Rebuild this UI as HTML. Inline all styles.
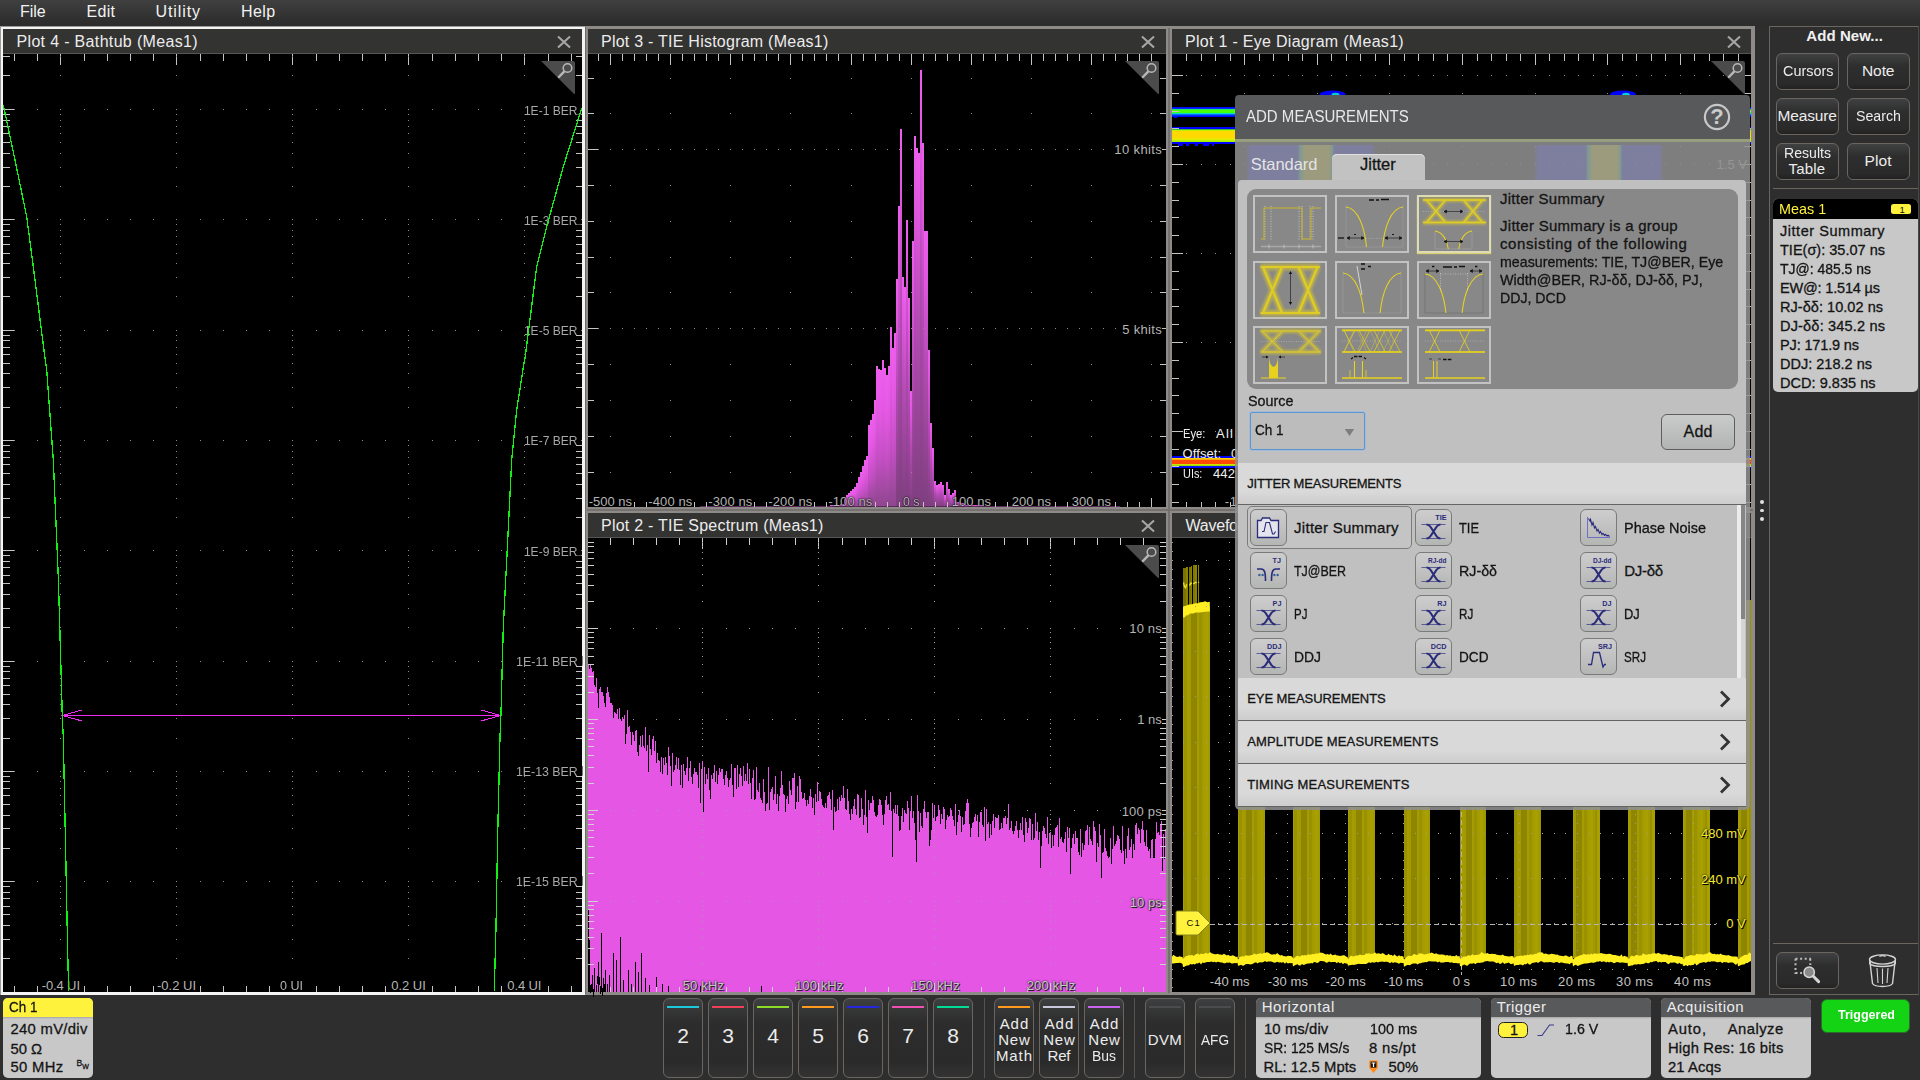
<!DOCTYPE html>
<html><head><meta charset="utf-8"><title>scope</title>
<style>
html,body{margin:0;padding:0;width:1920px;height:1080px;overflow:hidden;background:#2e2e2e;font-family:"Liberation Sans",sans-serif;}
.t{position:absolute;white-space:nowrap;}
svg{position:absolute;left:0;top:0;overflow:visible}
.abs{position:absolute}
</style></head><body>
<div style="position:absolute;left:0;top:0;width:1920px;height:26px;background:linear-gradient(#404040,#2d2d2d 85%)"></div>
<div class="t" style="left:20.00px;top:4.38px;font-size:16px;line-height:16px;color:#f2f2f2;letter-spacing:-0.050px;">File</div>
<div class="t" style="left:86.50px;top:4.38px;font-size:16px;line-height:16px;color:#f2f2f2;letter-spacing:0.292px;">Edit</div>
<div class="t" style="left:155.60px;top:4.38px;font-size:16px;line-height:16px;color:#f2f2f2;letter-spacing:0.879px;">Utility</div>
<div class="t" style="left:241.00px;top:4.38px;font-size:16px;line-height:16px;color:#f2f2f2;letter-spacing:0.375px;">Help</div>
<div style="position:absolute;left:0;top:26px;width:1754.5px;height:969px;background:#8e8a88"></div>
<div style="position:absolute;left:0;top:26px;width:585px;height:969px;background:#f4f4f4;box-shadow:inset 1px 1px 0 #9a9a9a"></div>
<div style="position:absolute;left:1168px;top:28px;width:2px;height:965px;background:#75716f"></div>
<div style="position:absolute;left:587px;top:509px;width:1166px;height:2px;background:#75716f"></div>
<div style="position:absolute;left:585px;top:27px;width:1px;height:967px;background:#6e6a68"></div>
<div style="position:absolute;left:3px;top:29px;width:579px;height:963px;background:#000"></div>
<div style="position:absolute;left:3px;top:29px;width:579px;height:24px;background:#333332;border-bottom:1px solid #555"></div>
<div class="t" style="left:16.50px;top:34.48px;font-size:16px;line-height:16px;color:#ececec;letter-spacing:0.332px;">Plot 4 - Bathtub (Meas1)</div>
<svg style="position:absolute;left:555.7px;top:33.8px" width="16" height="16" viewBox="-8 -8 16 16"><path d="M-6 -5.6 L6 5.6 M6 -5.6 L-6 5.6" stroke="#a6a6a6" stroke-width="2.1" fill="none"/></svg>
<div style="position:absolute;left:588px;top:29px;width:578px;height:478px;background:#000"></div>
<div style="position:absolute;left:588px;top:29px;width:578px;height:24px;background:#333332;border-bottom:1px solid #555"></div>
<div class="t" style="left:601.00px;top:34.48px;font-size:16px;line-height:16px;color:#ececec;letter-spacing:0.243px;">Plot 3 - TIE Histogram (Meas1)</div>
<svg style="position:absolute;left:1139.7px;top:33.8px" width="16" height="16" viewBox="-8 -8 16 16"><path d="M-6 -5.6 L6 5.6 M6 -5.6 L-6 5.6" stroke="#a6a6a6" stroke-width="2.1" fill="none"/></svg>
<div style="position:absolute;left:588px;top:513px;width:578px;height:479px;background:#000"></div>
<div style="position:absolute;left:588px;top:513px;width:578px;height:24px;background:#333332;border-bottom:1px solid #555"></div>
<div class="t" style="left:601.00px;top:518.48px;font-size:16px;line-height:16px;color:#ececec;letter-spacing:0.234px;">Plot 2 - TIE Spectrum (Meas1)</div>
<svg style="position:absolute;left:1139.7px;top:517.8px" width="16" height="16" viewBox="-8 -8 16 16"><path d="M-6 -5.6 L6 5.6 M6 -5.6 L-6 5.6" stroke="#a6a6a6" stroke-width="2.1" fill="none"/></svg>
<div style="position:absolute;left:1172px;top:29px;width:579px;height:478px;background:#000"></div>
<div style="position:absolute;left:1172px;top:29px;width:579px;height:24px;background:#333332;border-bottom:1px solid #555"></div>
<div class="t" style="left:1185.00px;top:34.48px;font-size:16px;line-height:16px;color:#ececec;letter-spacing:0.294px;">Plot 1 - Eye Diagram (Meas1)</div>
<svg style="position:absolute;left:1725.7px;top:33.8px" width="16" height="16" viewBox="-8 -8 16 16"><path d="M-6 -5.6 L6 5.6 M6 -5.6 L-6 5.6" stroke="#a6a6a6" stroke-width="2.1" fill="none"/></svg>
<div style="position:absolute;left:1172px;top:513px;width:579px;height:479px;background:#000"></div>
<div style="position:absolute;left:1172px;top:513px;width:579px;height:24px;background:#333332;border-bottom:1px solid #555"></div>
<div class="t" style="left:1185.50px;top:518.48px;font-size:16px;line-height:16px;color:#ececec;letter-spacing:-0.229px;">Waveform View</div>
<svg style="position:absolute;left:1725.7px;top:517.8px" width="16" height="16" viewBox="-8 -8 16 16"><path d="M-6 -5.6 L6 5.6 M6 -5.6 L-6 5.6" stroke="#a6a6a6" stroke-width="2.1" fill="none"/></svg>
<svg width="1920" height="1080" viewBox="0 0 1920 1080" shape-rendering="crispEdges"><path fill="#c4c4c4" d="M14 54h1v7h-1zM14 986h1v6h-1zM37 54h1v7h-1zM37 986h1v6h-1zM60 54h1v11h-1zM60 982h1v10h-1zM84 54h1v7h-1zM84 986h1v6h-1zM107 54h1v7h-1zM107 986h1v6h-1zM130 54h1v7h-1zM130 986h1v6h-1zM153 54h1v7h-1zM153 986h1v6h-1zM176 54h1v11h-1zM176 982h1v10h-1zM200 54h1v7h-1zM200 986h1v6h-1zM223 54h1v7h-1zM223 986h1v6h-1zM246 54h1v7h-1zM246 986h1v6h-1zM269 54h1v7h-1zM269 986h1v6h-1zM292 54h1v11h-1zM292 982h1v10h-1zM316 54h1v7h-1zM316 986h1v6h-1zM339 54h1v7h-1zM339 986h1v6h-1zM362 54h1v7h-1zM362 986h1v6h-1zM385 54h1v7h-1zM385 986h1v6h-1zM408 54h1v11h-1zM408 982h1v10h-1zM432 54h1v7h-1zM432 986h1v6h-1zM455 54h1v7h-1zM455 986h1v6h-1zM478 54h1v7h-1zM478 986h1v6h-1zM501 54h1v7h-1zM501 986h1v6h-1zM524 54h1v11h-1zM524 982h1v10h-1zM548 54h1v7h-1zM548 986h1v6h-1zM571 54h1v7h-1zM571 986h1v6h-1zM3 75h7v1h-7zM576 75h6v1h-6zM3 56h7v1h-7zM576 56h6v1h-6zM3 186h7v1h-7zM576 186h6v1h-6zM3 167h7v1h-7zM576 167h6v1h-6zM3 153h7v1h-7zM576 153h6v1h-6zM3 142h7v1h-7zM576 142h6v1h-6zM3 133h7v1h-7zM576 133h6v1h-6zM3 126h7v1h-7zM576 126h6v1h-6zM3 120h7v1h-7zM576 120h6v1h-6zM3 114h7v1h-7zM576 114h6v1h-6zM3 296h7v1h-7zM576 296h6v1h-6zM3 277h7v1h-7zM576 277h6v1h-6zM3 263h7v1h-7zM576 263h6v1h-6zM3 253h7v1h-7zM576 253h6v1h-6zM3 244h7v1h-7zM576 244h6v1h-6zM3 236h7v1h-7zM576 236h6v1h-6zM3 230h7v1h-7zM576 230h6v1h-6zM3 224h7v1h-7zM576 224h6v1h-6zM3 407h7v1h-7zM576 407h6v1h-6zM3 387h7v1h-7zM576 387h6v1h-6zM3 373h7v1h-7zM576 373h6v1h-6zM3 363h7v1h-7zM576 363h6v1h-6zM3 354h7v1h-7zM576 354h6v1h-6zM3 347h7v1h-7zM576 347h6v1h-6zM3 340h7v1h-7zM576 340h6v1h-6zM3 335h7v1h-7zM576 335h6v1h-6zM3 517h7v1h-7zM576 517h6v1h-6zM3 498h7v1h-7zM576 498h6v1h-6zM3 484h7v1h-7zM576 484h6v1h-6zM3 473h7v1h-7zM576 473h6v1h-6zM3 464h7v1h-7zM576 464h6v1h-6zM3 457h7v1h-7zM576 457h6v1h-6zM3 451h7v1h-7zM576 451h6v1h-6zM3 445h7v1h-7zM576 445h6v1h-6zM3 627h7v1h-7zM576 627h6v1h-6zM3 608h7v1h-7zM576 608h6v1h-6zM3 594h7v1h-7zM576 594h6v1h-6zM3 583h7v1h-7zM576 583h6v1h-6zM3 575h7v1h-7zM576 575h6v1h-6zM3 567h7v1h-7zM576 567h6v1h-6zM3 561h7v1h-7zM576 561h6v1h-6zM3 555h7v1h-7zM576 555h6v1h-6zM3 738h7v1h-7zM576 738h6v1h-6zM3 718h7v1h-7zM576 718h6v1h-6zM3 704h7v1h-7zM576 704h6v1h-6zM3 694h7v1h-7zM576 694h6v1h-6zM3 685h7v1h-7zM576 685h6v1h-6zM3 678h7v1h-7zM576 678h6v1h-6zM3 671h7v1h-7zM576 671h6v1h-6zM3 666h7v1h-7zM576 666h6v1h-6zM3 848h7v1h-7zM576 848h6v1h-6zM3 828h7v1h-7zM576 828h6v1h-6zM3 815h7v1h-7zM576 815h6v1h-6zM3 804h7v1h-7zM576 804h6v1h-6zM3 795h7v1h-7zM576 795h6v1h-6zM3 788h7v1h-7zM576 788h6v1h-6zM3 781h7v1h-7zM576 781h6v1h-6zM3 776h7v1h-7zM576 776h6v1h-6zM3 958h7v1h-7zM576 958h6v1h-6zM3 939h7v1h-7zM576 939h6v1h-6zM3 925h7v1h-7zM576 925h6v1h-6zM3 914h7v1h-7zM576 914h6v1h-6zM3 906h7v1h-7zM576 906h6v1h-6zM3 898h7v1h-7zM576 898h6v1h-6zM3 892h7v1h-7zM576 892h6v1h-6zM3 886h7v1h-7zM576 886h6v1h-6zM3 109h11v1h-11zM571 109h11v1h-11zM3 219h11v1h-11zM571 219h11v1h-11zM3 330h11v1h-11zM571 330h11v1h-11zM3 440h11v1h-11zM571 440h11v1h-11zM3 550h11v1h-11zM571 550h11v1h-11zM3 661h11v1h-11zM571 661h11v1h-11zM3 771h11v1h-11zM571 771h11v1h-11zM3 881h11v1h-11zM571 881h11v1h-11z"/><path fill="#8c8c8c" d="M14 109h1v1h-1zM37 109h1v1h-1zM60 109h1v1h-1zM84 109h1v1h-1zM107 109h1v1h-1zM130 109h1v1h-1zM153 109h1v1h-1zM176 109h1v1h-1zM200 109h1v1h-1zM223 109h1v1h-1zM246 109h1v1h-1zM269 109h1v1h-1zM292 109h1v1h-1zM316 109h1v1h-1zM339 109h1v1h-1zM362 109h1v1h-1zM385 109h1v1h-1zM408 109h1v1h-1zM432 109h1v1h-1zM455 109h1v1h-1zM478 109h1v1h-1zM501 109h1v1h-1zM524 109h1v1h-1zM548 109h1v1h-1zM571 109h1v1h-1zM14 219h1v1h-1zM37 219h1v1h-1zM60 219h1v1h-1zM84 219h1v1h-1zM107 219h1v1h-1zM130 219h1v1h-1zM153 219h1v1h-1zM176 219h1v1h-1zM200 219h1v1h-1zM223 219h1v1h-1zM246 219h1v1h-1zM269 219h1v1h-1zM292 219h1v1h-1zM316 219h1v1h-1zM339 219h1v1h-1zM362 219h1v1h-1zM385 219h1v1h-1zM408 219h1v1h-1zM432 219h1v1h-1zM455 219h1v1h-1zM478 219h1v1h-1zM501 219h1v1h-1zM524 219h1v1h-1zM548 219h1v1h-1zM571 219h1v1h-1zM14 330h1v1h-1zM37 330h1v1h-1zM60 330h1v1h-1zM84 330h1v1h-1zM107 330h1v1h-1zM130 330h1v1h-1zM153 330h1v1h-1zM176 330h1v1h-1zM200 330h1v1h-1zM223 330h1v1h-1zM246 330h1v1h-1zM269 330h1v1h-1zM292 330h1v1h-1zM316 330h1v1h-1zM339 330h1v1h-1zM362 330h1v1h-1zM385 330h1v1h-1zM408 330h1v1h-1zM432 330h1v1h-1zM455 330h1v1h-1zM478 330h1v1h-1zM501 330h1v1h-1zM524 330h1v1h-1zM548 330h1v1h-1zM571 330h1v1h-1zM14 440h1v1h-1zM37 440h1v1h-1zM60 440h1v1h-1zM84 440h1v1h-1zM107 440h1v1h-1zM130 440h1v1h-1zM153 440h1v1h-1zM176 440h1v1h-1zM200 440h1v1h-1zM223 440h1v1h-1zM246 440h1v1h-1zM269 440h1v1h-1zM292 440h1v1h-1zM316 440h1v1h-1zM339 440h1v1h-1zM362 440h1v1h-1zM385 440h1v1h-1zM408 440h1v1h-1zM432 440h1v1h-1zM455 440h1v1h-1zM478 440h1v1h-1zM501 440h1v1h-1zM524 440h1v1h-1zM548 440h1v1h-1zM571 440h1v1h-1zM14 550h1v1h-1zM37 550h1v1h-1zM60 550h1v1h-1zM84 550h1v1h-1zM107 550h1v1h-1zM130 550h1v1h-1zM153 550h1v1h-1zM176 550h1v1h-1zM200 550h1v1h-1zM223 550h1v1h-1zM246 550h1v1h-1zM269 550h1v1h-1zM292 550h1v1h-1zM316 550h1v1h-1zM339 550h1v1h-1zM362 550h1v1h-1zM385 550h1v1h-1zM408 550h1v1h-1zM432 550h1v1h-1zM455 550h1v1h-1zM478 550h1v1h-1zM501 550h1v1h-1zM524 550h1v1h-1zM548 550h1v1h-1zM571 550h1v1h-1zM14 661h1v1h-1zM37 661h1v1h-1zM60 661h1v1h-1zM84 661h1v1h-1zM107 661h1v1h-1zM130 661h1v1h-1zM153 661h1v1h-1zM176 661h1v1h-1zM200 661h1v1h-1zM223 661h1v1h-1zM246 661h1v1h-1zM269 661h1v1h-1zM292 661h1v1h-1zM316 661h1v1h-1zM339 661h1v1h-1zM362 661h1v1h-1zM385 661h1v1h-1zM408 661h1v1h-1zM432 661h1v1h-1zM455 661h1v1h-1zM478 661h1v1h-1zM501 661h1v1h-1zM524 661h1v1h-1zM548 661h1v1h-1zM571 661h1v1h-1zM14 771h1v1h-1zM37 771h1v1h-1zM60 771h1v1h-1zM84 771h1v1h-1zM107 771h1v1h-1zM130 771h1v1h-1zM153 771h1v1h-1zM176 771h1v1h-1zM200 771h1v1h-1zM223 771h1v1h-1zM246 771h1v1h-1zM269 771h1v1h-1zM292 771h1v1h-1zM316 771h1v1h-1zM339 771h1v1h-1zM362 771h1v1h-1zM385 771h1v1h-1zM408 771h1v1h-1zM432 771h1v1h-1zM455 771h1v1h-1zM478 771h1v1h-1zM501 771h1v1h-1zM524 771h1v1h-1zM548 771h1v1h-1zM571 771h1v1h-1zM14 881h1v1h-1zM37 881h1v1h-1zM60 881h1v1h-1zM84 881h1v1h-1zM107 881h1v1h-1zM130 881h1v1h-1zM153 881h1v1h-1zM176 881h1v1h-1zM200 881h1v1h-1zM223 881h1v1h-1zM246 881h1v1h-1zM269 881h1v1h-1zM292 881h1v1h-1zM316 881h1v1h-1zM339 881h1v1h-1zM362 881h1v1h-1zM385 881h1v1h-1zM408 881h1v1h-1zM432 881h1v1h-1zM455 881h1v1h-1zM478 881h1v1h-1zM501 881h1v1h-1zM524 881h1v1h-1zM548 881h1v1h-1zM571 881h1v1h-1zM60 75h1v1h-1zM60 56h1v1h-1zM60 186h1v1h-1zM60 167h1v1h-1zM60 153h1v1h-1zM60 142h1v1h-1zM60 133h1v1h-1zM60 126h1v1h-1zM60 120h1v1h-1zM60 114h1v1h-1zM60 296h1v1h-1zM60 277h1v1h-1zM60 263h1v1h-1zM60 253h1v1h-1zM60 244h1v1h-1zM60 236h1v1h-1zM60 230h1v1h-1zM60 224h1v1h-1zM60 407h1v1h-1zM60 387h1v1h-1zM60 373h1v1h-1zM60 363h1v1h-1zM60 354h1v1h-1zM60 347h1v1h-1zM60 340h1v1h-1zM60 335h1v1h-1zM60 517h1v1h-1zM60 498h1v1h-1zM60 484h1v1h-1zM60 473h1v1h-1zM60 464h1v1h-1zM60 457h1v1h-1zM60 451h1v1h-1zM60 445h1v1h-1zM60 627h1v1h-1zM60 608h1v1h-1zM60 594h1v1h-1zM60 583h1v1h-1zM60 575h1v1h-1zM60 567h1v1h-1zM60 561h1v1h-1zM60 555h1v1h-1zM60 738h1v1h-1zM60 718h1v1h-1zM60 704h1v1h-1zM60 694h1v1h-1zM60 685h1v1h-1zM60 678h1v1h-1zM60 671h1v1h-1zM60 666h1v1h-1zM60 848h1v1h-1zM60 828h1v1h-1zM60 815h1v1h-1zM60 804h1v1h-1zM60 795h1v1h-1zM60 788h1v1h-1zM60 781h1v1h-1zM60 776h1v1h-1zM60 958h1v1h-1zM60 939h1v1h-1zM60 925h1v1h-1zM60 914h1v1h-1zM60 906h1v1h-1zM60 898h1v1h-1zM60 892h1v1h-1zM60 886h1v1h-1zM176 75h1v1h-1zM176 56h1v1h-1zM176 186h1v1h-1zM176 167h1v1h-1zM176 153h1v1h-1zM176 142h1v1h-1zM176 133h1v1h-1zM176 126h1v1h-1zM176 120h1v1h-1zM176 114h1v1h-1zM176 296h1v1h-1zM176 277h1v1h-1zM176 263h1v1h-1zM176 253h1v1h-1zM176 244h1v1h-1zM176 236h1v1h-1zM176 230h1v1h-1zM176 224h1v1h-1zM176 407h1v1h-1zM176 387h1v1h-1zM176 373h1v1h-1zM176 363h1v1h-1zM176 354h1v1h-1zM176 347h1v1h-1zM176 340h1v1h-1zM176 335h1v1h-1zM176 517h1v1h-1zM176 498h1v1h-1zM176 484h1v1h-1zM176 473h1v1h-1zM176 464h1v1h-1zM176 457h1v1h-1zM176 451h1v1h-1zM176 445h1v1h-1zM176 627h1v1h-1zM176 608h1v1h-1zM176 594h1v1h-1zM176 583h1v1h-1zM176 575h1v1h-1zM176 567h1v1h-1zM176 561h1v1h-1zM176 555h1v1h-1zM176 738h1v1h-1zM176 718h1v1h-1zM176 704h1v1h-1zM176 694h1v1h-1zM176 685h1v1h-1zM176 678h1v1h-1zM176 671h1v1h-1zM176 666h1v1h-1zM176 848h1v1h-1zM176 828h1v1h-1zM176 815h1v1h-1zM176 804h1v1h-1zM176 795h1v1h-1zM176 788h1v1h-1zM176 781h1v1h-1zM176 776h1v1h-1zM176 958h1v1h-1zM176 939h1v1h-1zM176 925h1v1h-1zM176 914h1v1h-1zM176 906h1v1h-1zM176 898h1v1h-1zM176 892h1v1h-1zM176 886h1v1h-1zM292 75h1v1h-1zM292 56h1v1h-1zM292 186h1v1h-1zM292 167h1v1h-1zM292 153h1v1h-1zM292 142h1v1h-1zM292 133h1v1h-1zM292 126h1v1h-1zM292 120h1v1h-1zM292 114h1v1h-1zM292 296h1v1h-1zM292 277h1v1h-1zM292 263h1v1h-1zM292 253h1v1h-1zM292 244h1v1h-1zM292 236h1v1h-1zM292 230h1v1h-1zM292 224h1v1h-1zM292 407h1v1h-1zM292 387h1v1h-1zM292 373h1v1h-1zM292 363h1v1h-1zM292 354h1v1h-1zM292 347h1v1h-1zM292 340h1v1h-1zM292 335h1v1h-1zM292 517h1v1h-1zM292 498h1v1h-1zM292 484h1v1h-1zM292 473h1v1h-1zM292 464h1v1h-1zM292 457h1v1h-1zM292 451h1v1h-1zM292 445h1v1h-1zM292 627h1v1h-1zM292 608h1v1h-1zM292 594h1v1h-1zM292 583h1v1h-1zM292 575h1v1h-1zM292 567h1v1h-1zM292 561h1v1h-1zM292 555h1v1h-1zM292 738h1v1h-1zM292 718h1v1h-1zM292 704h1v1h-1zM292 694h1v1h-1zM292 685h1v1h-1zM292 678h1v1h-1zM292 671h1v1h-1zM292 666h1v1h-1zM292 848h1v1h-1zM292 828h1v1h-1zM292 815h1v1h-1zM292 804h1v1h-1zM292 795h1v1h-1zM292 788h1v1h-1zM292 781h1v1h-1zM292 776h1v1h-1zM292 958h1v1h-1zM292 939h1v1h-1zM292 925h1v1h-1zM292 914h1v1h-1zM292 906h1v1h-1zM292 898h1v1h-1zM292 892h1v1h-1zM292 886h1v1h-1zM408 75h1v1h-1zM408 56h1v1h-1zM408 186h1v1h-1zM408 167h1v1h-1zM408 153h1v1h-1zM408 142h1v1h-1zM408 133h1v1h-1zM408 126h1v1h-1zM408 120h1v1h-1zM408 114h1v1h-1zM408 296h1v1h-1zM408 277h1v1h-1zM408 263h1v1h-1zM408 253h1v1h-1zM408 244h1v1h-1zM408 236h1v1h-1zM408 230h1v1h-1zM408 224h1v1h-1zM408 407h1v1h-1zM408 387h1v1h-1zM408 373h1v1h-1zM408 363h1v1h-1zM408 354h1v1h-1zM408 347h1v1h-1zM408 340h1v1h-1zM408 335h1v1h-1zM408 517h1v1h-1zM408 498h1v1h-1zM408 484h1v1h-1zM408 473h1v1h-1zM408 464h1v1h-1zM408 457h1v1h-1zM408 451h1v1h-1zM408 445h1v1h-1zM408 627h1v1h-1zM408 608h1v1h-1zM408 594h1v1h-1zM408 583h1v1h-1zM408 575h1v1h-1zM408 567h1v1h-1zM408 561h1v1h-1zM408 555h1v1h-1zM408 738h1v1h-1zM408 718h1v1h-1zM408 704h1v1h-1zM408 694h1v1h-1zM408 685h1v1h-1zM408 678h1v1h-1zM408 671h1v1h-1zM408 666h1v1h-1zM408 848h1v1h-1zM408 828h1v1h-1zM408 815h1v1h-1zM408 804h1v1h-1zM408 795h1v1h-1zM408 788h1v1h-1zM408 781h1v1h-1zM408 776h1v1h-1zM408 958h1v1h-1zM408 939h1v1h-1zM408 925h1v1h-1zM408 914h1v1h-1zM408 906h1v1h-1zM408 898h1v1h-1zM408 892h1v1h-1zM408 886h1v1h-1zM524 75h1v1h-1zM524 56h1v1h-1zM524 186h1v1h-1zM524 167h1v1h-1zM524 153h1v1h-1zM524 142h1v1h-1zM524 133h1v1h-1zM524 126h1v1h-1zM524 120h1v1h-1zM524 114h1v1h-1zM524 296h1v1h-1zM524 277h1v1h-1zM524 263h1v1h-1zM524 253h1v1h-1zM524 244h1v1h-1zM524 236h1v1h-1zM524 230h1v1h-1zM524 224h1v1h-1zM524 407h1v1h-1zM524 387h1v1h-1zM524 373h1v1h-1zM524 363h1v1h-1zM524 354h1v1h-1zM524 347h1v1h-1zM524 340h1v1h-1zM524 335h1v1h-1zM524 517h1v1h-1zM524 498h1v1h-1zM524 484h1v1h-1zM524 473h1v1h-1zM524 464h1v1h-1zM524 457h1v1h-1zM524 451h1v1h-1zM524 445h1v1h-1zM524 627h1v1h-1zM524 608h1v1h-1zM524 594h1v1h-1zM524 583h1v1h-1zM524 575h1v1h-1zM524 567h1v1h-1zM524 561h1v1h-1zM524 555h1v1h-1zM524 738h1v1h-1zM524 718h1v1h-1zM524 704h1v1h-1zM524 694h1v1h-1zM524 685h1v1h-1zM524 678h1v1h-1zM524 671h1v1h-1zM524 666h1v1h-1zM524 848h1v1h-1zM524 828h1v1h-1zM524 815h1v1h-1zM524 804h1v1h-1zM524 795h1v1h-1zM524 788h1v1h-1zM524 781h1v1h-1zM524 776h1v1h-1zM524 958h1v1h-1zM524 939h1v1h-1zM524 925h1v1h-1zM524 914h1v1h-1zM524 906h1v1h-1zM524 898h1v1h-1zM524 892h1v1h-1zM524 886h1v1h-1z"/><path d="M62 715.5 H501 M82 710 L62.5 715.5 L82 721 M481 710 L500.5 715.5 L481 721" fill="none" stroke="#f428f4" stroke-width="1"/><path shape-rendering="auto" d="M541 61 L573 61 Q575 61 575 63 L575 93 Q575 95 573.5 93.5 Z" fill="#4b4b4b"/><circle shape-rendering="auto" cx="567.5" cy="68" r="4.3" fill="none" stroke="#b8b8b8" stroke-width="1.5"/><path shape-rendering="auto" d="M563.9 71.8 L558.9 77" stroke="#b8b8b8" stroke-width="2.4" stroke-linecap="round"/>
<defs><linearGradient id="hb" x1="0" y1="0" x2="0" y2="1"><stop offset="0" stop-color="#ee5eee"/><stop offset="0.18" stop-color="#e056e0"/><stop offset="0.5" stop-color="#b24ab2"/><stop offset="1" stop-color="#7e3f7e"/></linearGradient><linearGradient id="hb2" x1="0" y1="0" x2="0" y2="1"><stop offset="0" stop-color="#ee5eee"/><stop offset="0.3" stop-color="#e458e4"/><stop offset="0.65" stop-color="#c44fc4"/><stop offset="1" stop-color="#8e468e"/></linearGradient></defs><rect x="826" y="505.8" width="2" height="1.2" fill="url(#hb2)"/><rect x="828" y="505.5" width="2" height="1.5" fill="url(#hb2)"/><rect x="830" y="505.3" width="2" height="1.7" fill="url(#hb2)"/><rect x="832" y="505.1" width="2" height="1.9" fill="url(#hb2)"/><rect x="834" y="504.9" width="2" height="2.1" fill="url(#hb2)"/><rect x="836" y="504.7" width="2" height="2.3" fill="url(#hb2)"/><rect x="838" y="504.5" width="2" height="2.5" fill="url(#hb2)"/><rect x="840" y="504.3" width="2" height="2.7" fill="url(#hb2)"/><rect x="842" y="504.2" width="2" height="2.8" fill="url(#hb2)"/><rect x="844" y="499.3" width="2" height="7.7" fill="url(#hb2)"/><rect x="846" y="495.4" width="2" height="11.6" fill="url(#hb2)"/><rect x="848" y="493.2" width="2" height="13.8" fill="url(#hb2)"/><rect x="850" y="491.2" width="2" height="15.8" fill="url(#hb2)"/><rect x="852" y="489.2" width="2" height="17.8" fill="url(#hb2)"/><rect x="854" y="487.1" width="2" height="19.9" fill="url(#hb2)"/><rect x="856" y="482.5" width="2" height="24.5" fill="url(#hb2)"/><rect x="858" y="476.7" width="2" height="30.3" fill="url(#hb2)"/><rect x="860" y="471.5" width="2" height="35.5" fill="url(#hb2)"/><rect x="862" y="466.2" width="2" height="40.8" fill="url(#hb2)"/><rect x="864" y="460.4" width="2" height="46.6" fill="url(#hb2)"/><rect x="866" y="455.8" width="2" height="51.2" fill="url(#hb2)"/><rect x="868" y="424.6" width="2" height="82.4" fill="url(#hb2)"/><rect x="870" y="420.1" width="2" height="86.9" fill="url(#hb2)"/><rect x="872" y="414.2" width="2" height="92.8" fill="url(#hb2)"/><rect x="874" y="399.6" width="2" height="107.4" fill="url(#hb2)"/><rect x="876" y="366.2" width="2" height="140.8" fill="url(#hb2)"/><rect x="878" y="368.8" width="2" height="138.2" fill="url(#hb2)"/><rect x="880" y="370.4" width="2" height="136.6" fill="url(#hb2)"/><rect x="882" y="360.0" width="2" height="147.0" fill="url(#hb2)"/><rect x="884" y="368.3" width="2" height="138.7" fill="url(#hb2)"/><rect x="886" y="375.4" width="2" height="131.6" fill="url(#hb2)"/><rect x="888" y="366.2" width="2" height="140.8" fill="url(#hb2)"/><rect x="890" y="326.7" width="2" height="180.3" fill="url(#hb2)"/><rect x="892" y="347.5" width="2" height="159.5" fill="url(#hb2)"/><rect x="894" y="332.9" width="2" height="174.1" fill="url(#hb2)"/><rect x="896" y="278.8" width="2" height="228.2" fill="url(#hb)"/><rect x="898" y="205.8" width="2" height="301.2" fill="url(#hb)"/><rect x="900" y="128.8" width="2" height="378.2" fill="url(#hb)"/><rect x="902" y="276.7" width="2" height="230.3" fill="url(#hb)"/><rect x="904" y="287.1" width="2" height="219.9" fill="url(#hb)"/><rect x="906" y="220.4" width="2" height="286.6" fill="url(#hb)"/><rect x="908" y="297.5" width="2" height="209.5" fill="url(#hb)"/><rect x="910" y="391.2" width="2" height="115.8" fill="url(#hb)"/><rect x="912" y="241.2" width="2" height="265.8" fill="url(#hb)"/><rect x="914" y="135.8" width="2" height="371.2" fill="url(#hb)"/><rect x="916" y="147.5" width="2" height="359.5" fill="url(#hb)"/><rect x="918" y="152.5" width="2" height="354.5" fill="url(#hb)"/><rect x="920" y="70.4" width="2" height="436.6" fill="url(#hb)"/><rect x="922" y="143.3" width="2" height="363.7" fill="url(#hb)"/><rect x="924" y="230.8" width="2" height="276.2" fill="url(#hb)"/><rect x="926" y="230.8" width="2" height="276.2" fill="url(#hb)"/><rect x="928" y="349.6" width="2" height="157.4" fill="url(#hb)"/><rect x="930" y="422.5" width="2" height="84.5" fill="url(#hb)"/><rect x="932" y="447.5" width="2" height="59.5" fill="url(#hb)"/><rect x="934" y="480.8" width="2" height="26.2" fill="url(#hb)"/><rect x="936" y="485.0" width="2" height="22.0" fill="url(#hb)"/><rect x="938" y="483.5" width="2" height="23.5" fill="url(#hb)"/><rect x="940" y="481.7" width="2" height="25.3" fill="url(#hb)"/><rect x="942" y="485.0" width="2" height="22.0" fill="url(#hb)"/><rect x="944" y="495.4" width="2" height="11.6" fill="url(#hb)"/><rect x="946" y="481.7" width="2" height="25.3" fill="url(#hb)"/><rect x="948" y="489.0" width="2" height="18.0" fill="url(#hb)"/><rect x="950" y="495.4" width="2" height="11.6" fill="url(#hb)"/><rect x="952" y="493.3" width="2" height="13.7" fill="url(#hb)"/><rect x="954" y="490.0" width="2" height="17.0" fill="url(#hb)"/><rect x="956" y="501.7" width="2" height="5.3" fill="url(#hb)"/><rect x="958" y="502.1" width="2" height="4.9" fill="url(#hb)"/><rect x="960" y="502.8" width="2" height="4.2" fill="url(#hb)"/><rect x="962" y="503.4" width="2" height="3.6" fill="url(#hb)"/><rect x="964" y="504.1" width="2" height="2.9" fill="url(#hb)"/><rect x="966" y="505.0" width="2" height="2.0" fill="url(#hb)"/><rect x="968" y="505.0" width="2" height="2.0" fill="url(#hb)"/><rect x="970" y="505.1" width="2" height="1.9" fill="url(#hb)"/><rect x="972" y="505.2" width="2" height="1.8" fill="url(#hb)"/><rect x="974" y="505.2" width="2" height="1.8" fill="url(#hb)"/><rect x="976" y="505.3" width="2" height="1.7" fill="url(#hb)"/><rect x="978" y="505.3" width="2" height="1.7" fill="url(#hb)"/><rect x="980" y="505.4" width="2" height="1.6" fill="url(#hb)"/><rect x="982" y="505.4" width="2" height="1.6" fill="url(#hb)"/><rect x="984" y="505.5" width="2" height="1.5" fill="url(#hb)"/><rect x="986" y="505.6" width="2" height="1.4" fill="url(#hb)"/><rect x="988" y="505.6" width="2" height="1.4" fill="url(#hb)"/><rect x="990" y="505.7" width="2" height="1.3" fill="url(#hb)"/><rect x="992" y="505.7" width="2" height="1.3" fill="url(#hb)"/><rect x="994" y="505.8" width="2" height="1.2" fill="url(#hb)"/><path fill="#5a2a5a" d="M700 506h420v1h-420z"/><path fill="#c4c4c4" d="M598 54h1v7h-1zM610 54h1v11h-1zM622 54h1v7h-1zM634 54h1v7h-1zM634 502h1v5h-1zM646 54h1v7h-1zM646 502h1v5h-1zM658 54h1v7h-1zM670 54h1v11h-1zM682 54h1v7h-1zM694 54h1v7h-1zM694 502h1v5h-1zM706 54h1v7h-1zM706 502h1v5h-1zM718 54h1v7h-1zM730 54h1v11h-1zM742 54h1v7h-1zM754 54h1v7h-1zM754 502h1v5h-1zM766 54h1v7h-1zM766 502h1v5h-1zM778 54h1v7h-1zM790 54h1v11h-1zM802 54h1v7h-1zM814 54h1v7h-1zM814 502h1v5h-1zM826 54h1v7h-1zM826 502h1v5h-1zM838 54h1v7h-1zM851 54h1v11h-1zM863 54h1v7h-1zM875 54h1v7h-1zM875 502h1v5h-1zM887 54h1v7h-1zM887 502h1v5h-1zM899 54h1v7h-1zM899 502h1v5h-1zM911 54h1v11h-1zM923 54h1v7h-1zM923 502h1v5h-1zM935 54h1v7h-1zM935 502h1v5h-1zM947 54h1v7h-1zM947 502h1v5h-1zM959 54h1v7h-1zM971 54h1v11h-1zM983 54h1v7h-1zM995 54h1v7h-1zM995 502h1v5h-1zM1007 54h1v7h-1zM1007 502h1v5h-1zM1019 54h1v7h-1zM1031 54h1v11h-1zM1043 54h1v7h-1zM1055 54h1v7h-1zM1055 502h1v5h-1zM1067 54h1v7h-1zM1067 502h1v5h-1zM1079 54h1v7h-1zM1091 54h1v11h-1zM1103 54h1v7h-1zM1115 54h1v7h-1zM1115 502h1v5h-1zM1127 54h1v7h-1zM1127 502h1v5h-1zM1139 54h1v7h-1zM1139 502h1v5h-1zM1151 54h1v11h-1zM1151 498h1v9h-1zM588 78h6v1h-6zM1160 78h6v1h-6zM588 113h6v1h-6zM1160 113h6v1h-6zM588 149h10v1h-10zM1156 149h10v1h-10zM588 185h6v1h-6zM1160 185h6v1h-6zM588 221h6v1h-6zM1160 221h6v1h-6zM588 257h6v1h-6zM1160 257h6v1h-6zM588 292h6v1h-6zM1160 292h6v1h-6zM588 328h10v1h-10zM1156 328h10v1h-10zM588 364h6v1h-6zM1160 364h6v1h-6zM588 400h6v1h-6zM1160 400h6v1h-6zM588 436h6v1h-6zM1160 436h6v1h-6zM588 472h6v1h-6zM1160 472h6v1h-6z"/><path fill="#8c8c8c" d="M598 149h1v1h-1zM610 149h1v1h-1zM622 149h1v1h-1zM634 149h1v1h-1zM646 149h1v1h-1zM658 149h1v1h-1zM670 149h1v1h-1zM682 149h1v1h-1zM694 149h1v1h-1zM706 149h1v1h-1zM718 149h1v1h-1zM730 149h1v1h-1zM742 149h1v1h-1zM754 149h1v1h-1zM766 149h1v1h-1zM778 149h1v1h-1zM790 149h1v1h-1zM802 149h1v1h-1zM814 149h1v1h-1zM826 149h1v1h-1zM838 149h1v1h-1zM851 149h1v1h-1zM863 149h1v1h-1zM875 149h1v1h-1zM887 149h1v1h-1zM899 149h1v1h-1zM911 149h1v1h-1zM923 149h1v1h-1zM935 149h1v1h-1zM947 149h1v1h-1zM959 149h1v1h-1zM971 149h1v1h-1zM983 149h1v1h-1zM995 149h1v1h-1zM1007 149h1v1h-1zM1019 149h1v1h-1zM1031 149h1v1h-1zM1043 149h1v1h-1zM1055 149h1v1h-1zM1067 149h1v1h-1zM1079 149h1v1h-1zM1091 149h1v1h-1zM1103 149h1v1h-1zM1115 149h1v1h-1zM1127 149h1v1h-1zM1139 149h1v1h-1zM1151 149h1v1h-1zM598 328h1v1h-1zM610 328h1v1h-1zM622 328h1v1h-1zM634 328h1v1h-1zM646 328h1v1h-1zM658 328h1v1h-1zM670 328h1v1h-1zM682 328h1v1h-1zM694 328h1v1h-1zM706 328h1v1h-1zM718 328h1v1h-1zM730 328h1v1h-1zM742 328h1v1h-1zM754 328h1v1h-1zM766 328h1v1h-1zM778 328h1v1h-1zM790 328h1v1h-1zM802 328h1v1h-1zM814 328h1v1h-1zM826 328h1v1h-1zM838 328h1v1h-1zM851 328h1v1h-1zM863 328h1v1h-1zM875 328h1v1h-1zM887 328h1v1h-1zM899 328h1v1h-1zM911 328h1v1h-1zM923 328h1v1h-1zM935 328h1v1h-1zM947 328h1v1h-1zM959 328h1v1h-1zM971 328h1v1h-1zM983 328h1v1h-1zM995 328h1v1h-1zM1007 328h1v1h-1zM1019 328h1v1h-1zM1031 328h1v1h-1zM1043 328h1v1h-1zM1055 328h1v1h-1zM1067 328h1v1h-1zM1079 328h1v1h-1zM1091 328h1v1h-1zM1103 328h1v1h-1zM1115 328h1v1h-1zM1127 328h1v1h-1zM1139 328h1v1h-1zM1151 328h1v1h-1zM610 78h1v1h-1zM610 113h1v1h-1zM610 149h1v1h-1zM610 185h1v1h-1zM610 221h1v1h-1zM610 257h1v1h-1zM610 292h1v1h-1zM610 328h1v1h-1zM610 364h1v1h-1zM610 400h1v1h-1zM610 436h1v1h-1zM610 472h1v1h-1zM670 78h1v1h-1zM670 113h1v1h-1zM670 149h1v1h-1zM670 185h1v1h-1zM670 221h1v1h-1zM670 257h1v1h-1zM670 292h1v1h-1zM670 328h1v1h-1zM670 364h1v1h-1zM670 400h1v1h-1zM670 436h1v1h-1zM670 472h1v1h-1zM730 78h1v1h-1zM730 113h1v1h-1zM730 149h1v1h-1zM730 185h1v1h-1zM730 221h1v1h-1zM730 257h1v1h-1zM730 292h1v1h-1zM730 328h1v1h-1zM730 364h1v1h-1zM730 400h1v1h-1zM730 436h1v1h-1zM730 472h1v1h-1zM790 78h1v1h-1zM790 113h1v1h-1zM790 149h1v1h-1zM790 185h1v1h-1zM790 221h1v1h-1zM790 257h1v1h-1zM790 292h1v1h-1zM790 328h1v1h-1zM790 364h1v1h-1zM790 400h1v1h-1zM790 436h1v1h-1zM790 472h1v1h-1zM851 78h1v1h-1zM851 113h1v1h-1zM851 149h1v1h-1zM851 185h1v1h-1zM851 221h1v1h-1zM851 257h1v1h-1zM851 292h1v1h-1zM851 328h1v1h-1zM851 364h1v1h-1zM851 400h1v1h-1zM851 436h1v1h-1zM851 472h1v1h-1zM911 78h1v1h-1zM911 113h1v1h-1zM911 149h1v1h-1zM911 185h1v1h-1zM911 221h1v1h-1zM911 257h1v1h-1zM911 292h1v1h-1zM911 328h1v1h-1zM911 364h1v1h-1zM911 400h1v1h-1zM911 436h1v1h-1zM911 472h1v1h-1zM971 78h1v1h-1zM971 113h1v1h-1zM971 149h1v1h-1zM971 185h1v1h-1zM971 221h1v1h-1zM971 257h1v1h-1zM971 292h1v1h-1zM971 328h1v1h-1zM971 364h1v1h-1zM971 400h1v1h-1zM971 436h1v1h-1zM971 472h1v1h-1zM1031 78h1v1h-1zM1031 113h1v1h-1zM1031 149h1v1h-1zM1031 185h1v1h-1zM1031 221h1v1h-1zM1031 257h1v1h-1zM1031 292h1v1h-1zM1031 328h1v1h-1zM1031 364h1v1h-1zM1031 400h1v1h-1zM1031 436h1v1h-1zM1031 472h1v1h-1zM1091 78h1v1h-1zM1091 113h1v1h-1zM1091 149h1v1h-1zM1091 185h1v1h-1zM1091 221h1v1h-1zM1091 257h1v1h-1zM1091 292h1v1h-1zM1091 328h1v1h-1zM1091 364h1v1h-1zM1091 400h1v1h-1zM1091 436h1v1h-1zM1091 472h1v1h-1zM1151 78h1v1h-1zM1151 113h1v1h-1zM1151 149h1v1h-1zM1151 185h1v1h-1zM1151 221h1v1h-1zM1151 257h1v1h-1zM1151 292h1v1h-1zM1151 328h1v1h-1zM1151 364h1v1h-1zM1151 400h1v1h-1zM1151 436h1v1h-1zM1151 472h1v1h-1z"/><path shape-rendering="auto" d="M1125 61 L1157 61 Q1159 61 1159 63 L1159 93 Q1159 95 1157.5 93.5 Z" fill="#4b4b4b"/><circle shape-rendering="auto" cx="1151.5" cy="68" r="4.3" fill="none" stroke="#b8b8b8" stroke-width="1.5"/><path shape-rendering="auto" d="M1147.9 71.8 L1142.9 77" stroke="#b8b8b8" stroke-width="2.4" stroke-linecap="round"/>
<path d="M588 992 L588 665 L589 665 L589 669 L590 669 L590 664 L591 664 L591 668 L592 668 L592 672 L593 672 L593 671 L594 671 L594 685 L595 685 L595 687 L596 687 L596 678 L597 678 L597 693 L598 693 L598 708 L599 708 L599 689 L600 689 L600 687 L601 687 L601 692 L602 692 L602 692 L603 692 L603 696 L604 696 L604 703 L605 703 L605 707 L606 707 L606 693 L607 693 L607 687 L608 687 L608 692 L609 692 L609 697 L610 697 L610 703 L611 703 L611 703 L612 703 L612 705 L613 705 L613 718 L614 718 L614 712 L615 712 L615 713 L616 713 L616 714 L617 714 L617 709 L618 709 L618 719 L619 719 L619 708 L620 708 L620 719 L621 719 L621 721 L622 721 L622 717 L623 717 L623 719 L624 719 L624 715 L625 715 L625 744 L626 744 L626 734 L627 734 L627 710 L628 710 L628 727 L629 727 L629 726 L630 726 L630 732 L631 732 L631 745 L632 745 L632 732 L633 732 L633 735 L634 735 L634 741 L635 741 L635 731 L636 731 L636 730 L637 730 L637 752 L638 752 L638 756 L639 756 L639 745 L640 745 L640 736 L641 736 L641 747 L642 747 L642 735 L643 735 L643 746 L644 746 L644 748 L645 748 L645 727 L646 727 L646 751 L647 751 L647 745 L648 745 L648 772 L649 772 L649 735 L650 735 L650 749 L651 749 L651 755 L652 755 L652 739 L653 739 L653 736 L654 736 L654 751 L655 751 L655 741 L656 741 L656 763 L657 763 L657 753 L658 753 L658 760 L659 760 L659 761 L660 761 L660 772 L661 772 L661 757 L662 757 L662 774 L663 774 L663 758 L664 758 L664 765 L665 765 L665 757 L666 757 L666 763 L667 763 L667 775 L668 775 L668 747 L669 747 L669 756 L670 756 L670 766 L671 766 L671 786 L672 786 L672 753 L673 753 L673 772 L674 772 L674 770 L675 770 L675 765 L676 765 L676 757 L677 757 L677 769 L678 769 L678 758 L679 758 L679 770 L680 770 L680 785 L681 785 L681 765 L682 765 L682 788 L683 788 L683 764 L684 764 L684 771 L685 771 L685 775 L686 775 L686 768 L687 768 L687 757 L688 757 L688 781 L689 781 L689 768 L690 768 L690 761 L691 761 L691 777 L692 777 L692 784 L693 784 L693 774 L694 774 L694 768 L695 768 L695 772 L696 772 L696 772 L697 772 L697 775 L698 775 L698 788 L699 788 L699 763 L700 763 L700 803 L701 803 L701 769 L702 769 L702 761 L703 761 L703 812 L704 812 L704 767 L705 767 L705 784 L706 784 L706 774 L707 774 L707 779 L708 779 L708 768 L709 768 L709 790 L710 790 L710 799 L711 799 L711 775 L712 775 L712 779 L713 779 L713 773 L714 773 L714 765 L715 765 L715 782 L716 782 L716 771 L717 771 L717 784 L718 784 L718 775 L719 775 L719 768 L720 768 L720 772 L721 772 L721 769 L722 769 L722 769 L723 769 L723 779 L724 779 L724 785 L725 785 L725 775 L726 775 L726 771 L727 771 L727 778 L728 778 L728 787 L729 787 L729 780 L730 780 L730 778 L731 778 L731 764 L732 764 L732 785 L733 785 L733 797 L734 797 L734 768 L735 768 L735 768 L736 768 L736 789 L737 789 L737 765 L738 765 L738 787 L739 787 L739 774 L740 774 L740 768 L741 768 L741 776 L742 776 L742 786 L743 786 L743 766 L744 766 L744 781 L745 781 L745 774 L746 774 L746 781 L747 781 L747 763 L748 763 L748 784 L749 784 L749 769 L750 769 L750 783 L751 783 L751 799 L752 799 L752 778 L753 778 L753 770 L754 770 L754 800 L755 800 L755 799 L756 799 L756 767 L757 767 L757 790 L758 790 L758 792 L759 792 L759 783 L760 783 L760 798 L761 798 L761 800 L762 800 L762 803 L763 803 L763 779 L764 779 L764 792 L765 792 L765 811 L766 811 L766 804 L767 804 L767 803 L768 803 L768 767 L769 767 L769 810 L770 810 L770 792 L771 792 L771 789 L772 789 L772 787 L773 787 L773 800 L774 800 L774 794 L775 794 L775 776 L776 776 L776 804 L777 804 L777 794 L778 794 L778 811 L779 811 L779 796 L780 796 L780 788 L781 788 L781 771 L782 771 L782 785 L783 785 L783 794 L784 794 L784 795 L785 795 L785 812 L786 812 L786 799 L787 799 L787 796 L788 796 L788 804 L789 804 L789 781 L790 781 L790 790 L791 790 L791 795 L792 795 L792 778 L793 778 L793 778 L794 778 L794 773 L795 773 L795 809 L796 809 L796 802 L797 802 L797 786 L798 786 L798 802 L799 802 L799 776 L800 776 L800 779 L801 779 L801 792 L802 792 L802 799 L803 799 L803 798 L804 798 L804 793 L805 793 L805 800 L806 800 L806 806 L807 806 L807 800 L808 800 L808 804 L809 804 L809 796 L810 796 L810 789 L811 789 L811 797 L812 797 L812 808 L813 808 L813 798 L814 798 L814 815 L815 815 L815 794 L816 794 L816 802 L817 802 L817 782 L818 782 L818 801 L819 801 L819 791 L820 791 L820 792 L821 792 L821 799 L822 799 L822 805 L823 805 L823 807 L824 807 L824 808 L825 808 L825 803 L826 803 L826 808 L827 808 L827 796 L828 796 L828 795 L829 795 L829 792 L830 792 L830 799 L831 799 L831 810 L832 810 L832 790 L833 790 L833 830 L834 830 L834 807 L835 807 L835 812 L836 812 L836 811 L837 811 L837 799 L838 799 L838 810 L839 810 L839 797 L840 797 L840 801 L841 801 L841 795 L842 795 L842 798 L843 798 L843 786 L844 786 L844 798 L845 798 L845 809 L846 809 L846 810 L847 810 L847 789 L848 789 L848 801 L849 801 L849 814 L850 814 L850 820 L851 820 L851 809 L852 809 L852 814 L853 814 L853 806 L854 806 L854 799 L855 799 L855 809 L856 809 L856 815 L857 815 L857 794 L858 794 L858 795 L859 795 L859 818 L860 818 L860 817 L861 817 L861 798 L862 798 L862 809 L863 809 L863 825 L864 825 L864 815 L865 815 L865 790 L866 790 L866 817 L867 817 L867 833 L868 833 L868 800 L869 800 L869 810 L870 810 L870 803 L871 803 L871 803 L872 803 L872 796 L873 796 L873 800 L874 800 L874 812 L875 812 L875 816 L876 816 L876 817 L877 817 L877 815 L878 815 L878 805 L879 805 L879 799 L880 799 L880 800 L881 800 L881 805 L882 805 L882 815 L883 815 L883 825 L884 825 L884 814 L885 814 L885 800 L886 800 L886 796 L887 796 L887 805 L888 805 L888 804 L889 804 L889 810 L890 810 L890 792 L891 792 L891 811 L892 811 L892 857 L893 857 L893 809 L894 809 L894 813 L895 813 L895 805 L896 805 L896 814 L897 814 L897 805 L898 805 L898 816 L899 816 L899 831 L900 831 L900 830 L901 830 L901 816 L902 816 L902 808 L903 808 L903 822 L904 822 L904 810 L905 810 L905 813 L906 813 L906 814 L907 814 L907 801 L908 801 L908 808 L909 808 L909 830 L910 830 L910 811 L911 811 L911 796 L912 796 L912 818 L913 818 L913 811 L914 811 L914 823 L915 823 L915 840 L916 840 L916 862 L917 862 L917 795 L918 795 L918 811 L919 811 L919 832 L920 832 L920 813 L921 813 L921 826 L922 826 L922 828 L923 828 L923 809 L924 809 L924 801 L925 801 L925 812 L926 812 L926 818 L927 818 L927 812 L928 812 L928 812 L929 812 L929 846 L930 846 L930 840 L931 840 L931 830 L932 830 L932 803 L933 803 L933 818 L934 818 L934 805 L935 805 L935 821 L936 821 L936 817 L937 817 L937 816 L938 816 L938 805 L939 805 L939 810 L940 810 L940 824 L941 824 L941 814 L942 814 L942 819 L943 819 L943 807 L944 807 L944 809 L945 809 L945 829 L946 829 L946 820 L947 820 L947 815 L948 815 L948 817 L949 817 L949 816 L950 816 L950 808 L951 808 L951 810 L952 810 L952 816 L953 816 L953 820 L954 820 L954 826 L955 826 L955 804 L956 804 L956 835 L957 835 L957 822 L958 822 L958 815 L959 815 L959 810 L960 810 L960 816 L961 816 L961 832 L962 832 L962 817 L963 817 L963 825 L964 825 L964 824 L965 824 L965 811 L966 811 L966 803 L967 803 L967 799 L968 799 L968 803 L969 803 L969 824 L970 824 L970 837 L971 837 L971 828 L972 828 L972 823 L973 823 L973 822 L974 822 L974 817 L975 817 L975 814 L976 814 L976 821 L977 821 L977 815 L978 815 L978 837 L979 837 L979 822 L980 822 L980 812 L981 812 L981 812 L982 812 L982 825 L983 825 L983 827 L984 827 L984 807 L985 807 L985 841 L986 841 L986 809 L987 809 L987 824 L988 824 L988 822 L989 822 L989 838 L990 838 L990 824 L991 824 L991 835 L992 835 L992 821 L993 821 L993 814 L994 814 L994 828 L995 828 L995 817 L996 817 L996 818 L997 818 L997 818 L998 818 L998 815 L999 815 L999 830 L1000 830 L1000 829 L1001 829 L1001 823 L1002 823 L1002 828 L1003 828 L1003 818 L1004 818 L1004 818 L1005 818 L1005 816 L1006 816 L1006 824 L1007 824 L1007 818 L1008 818 L1008 804 L1009 804 L1009 830 L1010 830 L1010 828 L1011 828 L1011 821 L1012 821 L1012 831 L1013 831 L1013 834 L1014 834 L1014 831 L1015 831 L1015 826 L1016 826 L1016 821 L1017 821 L1017 830 L1018 830 L1018 838 L1019 838 L1019 830 L1020 830 L1020 823 L1021 823 L1021 830 L1022 830 L1022 817 L1023 817 L1023 835 L1024 835 L1024 842 L1025 842 L1025 818 L1026 818 L1026 822 L1027 822 L1027 833 L1028 833 L1028 828 L1029 828 L1029 818 L1030 818 L1030 819 L1031 819 L1031 840 L1032 840 L1032 824 L1033 824 L1033 840 L1034 840 L1034 838 L1035 838 L1035 813 L1036 813 L1036 831 L1037 831 L1037 822 L1038 822 L1038 840 L1039 840 L1039 832 L1040 832 L1040 868 L1041 868 L1041 846 L1042 846 L1042 831 L1043 831 L1043 826 L1044 826 L1044 828 L1045 828 L1045 834 L1046 834 L1046 838 L1047 838 L1047 817 L1048 817 L1048 844 L1049 844 L1049 833 L1050 833 L1050 832 L1051 832 L1051 848 L1052 848 L1052 835 L1053 835 L1053 846 L1054 846 L1054 835 L1055 835 L1055 828 L1056 828 L1056 827 L1057 827 L1057 825 L1058 825 L1058 847 L1059 847 L1059 818 L1060 818 L1060 839 L1061 839 L1061 837 L1062 837 L1062 842 L1063 842 L1063 843 L1064 843 L1064 839 L1065 839 L1065 832 L1066 832 L1066 852 L1067 852 L1067 827 L1068 827 L1068 838 L1069 838 L1069 828 L1070 828 L1070 874 L1071 874 L1071 848 L1072 848 L1072 838 L1073 838 L1073 834 L1074 834 L1074 844 L1075 844 L1075 831 L1076 831 L1076 838 L1077 838 L1077 838 L1078 838 L1078 852 L1079 852 L1079 855 L1080 855 L1080 829 L1081 829 L1081 857 L1082 857 L1082 843 L1083 843 L1083 850 L1084 850 L1084 845 L1085 845 L1085 831 L1086 831 L1086 830 L1087 830 L1087 825 L1088 825 L1088 845 L1089 845 L1089 827 L1090 827 L1090 839 L1091 839 L1091 841 L1092 841 L1092 845 L1093 845 L1093 821 L1094 821 L1094 827 L1095 827 L1095 831 L1096 831 L1096 862 L1097 862 L1097 843 L1098 843 L1098 847 L1099 847 L1099 824 L1100 824 L1100 835 L1101 835 L1101 878 L1102 878 L1102 853 L1103 853 L1103 852 L1104 852 L1104 829 L1105 829 L1105 848 L1106 848 L1106 851 L1107 851 L1107 856 L1108 856 L1108 858 L1109 858 L1109 857 L1110 857 L1110 838 L1111 838 L1111 864 L1112 864 L1112 849 L1113 849 L1113 826 L1114 826 L1114 846 L1115 846 L1115 844 L1116 844 L1116 841 L1117 841 L1117 835 L1118 835 L1118 836 L1119 836 L1119 839 L1120 839 L1120 850 L1121 850 L1121 853 L1122 853 L1122 826 L1123 826 L1123 851 L1124 851 L1124 864 L1125 864 L1125 849 L1126 849 L1126 858 L1127 858 L1127 836 L1128 836 L1128 828 L1129 828 L1129 850 L1130 850 L1130 847 L1131 847 L1131 839 L1132 839 L1132 858 L1133 858 L1133 844 L1134 844 L1134 850 L1135 850 L1135 825 L1136 825 L1136 823 L1137 823 L1137 834 L1138 834 L1138 828 L1139 828 L1139 830 L1140 830 L1140 843 L1141 843 L1141 829 L1142 829 L1142 821 L1143 821 L1143 830 L1144 830 L1144 842 L1145 842 L1145 846 L1146 846 L1146 830 L1147 830 L1147 847 L1148 847 L1148 851 L1149 851 L1149 849 L1150 849 L1150 858 L1151 858 L1151 840 L1152 840 L1152 839 L1153 839 L1153 858 L1154 858 L1154 858 L1155 858 L1155 839 L1156 839 L1156 822 L1157 822 L1157 833 L1158 833 L1158 832 L1159 832 L1159 835 L1160 835 L1160 825 L1161 825 L1161 821 L1162 821 L1162 871 L1163 871 L1163 834 L1164 834 L1164 859 L1165 859 L1165 829 L1166 829 L1166 992 Z" fill="#e556e5"/><path fill="#000" d="M588 910h1v82h-1zM589 940h1v52h-1zM601 933h1v59h-1zM620 937h1v55h-1zM613 953h1v39h-1zM616 960h1v32h-1zM641 953h1v39h-1zM635 962h1v30h-1zM638 972h1v20h-1zM656 977h1v15h-1zM592 975h1v17h-1zM594 968h1v24h-1zM596 985h1v7h-1zM598 962h1v30h-1zM603 978h1v14h-1zM605 970h1v22h-1zM607 984h1v8h-1zM609 975h1v17h-1zM623 980h1v12h-1zM628 970h1v22h-1zM631 984h1v8h-1zM645 978h1v14h-1zM649 985h1v7h-1zM662 984h1v8h-1zM668 986h1v6h-1zM700 986h1v6h-1zM761 986h1v6h-1zM590 984.935h1v8h-1zM591 984.054h1v8h-1zM593 988.796h1v8h-1zM597 975.781h1v8h-1zM599 977.027h1v8h-1zM600 985.569h1v8h-1zM602 988.151h1v8h-1zM604 984.476h1v8h-1z"/><path fill="#cfcfcf" d="M610 538h1v7h-1zM610 987h1v5h-1zM633 538h1v7h-1zM633 987h1v5h-1zM656 538h1v7h-1zM656 987h1v5h-1zM679 538h1v7h-1zM679 987h1v5h-1zM702 538h1v11h-1zM702 983h1v9h-1zM726 538h1v7h-1zM726 987h1v5h-1zM749 538h1v7h-1zM749 987h1v5h-1zM772 538h1v7h-1zM772 987h1v5h-1zM795 538h1v7h-1zM795 987h1v5h-1zM818 538h1v11h-1zM818 983h1v9h-1zM842 538h1v7h-1zM842 987h1v5h-1zM865 538h1v7h-1zM865 987h1v5h-1zM888 538h1v7h-1zM888 987h1v5h-1zM911 538h1v7h-1zM911 987h1v5h-1zM934 538h1v11h-1zM934 983h1v9h-1zM958 538h1v7h-1zM958 987h1v5h-1zM981 538h1v7h-1zM981 987h1v5h-1zM1004 538h1v7h-1zM1004 987h1v5h-1zM1027 538h1v7h-1zM1027 987h1v5h-1zM1050 538h1v11h-1zM1050 983h1v9h-1zM1074 538h1v7h-1zM1074 987h1v5h-1zM1097 538h1v7h-1zM1097 987h1v5h-1zM1120 538h1v7h-1zM1120 987h1v5h-1zM1143 538h1v7h-1zM1143 987h1v5h-1zM588 601h6v1h-6zM1160 601h6v1h-6zM588 585h6v1h-6zM1160 585h6v1h-6zM588 574h6v1h-6zM1160 574h6v1h-6zM588 565h6v1h-6zM1160 565h6v1h-6zM588 558h6v1h-6zM1160 558h6v1h-6zM588 552h6v1h-6zM1160 552h6v1h-6zM588 546h6v1h-6zM1160 546h6v1h-6zM588 542h6v1h-6zM1160 542h6v1h-6zM588 692h6v1h-6zM1160 692h6v1h-6zM588 676h6v1h-6zM1160 676h6v1h-6zM588 664h6v1h-6zM1160 664h6v1h-6zM588 656h6v1h-6zM1160 656h6v1h-6zM588 648h6v1h-6zM1160 648h6v1h-6zM588 642h6v1h-6zM1160 642h6v1h-6zM588 637h6v1h-6zM1160 637h6v1h-6zM588 632h6v1h-6zM1160 632h6v1h-6zM588 783h6v1h-6zM1160 783h6v1h-6zM588 767h6v1h-6zM1160 767h6v1h-6zM588 755h6v1h-6zM1160 755h6v1h-6zM588 746h6v1h-6zM1160 746h6v1h-6zM588 739h6v1h-6zM1160 739h6v1h-6zM588 733h6v1h-6zM1160 733h6v1h-6zM588 728h6v1h-6zM1160 728h6v1h-6zM588 723h6v1h-6zM1160 723h6v1h-6zM588 873h6v1h-6zM1160 873h6v1h-6zM588 857h6v1h-6zM1160 857h6v1h-6zM588 846h6v1h-6zM1160 846h6v1h-6zM588 837h6v1h-6zM1160 837h6v1h-6zM588 830h6v1h-6zM1160 830h6v1h-6zM588 824h6v1h-6zM1160 824h6v1h-6zM588 819h6v1h-6zM1160 819h6v1h-6zM588 814h6v1h-6zM1160 814h6v1h-6zM588 964h6v1h-6zM1160 964h6v1h-6zM588 948h6v1h-6zM1160 948h6v1h-6zM588 937h6v1h-6zM1160 937h6v1h-6zM588 928h6v1h-6zM1160 928h6v1h-6zM588 921h6v1h-6zM1160 921h6v1h-6zM588 915h6v1h-6zM1160 915h6v1h-6zM588 909h6v1h-6zM1160 909h6v1h-6zM588 905h6v1h-6zM1160 905h6v1h-6zM588 628h10v1h-10zM1156 628h10v1h-10zM588 719h10v1h-10zM1156 719h10v1h-10zM588 810h10v1h-10zM1156 810h10v1h-10zM588 901h10v1h-10zM1156 901h10v1h-10z"/><path fill="#a0a0a0" d="M610 628h1v1h-1zM633 628h1v1h-1zM656 628h1v1h-1zM679 628h1v1h-1zM702 628h1v1h-1zM726 628h1v1h-1zM749 628h1v1h-1zM772 628h1v1h-1zM795 628h1v1h-1zM818 628h1v1h-1zM842 628h1v1h-1zM865 628h1v1h-1zM888 628h1v1h-1zM911 628h1v1h-1zM934 628h1v1h-1zM958 628h1v1h-1zM981 628h1v1h-1zM1004 628h1v1h-1zM1027 628h1v1h-1zM1050 628h1v1h-1zM1074 628h1v1h-1zM1097 628h1v1h-1zM1120 628h1v1h-1zM1143 628h1v1h-1zM610 719h1v1h-1zM633 719h1v1h-1zM656 719h1v1h-1zM679 719h1v1h-1zM702 719h1v1h-1zM726 719h1v1h-1zM749 719h1v1h-1zM772 719h1v1h-1zM795 719h1v1h-1zM818 719h1v1h-1zM842 719h1v1h-1zM865 719h1v1h-1zM888 719h1v1h-1zM911 719h1v1h-1zM934 719h1v1h-1zM958 719h1v1h-1zM981 719h1v1h-1zM1004 719h1v1h-1zM1027 719h1v1h-1zM1050 719h1v1h-1zM1074 719h1v1h-1zM1097 719h1v1h-1zM1120 719h1v1h-1zM1143 719h1v1h-1zM610 810h1v1h-1zM633 810h1v1h-1zM656 810h1v1h-1zM679 810h1v1h-1zM702 810h1v1h-1zM726 810h1v1h-1zM749 810h1v1h-1zM772 810h1v1h-1zM795 810h1v1h-1zM818 810h1v1h-1zM842 810h1v1h-1zM865 810h1v1h-1zM888 810h1v1h-1zM911 810h1v1h-1zM934 810h1v1h-1zM958 810h1v1h-1zM981 810h1v1h-1zM1004 810h1v1h-1zM1027 810h1v1h-1zM1050 810h1v1h-1zM1074 810h1v1h-1zM1097 810h1v1h-1zM1120 810h1v1h-1zM1143 810h1v1h-1zM610 901h1v1h-1zM633 901h1v1h-1zM656 901h1v1h-1zM679 901h1v1h-1zM702 901h1v1h-1zM726 901h1v1h-1zM749 901h1v1h-1zM772 901h1v1h-1zM795 901h1v1h-1zM818 901h1v1h-1zM842 901h1v1h-1zM865 901h1v1h-1zM888 901h1v1h-1zM911 901h1v1h-1zM934 901h1v1h-1zM958 901h1v1h-1zM981 901h1v1h-1zM1004 901h1v1h-1zM1027 901h1v1h-1zM1050 901h1v1h-1zM1074 901h1v1h-1zM1097 901h1v1h-1zM1120 901h1v1h-1zM1143 901h1v1h-1zM702 601h1v1h-1zM702 585h1v1h-1zM702 574h1v1h-1zM702 565h1v1h-1zM702 558h1v1h-1zM702 552h1v1h-1zM702 546h1v1h-1zM702 542h1v1h-1zM702 692h1v1h-1zM702 676h1v1h-1zM702 664h1v1h-1zM702 656h1v1h-1zM702 648h1v1h-1zM702 642h1v1h-1zM702 637h1v1h-1zM702 632h1v1h-1zM702 783h1v1h-1zM702 767h1v1h-1zM702 755h1v1h-1zM702 746h1v1h-1zM702 739h1v1h-1zM702 733h1v1h-1zM702 728h1v1h-1zM702 723h1v1h-1zM702 873h1v1h-1zM702 857h1v1h-1zM702 846h1v1h-1zM702 837h1v1h-1zM702 830h1v1h-1zM702 824h1v1h-1zM702 819h1v1h-1zM702 814h1v1h-1zM702 964h1v1h-1zM702 948h1v1h-1zM702 937h1v1h-1zM702 928h1v1h-1zM702 921h1v1h-1zM702 915h1v1h-1zM702 909h1v1h-1zM702 905h1v1h-1zM818 601h1v1h-1zM818 585h1v1h-1zM818 574h1v1h-1zM818 565h1v1h-1zM818 558h1v1h-1zM818 552h1v1h-1zM818 546h1v1h-1zM818 542h1v1h-1zM818 692h1v1h-1zM818 676h1v1h-1zM818 664h1v1h-1zM818 656h1v1h-1zM818 648h1v1h-1zM818 642h1v1h-1zM818 637h1v1h-1zM818 632h1v1h-1zM818 783h1v1h-1zM818 767h1v1h-1zM818 755h1v1h-1zM818 746h1v1h-1zM818 739h1v1h-1zM818 733h1v1h-1zM818 728h1v1h-1zM818 723h1v1h-1zM818 873h1v1h-1zM818 857h1v1h-1zM818 846h1v1h-1zM818 837h1v1h-1zM818 830h1v1h-1zM818 824h1v1h-1zM818 819h1v1h-1zM818 814h1v1h-1zM818 964h1v1h-1zM818 948h1v1h-1zM818 937h1v1h-1zM818 928h1v1h-1zM818 921h1v1h-1zM818 915h1v1h-1zM818 909h1v1h-1zM818 905h1v1h-1zM934 601h1v1h-1zM934 585h1v1h-1zM934 574h1v1h-1zM934 565h1v1h-1zM934 558h1v1h-1zM934 552h1v1h-1zM934 546h1v1h-1zM934 542h1v1h-1zM934 692h1v1h-1zM934 676h1v1h-1zM934 664h1v1h-1zM934 656h1v1h-1zM934 648h1v1h-1zM934 642h1v1h-1zM934 637h1v1h-1zM934 632h1v1h-1zM934 783h1v1h-1zM934 767h1v1h-1zM934 755h1v1h-1zM934 746h1v1h-1zM934 739h1v1h-1zM934 733h1v1h-1zM934 728h1v1h-1zM934 723h1v1h-1zM934 873h1v1h-1zM934 857h1v1h-1zM934 846h1v1h-1zM934 837h1v1h-1zM934 830h1v1h-1zM934 824h1v1h-1zM934 819h1v1h-1zM934 814h1v1h-1zM934 964h1v1h-1zM934 948h1v1h-1zM934 937h1v1h-1zM934 928h1v1h-1zM934 921h1v1h-1zM934 915h1v1h-1zM934 909h1v1h-1zM934 905h1v1h-1zM1050 601h1v1h-1zM1050 585h1v1h-1zM1050 574h1v1h-1zM1050 565h1v1h-1zM1050 558h1v1h-1zM1050 552h1v1h-1zM1050 546h1v1h-1zM1050 542h1v1h-1zM1050 692h1v1h-1zM1050 676h1v1h-1zM1050 664h1v1h-1zM1050 656h1v1h-1zM1050 648h1v1h-1zM1050 642h1v1h-1zM1050 637h1v1h-1zM1050 632h1v1h-1zM1050 783h1v1h-1zM1050 767h1v1h-1zM1050 755h1v1h-1zM1050 746h1v1h-1zM1050 739h1v1h-1zM1050 733h1v1h-1zM1050 728h1v1h-1zM1050 723h1v1h-1zM1050 873h1v1h-1zM1050 857h1v1h-1zM1050 846h1v1h-1zM1050 837h1v1h-1zM1050 830h1v1h-1zM1050 824h1v1h-1zM1050 819h1v1h-1zM1050 814h1v1h-1zM1050 964h1v1h-1zM1050 948h1v1h-1zM1050 937h1v1h-1zM1050 928h1v1h-1zM1050 921h1v1h-1zM1050 915h1v1h-1zM1050 909h1v1h-1zM1050 905h1v1h-1z"/><path shape-rendering="auto" d="M1125 545 L1157 545 Q1159 545 1159 547 L1159 577 Q1159 579 1157.5 577.5 Z" fill="#4b4b4b"/><circle shape-rendering="auto" cx="1151.5" cy="552" r="4.3" fill="none" stroke="#b8b8b8" stroke-width="1.5"/><path shape-rendering="auto" d="M1147.9 555.8 L1142.9 561" stroke="#b8b8b8" stroke-width="2.4" stroke-linecap="round"/>
<defs><linearGradient id="bandG" x1="0" y1="0" x2="0" y2="1"><stop offset="0" stop-color="#0000ff"/><stop offset="0.14" stop-color="#0010ff"/><stop offset="0.24" stop-color="#10e880"/><stop offset="0.32" stop-color="#50ff00"/><stop offset="0.56" stop-color="#40ff10"/><stop offset="0.68" stop-color="#00d8e0"/><stop offset="0.8" stop-color="#0040ff"/><stop offset="1" stop-color="#0000ff"/></linearGradient><linearGradient id="bandY" x1="0" y1="0" x2="0" y2="1"><stop offset="0" stop-color="#0000ff"/><stop offset="0.10" stop-color="#0000ff"/><stop offset="0.14" stop-color="#40e020"/><stop offset="0.2" stop-color="#d0f000"/><stop offset="0.25" stop-color="#ffd800"/><stop offset="0.62" stop-color="#ffd800"/><stop offset="0.7" stop-color="#e0f000"/><stop offset="0.85" stop-color="#a0f000"/><stop offset="0.88" stop-color="#0000ff"/><stop offset="1" stop-color="#0000ff"/></linearGradient><linearGradient id="bandR" x1="0" y1="0" x2="0" y2="1"><stop offset="0" stop-color="#0000ff"/><stop offset="0.14" stop-color="#0000ff"/><stop offset="0.18" stop-color="#ffe000"/><stop offset="0.28" stop-color="#ffb000"/><stop offset="0.33" stop-color="#ff4800"/><stop offset="0.62" stop-color="#ff4800"/><stop offset="0.67" stop-color="#e0e000"/><stop offset="0.8" stop-color="#80e000"/><stop offset="0.86" stop-color="#0000ff"/><stop offset="1" stop-color="#0000ff"/></linearGradient><linearGradient id="edgeV" x1="0" y1="0" x2="1" y2="0"><stop offset="0" stop-color="#0000ff" stop-opacity="0"/><stop offset="0.04" stop-color="#0000ff"/><stop offset="0.40" stop-color="#0000ff"/><stop offset="0.42" stop-color="#00d0a0"/><stop offset="0.46" stop-color="#f0e000"/><stop offset="0.64" stop-color="#f0e000"/><stop offset="0.67" stop-color="#00d0a0"/><stop offset="0.68" stop-color="#0000ff"/><stop offset="0.96" stop-color="#0000ff"/><stop offset="1" stop-color="#0000ff" stop-opacity="0"/></linearGradient></defs><rect x="1245" y="118" width="131" height="340" fill="url(#edgeV)"/><rect x="1533" y="118" width="131" height="340" fill="url(#edgeV)"/><rect x="1172" y="107" width="579" height="9.8" fill="url(#bandG)"/><rect x="1172" y="127.2" width="579" height="17" fill="url(#bandY)"/><path fill="#000" d="M1235 141.8h515v3.4h-515z"/><rect x="1172" y="456" width="579" height="12.3" fill="url(#bandR)"/><path fill="#0000ff" d="M1178 144h5v1.5h-5zM1186 144h3v1.5h-3zM1203 144h6v1.5h-6zM1212 144h2v1.5h-2zM1195 144h3v1.5h-3zM1174 116.5h3v1.5h-3z"/><path fill="#c4c4c4" d="M1186 54h1v7h-1zM1186 502h1v5h-1zM1201 54h1v7h-1zM1201 502h1v5h-1zM1215 54h1v7h-1zM1215 502h1v5h-1zM1230 54h1v7h-1zM1230 502h1v5h-1zM1244 54h1v11h-1zM1244 498h1v9h-1zM1259 54h1v7h-1zM1259 502h1v5h-1zM1273 54h1v7h-1zM1273 502h1v5h-1zM1288 54h1v7h-1zM1288 502h1v5h-1zM1302 54h1v7h-1zM1302 502h1v5h-1zM1317 54h1v11h-1zM1317 498h1v9h-1zM1331 54h1v7h-1zM1331 502h1v5h-1zM1346 54h1v7h-1zM1346 502h1v5h-1zM1360 54h1v7h-1zM1360 502h1v5h-1zM1375 54h1v7h-1zM1375 502h1v5h-1zM1389 54h1v11h-1zM1389 498h1v9h-1zM1404 54h1v7h-1zM1404 502h1v5h-1zM1418 54h1v7h-1zM1418 502h1v5h-1zM1433 54h1v7h-1zM1433 502h1v5h-1zM1447 54h1v7h-1zM1447 502h1v5h-1zM1462 54h1v11h-1zM1462 498h1v9h-1zM1477 54h1v7h-1zM1477 502h1v5h-1zM1491 54h1v7h-1zM1491 502h1v5h-1zM1506 54h1v7h-1zM1506 502h1v5h-1zM1520 54h1v7h-1zM1520 502h1v5h-1zM1535 54h1v11h-1zM1535 498h1v9h-1zM1549 54h1v7h-1zM1549 502h1v5h-1zM1564 54h1v7h-1zM1564 502h1v5h-1zM1578 54h1v7h-1zM1578 502h1v5h-1zM1593 54h1v7h-1zM1593 502h1v5h-1zM1607 54h1v11h-1zM1607 498h1v9h-1zM1622 54h1v7h-1zM1622 502h1v5h-1zM1636 54h1v7h-1zM1636 502h1v5h-1zM1651 54h1v7h-1zM1651 502h1v5h-1zM1665 54h1v7h-1zM1665 502h1v5h-1zM1680 54h1v11h-1zM1680 498h1v9h-1zM1694 54h1v7h-1zM1694 502h1v5h-1zM1709 54h1v7h-1zM1709 502h1v5h-1zM1723 54h1v7h-1zM1723 502h1v5h-1zM1738 54h1v7h-1zM1738 502h1v5h-1zM1172 75h11v1h-11zM1740 75h11v1h-11zM1172 93h7v1h-7zM1744 93h7v1h-7zM1172 111h7v1h-7zM1744 111h7v1h-7zM1172 128h7v1h-7zM1744 128h7v1h-7zM1172 146h7v1h-7zM1744 146h7v1h-7zM1172 164h11v1h-11zM1740 164h11v1h-11zM1172 182h7v1h-7zM1744 182h7v1h-7zM1172 200h7v1h-7zM1744 200h7v1h-7zM1172 217h7v1h-7zM1744 217h7v1h-7zM1172 235h7v1h-7zM1744 235h7v1h-7zM1172 253h11v1h-11zM1740 253h11v1h-11zM1172 271h7v1h-7zM1744 271h7v1h-7zM1172 289h7v1h-7zM1744 289h7v1h-7zM1172 306h7v1h-7zM1744 306h7v1h-7zM1172 324h7v1h-7zM1744 324h7v1h-7zM1172 342h11v1h-11zM1740 342h11v1h-11zM1172 360h7v1h-7zM1744 360h7v1h-7zM1172 378h7v1h-7zM1744 378h7v1h-7zM1172 395h7v1h-7zM1744 395h7v1h-7zM1172 413h7v1h-7zM1744 413h7v1h-7zM1172 431h11v1h-11zM1740 431h11v1h-11zM1172 449h7v1h-7zM1744 449h7v1h-7zM1172 466h7v1h-7zM1744 466h7v1h-7zM1172 484h7v1h-7zM1744 484h7v1h-7zM1172 502h7v1h-7zM1744 502h7v1h-7z"/><path fill="#8c8c8c" d="M1186 75h1v1h-1zM1201 75h1v1h-1zM1215 75h1v1h-1zM1230 75h1v1h-1zM1244 75h1v1h-1zM1259 75h1v1h-1zM1273 75h1v1h-1zM1288 75h1v1h-1zM1302 75h1v1h-1zM1317 75h1v1h-1zM1331 75h1v1h-1zM1346 75h1v1h-1zM1360 75h1v1h-1zM1375 75h1v1h-1zM1389 75h1v1h-1zM1404 75h1v1h-1zM1418 75h1v1h-1zM1433 75h1v1h-1zM1447 75h1v1h-1zM1462 75h1v1h-1zM1477 75h1v1h-1zM1491 75h1v1h-1zM1506 75h1v1h-1zM1520 75h1v1h-1zM1535 75h1v1h-1zM1549 75h1v1h-1zM1564 75h1v1h-1zM1578 75h1v1h-1zM1593 75h1v1h-1zM1607 75h1v1h-1zM1622 75h1v1h-1zM1636 75h1v1h-1zM1651 75h1v1h-1zM1665 75h1v1h-1zM1680 75h1v1h-1zM1694 75h1v1h-1zM1709 75h1v1h-1zM1723 75h1v1h-1zM1738 75h1v1h-1zM1186 164h1v1h-1zM1201 164h1v1h-1zM1215 164h1v1h-1zM1230 164h1v1h-1zM1244 164h1v1h-1zM1259 164h1v1h-1zM1273 164h1v1h-1zM1288 164h1v1h-1zM1302 164h1v1h-1zM1317 164h1v1h-1zM1331 164h1v1h-1zM1346 164h1v1h-1zM1360 164h1v1h-1zM1375 164h1v1h-1zM1389 164h1v1h-1zM1404 164h1v1h-1zM1418 164h1v1h-1zM1433 164h1v1h-1zM1447 164h1v1h-1zM1462 164h1v1h-1zM1477 164h1v1h-1zM1491 164h1v1h-1zM1506 164h1v1h-1zM1520 164h1v1h-1zM1535 164h1v1h-1zM1549 164h1v1h-1zM1564 164h1v1h-1zM1578 164h1v1h-1zM1593 164h1v1h-1zM1607 164h1v1h-1zM1622 164h1v1h-1zM1636 164h1v1h-1zM1651 164h1v1h-1zM1665 164h1v1h-1zM1680 164h1v1h-1zM1694 164h1v1h-1zM1709 164h1v1h-1zM1723 164h1v1h-1zM1738 164h1v1h-1zM1186 253h1v1h-1zM1201 253h1v1h-1zM1215 253h1v1h-1zM1230 253h1v1h-1zM1244 253h1v1h-1zM1259 253h1v1h-1zM1273 253h1v1h-1zM1288 253h1v1h-1zM1302 253h1v1h-1zM1317 253h1v1h-1zM1331 253h1v1h-1zM1346 253h1v1h-1zM1360 253h1v1h-1zM1375 253h1v1h-1zM1389 253h1v1h-1zM1404 253h1v1h-1zM1418 253h1v1h-1zM1433 253h1v1h-1zM1447 253h1v1h-1zM1462 253h1v1h-1zM1477 253h1v1h-1zM1491 253h1v1h-1zM1506 253h1v1h-1zM1520 253h1v1h-1zM1535 253h1v1h-1zM1549 253h1v1h-1zM1564 253h1v1h-1zM1578 253h1v1h-1zM1593 253h1v1h-1zM1607 253h1v1h-1zM1622 253h1v1h-1zM1636 253h1v1h-1zM1651 253h1v1h-1zM1665 253h1v1h-1zM1680 253h1v1h-1zM1694 253h1v1h-1zM1709 253h1v1h-1zM1723 253h1v1h-1zM1738 253h1v1h-1zM1186 342h1v1h-1zM1201 342h1v1h-1zM1215 342h1v1h-1zM1230 342h1v1h-1zM1244 342h1v1h-1zM1259 342h1v1h-1zM1273 342h1v1h-1zM1288 342h1v1h-1zM1302 342h1v1h-1zM1317 342h1v1h-1zM1331 342h1v1h-1zM1346 342h1v1h-1zM1360 342h1v1h-1zM1375 342h1v1h-1zM1389 342h1v1h-1zM1404 342h1v1h-1zM1418 342h1v1h-1zM1433 342h1v1h-1zM1447 342h1v1h-1zM1462 342h1v1h-1zM1477 342h1v1h-1zM1491 342h1v1h-1zM1506 342h1v1h-1zM1520 342h1v1h-1zM1535 342h1v1h-1zM1549 342h1v1h-1zM1564 342h1v1h-1zM1578 342h1v1h-1zM1593 342h1v1h-1zM1607 342h1v1h-1zM1622 342h1v1h-1zM1636 342h1v1h-1zM1651 342h1v1h-1zM1665 342h1v1h-1zM1680 342h1v1h-1zM1694 342h1v1h-1zM1709 342h1v1h-1zM1723 342h1v1h-1zM1738 342h1v1h-1zM1186 431h1v1h-1zM1201 431h1v1h-1zM1215 431h1v1h-1zM1230 431h1v1h-1zM1244 431h1v1h-1zM1259 431h1v1h-1zM1273 431h1v1h-1zM1288 431h1v1h-1zM1302 431h1v1h-1zM1317 431h1v1h-1zM1331 431h1v1h-1zM1346 431h1v1h-1zM1360 431h1v1h-1zM1375 431h1v1h-1zM1389 431h1v1h-1zM1404 431h1v1h-1zM1418 431h1v1h-1zM1433 431h1v1h-1zM1447 431h1v1h-1zM1462 431h1v1h-1zM1477 431h1v1h-1zM1491 431h1v1h-1zM1506 431h1v1h-1zM1520 431h1v1h-1zM1535 431h1v1h-1zM1549 431h1v1h-1zM1564 431h1v1h-1zM1578 431h1v1h-1zM1593 431h1v1h-1zM1607 431h1v1h-1zM1622 431h1v1h-1zM1636 431h1v1h-1zM1651 431h1v1h-1zM1665 431h1v1h-1zM1680 431h1v1h-1zM1694 431h1v1h-1zM1709 431h1v1h-1zM1723 431h1v1h-1zM1738 431h1v1h-1zM1244 75h1v1h-1zM1244 93h1v1h-1zM1244 111h1v1h-1zM1244 128h1v1h-1zM1244 146h1v1h-1zM1244 164h1v1h-1zM1244 182h1v1h-1zM1244 200h1v1h-1zM1244 217h1v1h-1zM1244 235h1v1h-1zM1244 253h1v1h-1zM1244 271h1v1h-1zM1244 289h1v1h-1zM1244 306h1v1h-1zM1244 324h1v1h-1zM1244 342h1v1h-1zM1244 360h1v1h-1zM1244 378h1v1h-1zM1244 395h1v1h-1zM1244 413h1v1h-1zM1244 431h1v1h-1zM1244 449h1v1h-1zM1244 466h1v1h-1zM1244 484h1v1h-1zM1244 502h1v1h-1zM1317 75h1v1h-1zM1317 93h1v1h-1zM1317 111h1v1h-1zM1317 128h1v1h-1zM1317 146h1v1h-1zM1317 164h1v1h-1zM1317 182h1v1h-1zM1317 200h1v1h-1zM1317 217h1v1h-1zM1317 235h1v1h-1zM1317 253h1v1h-1zM1317 271h1v1h-1zM1317 289h1v1h-1zM1317 306h1v1h-1zM1317 324h1v1h-1zM1317 342h1v1h-1zM1317 360h1v1h-1zM1317 378h1v1h-1zM1317 395h1v1h-1zM1317 413h1v1h-1zM1317 431h1v1h-1zM1317 449h1v1h-1zM1317 466h1v1h-1zM1317 484h1v1h-1zM1317 502h1v1h-1zM1389 75h1v1h-1zM1389 93h1v1h-1zM1389 111h1v1h-1zM1389 128h1v1h-1zM1389 146h1v1h-1zM1389 164h1v1h-1zM1389 182h1v1h-1zM1389 200h1v1h-1zM1389 217h1v1h-1zM1389 235h1v1h-1zM1389 253h1v1h-1zM1389 271h1v1h-1zM1389 289h1v1h-1zM1389 306h1v1h-1zM1389 324h1v1h-1zM1389 342h1v1h-1zM1389 360h1v1h-1zM1389 378h1v1h-1zM1389 395h1v1h-1zM1389 413h1v1h-1zM1389 431h1v1h-1zM1389 449h1v1h-1zM1389 466h1v1h-1zM1389 484h1v1h-1zM1389 502h1v1h-1zM1462 75h1v1h-1zM1462 93h1v1h-1zM1462 111h1v1h-1zM1462 128h1v1h-1zM1462 146h1v1h-1zM1462 164h1v1h-1zM1462 182h1v1h-1zM1462 200h1v1h-1zM1462 217h1v1h-1zM1462 235h1v1h-1zM1462 253h1v1h-1zM1462 271h1v1h-1zM1462 289h1v1h-1zM1462 306h1v1h-1zM1462 324h1v1h-1zM1462 342h1v1h-1zM1462 360h1v1h-1zM1462 378h1v1h-1zM1462 395h1v1h-1zM1462 413h1v1h-1zM1462 431h1v1h-1zM1462 449h1v1h-1zM1462 466h1v1h-1zM1462 484h1v1h-1zM1462 502h1v1h-1zM1535 75h1v1h-1zM1535 93h1v1h-1zM1535 111h1v1h-1zM1535 128h1v1h-1zM1535 146h1v1h-1zM1535 164h1v1h-1zM1535 182h1v1h-1zM1535 200h1v1h-1zM1535 217h1v1h-1zM1535 235h1v1h-1zM1535 253h1v1h-1zM1535 271h1v1h-1zM1535 289h1v1h-1zM1535 306h1v1h-1zM1535 324h1v1h-1zM1535 342h1v1h-1zM1535 360h1v1h-1zM1535 378h1v1h-1zM1535 395h1v1h-1zM1535 413h1v1h-1zM1535 431h1v1h-1zM1535 449h1v1h-1zM1535 466h1v1h-1zM1535 484h1v1h-1zM1535 502h1v1h-1zM1607 75h1v1h-1zM1607 93h1v1h-1zM1607 111h1v1h-1zM1607 128h1v1h-1zM1607 146h1v1h-1zM1607 164h1v1h-1zM1607 182h1v1h-1zM1607 200h1v1h-1zM1607 217h1v1h-1zM1607 235h1v1h-1zM1607 253h1v1h-1zM1607 271h1v1h-1zM1607 289h1v1h-1zM1607 306h1v1h-1zM1607 324h1v1h-1zM1607 342h1v1h-1zM1607 360h1v1h-1zM1607 378h1v1h-1zM1607 395h1v1h-1zM1607 413h1v1h-1zM1607 431h1v1h-1zM1607 449h1v1h-1zM1607 466h1v1h-1zM1607 484h1v1h-1zM1607 502h1v1h-1zM1680 75h1v1h-1zM1680 93h1v1h-1zM1680 111h1v1h-1zM1680 128h1v1h-1zM1680 146h1v1h-1zM1680 164h1v1h-1zM1680 182h1v1h-1zM1680 200h1v1h-1zM1680 217h1v1h-1zM1680 235h1v1h-1zM1680 253h1v1h-1zM1680 271h1v1h-1zM1680 289h1v1h-1zM1680 306h1v1h-1zM1680 324h1v1h-1zM1680 342h1v1h-1zM1680 360h1v1h-1zM1680 378h1v1h-1zM1680 395h1v1h-1zM1680 413h1v1h-1zM1680 431h1v1h-1zM1680 449h1v1h-1zM1680 466h1v1h-1zM1680 484h1v1h-1zM1680 502h1v1h-1z"/><ellipse shape-rendering="auto" cx="1332.5" cy="94.5" rx="13" ry="4" fill="#0000ff"/><ellipse shape-rendering="auto" cx="1335.5" cy="95" rx="4" ry="2.2" fill="#00d0d0"/><path fill="#0000ff" d="M1272.5 95h8v1h-8zM1308.5 95h6v1h-6zM1360.5 95h8v1h-8z"/><ellipse shape-rendering="auto" cx="1623" cy="94.5" rx="13" ry="4" fill="#0000ff"/><ellipse shape-rendering="auto" cx="1626" cy="95" rx="4" ry="2.2" fill="#00d0d0"/><path fill="#0000ff" d="M1563 95h8v1h-8zM1599 95h6v1h-6zM1651 95h8v1h-8z"/><path shape-rendering="auto" d="M1711 61 L1743 61 Q1745 61 1745 63 L1745 93 Q1745 95 1743.5 93.5 Z" fill="#4b4b4b"/><circle shape-rendering="auto" cx="1737.5" cy="68" r="4.3" fill="none" stroke="#b8b8b8" stroke-width="1.5"/><path shape-rendering="auto" d="M1733.9 71.8 L1728.9 77" stroke="#b8b8b8" stroke-width="2.4" stroke-linecap="round"/>
<defs><pattern id="bp" patternUnits="userSpaceOnUse" x="1183" y="0" width="55" height="10"><path fill="#a49c00" d="M0 0h1v10h-1z"/><path fill="#9a9200" d="M1 0h3v10h-3z"/><path fill="#a49c00" d="M4 0h2v10h-2z"/><path fill="#a29a00" d="M6 0h2v10h-2z"/><path fill="#8e8600" d="M8 0h3v10h-3zM11 0h3v10h-3z"/><path fill="#a49c00" d="M14 0h2v10h-2z"/><path fill="#9a9200" d="M16 0h3v10h-3z"/><path fill="#a29a00" d="M19 0h1v10h-1z"/><path fill="#a49c00" d="M20 0h2v10h-2z"/><path fill="#a8a000" d="M22 0h3v10h-3z"/><path fill="#a29a00" d="M25 0h2v10h-2z"/><path fill="#9a9200" d="M27 0h1v10h-1z"/><path fill="#969000" d="M28 0h1v10h-1z"/><path fill="#a8a000" d="M29 0h3v10h-3z"/><path fill="#a29a00" d="M32 0h1v10h-1z"/><path fill="#9a9200" d="M33 0h1v10h-1z"/><path fill="#8e8600" d="M34 0h3v10h-3z"/><path fill="#969000" d="M37 0h2v10h-2zM39 0h1v10h-1z"/><path fill="#a8a000" d="M40 0h2v10h-2z"/><path fill="#a29a00" d="M42 0h3v10h-3zM45 0h2v10h-2z"/><path fill="#a8a000" d="M47 0h2v10h-2zM49 0h3v10h-3z"/><path fill="#a49c00" d="M52 0h1v10h-1z"/><path fill="#8e8600" d="M53 0h1v10h-1z"/><path fill="#a8a000" d="M54 0h1v10h-1z"/></pattern></defs><rect x="1183" y="606" width="27" height="352" fill="url(#bp)"/><rect x="1238" y="600" width="27" height="358" fill="url(#bp)"/><rect x="1293" y="600" width="27" height="358" fill="url(#bp)"/><rect x="1348" y="600" width="27" height="358" fill="url(#bp)"/><rect x="1404" y="600" width="26" height="358" fill="url(#bp)"/><rect x="1460" y="600" width="26" height="358" fill="url(#bp)"/><rect x="1514" y="600" width="27" height="358" fill="url(#bp)"/><rect x="1573" y="600" width="27" height="358" fill="url(#bp)"/><rect x="1628" y="600" width="27" height="358" fill="url(#bp)"/><rect x="1683" y="600" width="27" height="358" fill="url(#bp)"/><rect x="1738" y="600" width="13" height="358" fill="url(#bp)"/><path fill="#7c7400" d="M1183 567.8h2.5v38.2h-2.5z"/><path fill="#8a8200" d="M1185.5 567.2h2.6v38.8h-2.6z"/><path fill="#7c7400" d="M1189 566.6h1.6v39.4h-1.6z"/><path fill="#8a8200" d="M1190.6 566.2h1.6v39.8h-1.6z"/><path fill="#807800" d="M1193 565.2h2.2v40.8h-2.2z"/><path fill="#8a8200" d="M1195.2 564.6h2.1v41.4h-2.1zM1198 564.9h1.2v41.1h-1.2z"/><path shape-rendering="auto" d="M1183.6 582.5 l0.8 4 l1.2 1.2 l1 -3.5 M1189.6 585.6 l1.3 -2.6 l1 0.8 M1193.4 584 l1.8 -1.6 l1.6 0.2 M1198.2 582.6 l0.8 -0.6" fill="none" stroke="#f2e420" stroke-width="1.3"/><path shape-rendering="auto" d="M1183 607.2 L1184.5 606 L1186 605.8 L1189 604.6 L1192 604.2 L1195 603.2 L1198 603.3 L1200 602.2 L1203 602 L1205 601.2 L1207.5 602.2 L1209.8 601.8 L1209.8 611.4 L1205 611.8 L1200 612.6 L1196 612.4 L1193 613.4 L1190 613.6 L1188 615.2 L1186 615.6 L1185 617.2 L1183 617.6 Z" fill="#ffee20"/><path fill="#a0a0a0" d="M1183 969h1v1h-1zM1195 969h1v1h-1zM1206 969h1v1h-1zM1218 969h1v1h-1zM1229 969h1v1h-1zM1241 969h1v1h-1zM1252 969h1v1h-1zM1264 969h1v1h-1zM1276 969h1v1h-1zM1287 969h1v1h-1zM1299 969h1v1h-1zM1310 969h1v1h-1zM1322 969h1v1h-1zM1334 969h1v1h-1zM1345 969h1v1h-1zM1357 969h1v1h-1zM1368 969h1v1h-1zM1380 969h1v1h-1zM1392 969h1v1h-1zM1403 969h1v1h-1zM1415 969h1v1h-1zM1426 969h1v1h-1zM1438 969h1v1h-1zM1450 969h1v1h-1zM1461 969h1v1h-1zM1473 969h1v1h-1zM1484 969h1v1h-1zM1496 969h1v1h-1zM1507 969h1v1h-1zM1519 969h1v1h-1zM1531 969h1v1h-1zM1542 969h1v1h-1zM1554 969h1v1h-1zM1565 969h1v1h-1zM1577 969h1v1h-1zM1589 969h1v1h-1zM1600 969h1v1h-1zM1612 969h1v1h-1zM1623 969h1v1h-1zM1635 969h1v1h-1zM1647 969h1v1h-1zM1658 969h1v1h-1zM1670 969h1v1h-1zM1681 969h1v1h-1zM1693 969h1v1h-1zM1704 969h1v1h-1zM1716 969h1v1h-1zM1728 969h1v1h-1zM1739 969h1v1h-1zM1183 923h1v1h-1zM1195 923h1v1h-1zM1206 923h1v1h-1zM1218 923h1v1h-1zM1229 923h1v1h-1zM1241 923h1v1h-1zM1252 923h1v1h-1zM1264 923h1v1h-1zM1276 923h1v1h-1zM1287 923h1v1h-1zM1299 923h1v1h-1zM1310 923h1v1h-1zM1322 923h1v1h-1zM1334 923h1v1h-1zM1345 923h1v1h-1zM1357 923h1v1h-1zM1368 923h1v1h-1zM1380 923h1v1h-1zM1392 923h1v1h-1zM1403 923h1v1h-1zM1415 923h1v1h-1zM1426 923h1v1h-1zM1438 923h1v1h-1zM1450 923h1v1h-1zM1461 923h1v1h-1zM1473 923h1v1h-1zM1484 923h1v1h-1zM1496 923h1v1h-1zM1507 923h1v1h-1zM1519 923h1v1h-1zM1531 923h1v1h-1zM1542 923h1v1h-1zM1554 923h1v1h-1zM1565 923h1v1h-1zM1577 923h1v1h-1zM1589 923h1v1h-1zM1600 923h1v1h-1zM1612 923h1v1h-1zM1623 923h1v1h-1zM1635 923h1v1h-1zM1647 923h1v1h-1zM1658 923h1v1h-1zM1670 923h1v1h-1zM1681 923h1v1h-1zM1693 923h1v1h-1zM1704 923h1v1h-1zM1716 923h1v1h-1zM1728 923h1v1h-1zM1739 923h1v1h-1zM1183 878h1v1h-1zM1195 878h1v1h-1zM1206 878h1v1h-1zM1218 878h1v1h-1zM1229 878h1v1h-1zM1241 878h1v1h-1zM1252 878h1v1h-1zM1264 878h1v1h-1zM1276 878h1v1h-1zM1287 878h1v1h-1zM1299 878h1v1h-1zM1310 878h1v1h-1zM1322 878h1v1h-1zM1334 878h1v1h-1zM1345 878h1v1h-1zM1357 878h1v1h-1zM1368 878h1v1h-1zM1380 878h1v1h-1zM1392 878h1v1h-1zM1403 878h1v1h-1zM1415 878h1v1h-1zM1426 878h1v1h-1zM1438 878h1v1h-1zM1450 878h1v1h-1zM1461 878h1v1h-1zM1473 878h1v1h-1zM1484 878h1v1h-1zM1496 878h1v1h-1zM1507 878h1v1h-1zM1519 878h1v1h-1zM1531 878h1v1h-1zM1542 878h1v1h-1zM1554 878h1v1h-1zM1565 878h1v1h-1zM1577 878h1v1h-1zM1589 878h1v1h-1zM1600 878h1v1h-1zM1612 878h1v1h-1zM1623 878h1v1h-1zM1635 878h1v1h-1zM1647 878h1v1h-1zM1658 878h1v1h-1zM1670 878h1v1h-1zM1681 878h1v1h-1zM1693 878h1v1h-1zM1704 878h1v1h-1zM1716 878h1v1h-1zM1728 878h1v1h-1zM1739 878h1v1h-1zM1183 833h1v1h-1zM1195 833h1v1h-1zM1206 833h1v1h-1zM1218 833h1v1h-1zM1229 833h1v1h-1zM1241 833h1v1h-1zM1252 833h1v1h-1zM1264 833h1v1h-1zM1276 833h1v1h-1zM1287 833h1v1h-1zM1299 833h1v1h-1zM1310 833h1v1h-1zM1322 833h1v1h-1zM1334 833h1v1h-1zM1345 833h1v1h-1zM1357 833h1v1h-1zM1368 833h1v1h-1zM1380 833h1v1h-1zM1392 833h1v1h-1zM1403 833h1v1h-1zM1415 833h1v1h-1zM1426 833h1v1h-1zM1438 833h1v1h-1zM1450 833h1v1h-1zM1461 833h1v1h-1zM1473 833h1v1h-1zM1484 833h1v1h-1zM1496 833h1v1h-1zM1507 833h1v1h-1zM1519 833h1v1h-1zM1531 833h1v1h-1zM1542 833h1v1h-1zM1554 833h1v1h-1zM1565 833h1v1h-1zM1577 833h1v1h-1zM1589 833h1v1h-1zM1600 833h1v1h-1zM1612 833h1v1h-1zM1623 833h1v1h-1zM1635 833h1v1h-1zM1647 833h1v1h-1zM1658 833h1v1h-1zM1670 833h1v1h-1zM1681 833h1v1h-1zM1693 833h1v1h-1zM1704 833h1v1h-1zM1716 833h1v1h-1zM1728 833h1v1h-1zM1739 833h1v1h-1zM1183 787h1v1h-1zM1195 787h1v1h-1zM1206 787h1v1h-1zM1218 787h1v1h-1zM1229 787h1v1h-1zM1241 787h1v1h-1zM1252 787h1v1h-1zM1264 787h1v1h-1zM1276 787h1v1h-1zM1287 787h1v1h-1zM1299 787h1v1h-1zM1310 787h1v1h-1zM1322 787h1v1h-1zM1334 787h1v1h-1zM1345 787h1v1h-1zM1357 787h1v1h-1zM1368 787h1v1h-1zM1380 787h1v1h-1zM1392 787h1v1h-1zM1403 787h1v1h-1zM1415 787h1v1h-1zM1426 787h1v1h-1zM1438 787h1v1h-1zM1450 787h1v1h-1zM1461 787h1v1h-1zM1473 787h1v1h-1zM1484 787h1v1h-1zM1496 787h1v1h-1zM1507 787h1v1h-1zM1519 787h1v1h-1zM1531 787h1v1h-1zM1542 787h1v1h-1zM1554 787h1v1h-1zM1565 787h1v1h-1zM1577 787h1v1h-1zM1589 787h1v1h-1zM1600 787h1v1h-1zM1612 787h1v1h-1zM1623 787h1v1h-1zM1635 787h1v1h-1zM1647 787h1v1h-1zM1658 787h1v1h-1zM1670 787h1v1h-1zM1681 787h1v1h-1zM1693 787h1v1h-1zM1704 787h1v1h-1zM1716 787h1v1h-1zM1728 787h1v1h-1zM1739 787h1v1h-1zM1183 742h1v1h-1zM1195 742h1v1h-1zM1206 742h1v1h-1zM1218 742h1v1h-1zM1229 742h1v1h-1zM1241 742h1v1h-1zM1252 742h1v1h-1zM1264 742h1v1h-1zM1276 742h1v1h-1zM1287 742h1v1h-1zM1299 742h1v1h-1zM1310 742h1v1h-1zM1322 742h1v1h-1zM1334 742h1v1h-1zM1345 742h1v1h-1zM1357 742h1v1h-1zM1368 742h1v1h-1zM1380 742h1v1h-1zM1392 742h1v1h-1zM1403 742h1v1h-1zM1415 742h1v1h-1zM1426 742h1v1h-1zM1438 742h1v1h-1zM1450 742h1v1h-1zM1461 742h1v1h-1zM1473 742h1v1h-1zM1484 742h1v1h-1zM1496 742h1v1h-1zM1507 742h1v1h-1zM1519 742h1v1h-1zM1531 742h1v1h-1zM1542 742h1v1h-1zM1554 742h1v1h-1zM1565 742h1v1h-1zM1577 742h1v1h-1zM1589 742h1v1h-1zM1600 742h1v1h-1zM1612 742h1v1h-1zM1623 742h1v1h-1zM1635 742h1v1h-1zM1647 742h1v1h-1zM1658 742h1v1h-1zM1670 742h1v1h-1zM1681 742h1v1h-1zM1693 742h1v1h-1zM1704 742h1v1h-1zM1716 742h1v1h-1zM1728 742h1v1h-1zM1739 742h1v1h-1zM1183 696h1v1h-1zM1195 696h1v1h-1zM1206 696h1v1h-1zM1218 696h1v1h-1zM1229 696h1v1h-1zM1241 696h1v1h-1zM1252 696h1v1h-1zM1264 696h1v1h-1zM1276 696h1v1h-1zM1287 696h1v1h-1zM1299 696h1v1h-1zM1310 696h1v1h-1zM1322 696h1v1h-1zM1334 696h1v1h-1zM1345 696h1v1h-1zM1357 696h1v1h-1zM1368 696h1v1h-1zM1380 696h1v1h-1zM1392 696h1v1h-1zM1403 696h1v1h-1zM1415 696h1v1h-1zM1426 696h1v1h-1zM1438 696h1v1h-1zM1450 696h1v1h-1zM1461 696h1v1h-1zM1473 696h1v1h-1zM1484 696h1v1h-1zM1496 696h1v1h-1zM1507 696h1v1h-1zM1519 696h1v1h-1zM1531 696h1v1h-1zM1542 696h1v1h-1zM1554 696h1v1h-1zM1565 696h1v1h-1zM1577 696h1v1h-1zM1589 696h1v1h-1zM1600 696h1v1h-1zM1612 696h1v1h-1zM1623 696h1v1h-1zM1635 696h1v1h-1zM1647 696h1v1h-1zM1658 696h1v1h-1zM1670 696h1v1h-1zM1681 696h1v1h-1zM1693 696h1v1h-1zM1704 696h1v1h-1zM1716 696h1v1h-1zM1728 696h1v1h-1zM1739 696h1v1h-1zM1183 651h1v1h-1zM1195 651h1v1h-1zM1206 651h1v1h-1zM1218 651h1v1h-1zM1229 651h1v1h-1zM1241 651h1v1h-1zM1252 651h1v1h-1zM1264 651h1v1h-1zM1276 651h1v1h-1zM1287 651h1v1h-1zM1299 651h1v1h-1zM1310 651h1v1h-1zM1322 651h1v1h-1zM1334 651h1v1h-1zM1345 651h1v1h-1zM1357 651h1v1h-1zM1368 651h1v1h-1zM1380 651h1v1h-1zM1392 651h1v1h-1zM1403 651h1v1h-1zM1415 651h1v1h-1zM1426 651h1v1h-1zM1438 651h1v1h-1zM1450 651h1v1h-1zM1461 651h1v1h-1zM1473 651h1v1h-1zM1484 651h1v1h-1zM1496 651h1v1h-1zM1507 651h1v1h-1zM1519 651h1v1h-1zM1531 651h1v1h-1zM1542 651h1v1h-1zM1554 651h1v1h-1zM1565 651h1v1h-1zM1577 651h1v1h-1zM1589 651h1v1h-1zM1600 651h1v1h-1zM1612 651h1v1h-1zM1623 651h1v1h-1zM1635 651h1v1h-1zM1647 651h1v1h-1zM1658 651h1v1h-1zM1670 651h1v1h-1zM1681 651h1v1h-1zM1693 651h1v1h-1zM1704 651h1v1h-1zM1716 651h1v1h-1zM1728 651h1v1h-1zM1739 651h1v1h-1zM1183 606h1v1h-1zM1195 606h1v1h-1zM1206 606h1v1h-1zM1218 606h1v1h-1zM1229 606h1v1h-1zM1241 606h1v1h-1zM1252 606h1v1h-1zM1264 606h1v1h-1zM1276 606h1v1h-1zM1287 606h1v1h-1zM1299 606h1v1h-1zM1310 606h1v1h-1zM1322 606h1v1h-1zM1334 606h1v1h-1zM1345 606h1v1h-1zM1357 606h1v1h-1zM1368 606h1v1h-1zM1380 606h1v1h-1zM1392 606h1v1h-1zM1403 606h1v1h-1zM1415 606h1v1h-1zM1426 606h1v1h-1zM1438 606h1v1h-1zM1450 606h1v1h-1zM1461 606h1v1h-1zM1473 606h1v1h-1zM1484 606h1v1h-1zM1496 606h1v1h-1zM1507 606h1v1h-1zM1519 606h1v1h-1zM1531 606h1v1h-1zM1542 606h1v1h-1zM1554 606h1v1h-1zM1565 606h1v1h-1zM1577 606h1v1h-1zM1589 606h1v1h-1zM1600 606h1v1h-1zM1612 606h1v1h-1zM1623 606h1v1h-1zM1635 606h1v1h-1zM1647 606h1v1h-1zM1658 606h1v1h-1zM1670 606h1v1h-1zM1681 606h1v1h-1zM1693 606h1v1h-1zM1704 606h1v1h-1zM1716 606h1v1h-1zM1728 606h1v1h-1zM1739 606h1v1h-1zM1183 560h1v1h-1zM1195 560h1v1h-1zM1206 560h1v1h-1zM1218 560h1v1h-1zM1229 560h1v1h-1zM1241 560h1v1h-1zM1252 560h1v1h-1zM1264 560h1v1h-1zM1276 560h1v1h-1zM1287 560h1v1h-1zM1299 560h1v1h-1zM1310 560h1v1h-1zM1322 560h1v1h-1zM1334 560h1v1h-1zM1345 560h1v1h-1zM1357 560h1v1h-1zM1368 560h1v1h-1zM1380 560h1v1h-1zM1392 560h1v1h-1zM1403 560h1v1h-1zM1415 560h1v1h-1zM1426 560h1v1h-1zM1438 560h1v1h-1zM1450 560h1v1h-1zM1461 560h1v1h-1zM1473 560h1v1h-1zM1484 560h1v1h-1zM1496 560h1v1h-1zM1507 560h1v1h-1zM1519 560h1v1h-1zM1531 560h1v1h-1zM1542 560h1v1h-1zM1554 560h1v1h-1zM1565 560h1v1h-1zM1577 560h1v1h-1zM1589 560h1v1h-1zM1600 560h1v1h-1zM1612 560h1v1h-1zM1623 560h1v1h-1zM1635 560h1v1h-1zM1647 560h1v1h-1zM1658 560h1v1h-1zM1670 560h1v1h-1zM1681 560h1v1h-1zM1693 560h1v1h-1zM1704 560h1v1h-1zM1716 560h1v1h-1zM1728 560h1v1h-1zM1739 560h1v1h-1zM1172 987h1v1h-1zM1172 978h1v1h-1zM1172 969h1v1h-1zM1172 959h1v1h-1zM1172 950h1v1h-1zM1172 941h1v1h-1zM1172 932h1v1h-1zM1172 923h1v1h-1zM1172 914h1v1h-1zM1172 905h1v1h-1zM1172 896h1v1h-1zM1172 887h1v1h-1zM1172 878h1v1h-1zM1172 869h1v1h-1zM1172 860h1v1h-1zM1172 851h1v1h-1zM1172 842h1v1h-1zM1172 833h1v1h-1zM1172 823h1v1h-1zM1172 814h1v1h-1zM1172 805h1v1h-1zM1172 796h1v1h-1zM1172 787h1v1h-1zM1172 778h1v1h-1zM1172 769h1v1h-1zM1172 760h1v1h-1zM1172 751h1v1h-1zM1172 742h1v1h-1zM1172 733h1v1h-1zM1172 724h1v1h-1zM1172 715h1v1h-1zM1172 706h1v1h-1zM1172 696h1v1h-1zM1172 687h1v1h-1zM1172 678h1v1h-1zM1172 669h1v1h-1zM1172 660h1v1h-1zM1172 651h1v1h-1zM1172 642h1v1h-1zM1172 633h1v1h-1zM1172 624h1v1h-1zM1172 615h1v1h-1zM1172 606h1v1h-1zM1172 597h1v1h-1zM1172 588h1v1h-1zM1172 579h1v1h-1zM1172 569h1v1h-1zM1172 560h1v1h-1zM1172 551h1v1h-1zM1172 542h1v1h-1zM1229 987h1v1h-1zM1229 978h1v1h-1zM1229 969h1v1h-1zM1229 959h1v1h-1zM1229 950h1v1h-1zM1229 941h1v1h-1zM1229 932h1v1h-1zM1229 923h1v1h-1zM1229 914h1v1h-1zM1229 905h1v1h-1zM1229 896h1v1h-1zM1229 887h1v1h-1zM1229 878h1v1h-1zM1229 869h1v1h-1zM1229 860h1v1h-1zM1229 851h1v1h-1zM1229 842h1v1h-1zM1229 833h1v1h-1zM1229 823h1v1h-1zM1229 814h1v1h-1zM1229 805h1v1h-1zM1229 796h1v1h-1zM1229 787h1v1h-1zM1229 778h1v1h-1zM1229 769h1v1h-1zM1229 760h1v1h-1zM1229 751h1v1h-1zM1229 742h1v1h-1zM1229 733h1v1h-1zM1229 724h1v1h-1zM1229 715h1v1h-1zM1229 706h1v1h-1zM1229 696h1v1h-1zM1229 687h1v1h-1zM1229 678h1v1h-1zM1229 669h1v1h-1zM1229 660h1v1h-1zM1229 651h1v1h-1zM1229 642h1v1h-1zM1229 633h1v1h-1zM1229 624h1v1h-1zM1229 615h1v1h-1zM1229 606h1v1h-1zM1229 597h1v1h-1zM1229 588h1v1h-1zM1229 579h1v1h-1zM1229 569h1v1h-1zM1229 560h1v1h-1zM1229 551h1v1h-1zM1229 542h1v1h-1zM1287 987h1v1h-1zM1287 978h1v1h-1zM1287 969h1v1h-1zM1287 959h1v1h-1zM1287 950h1v1h-1zM1287 941h1v1h-1zM1287 932h1v1h-1zM1287 923h1v1h-1zM1287 914h1v1h-1zM1287 905h1v1h-1zM1287 896h1v1h-1zM1287 887h1v1h-1zM1287 878h1v1h-1zM1287 869h1v1h-1zM1287 860h1v1h-1zM1287 851h1v1h-1zM1287 842h1v1h-1zM1287 833h1v1h-1zM1287 823h1v1h-1zM1287 814h1v1h-1zM1287 805h1v1h-1zM1287 796h1v1h-1zM1287 787h1v1h-1zM1287 778h1v1h-1zM1287 769h1v1h-1zM1287 760h1v1h-1zM1287 751h1v1h-1zM1287 742h1v1h-1zM1287 733h1v1h-1zM1287 724h1v1h-1zM1287 715h1v1h-1zM1287 706h1v1h-1zM1287 696h1v1h-1zM1287 687h1v1h-1zM1287 678h1v1h-1zM1287 669h1v1h-1zM1287 660h1v1h-1zM1287 651h1v1h-1zM1287 642h1v1h-1zM1287 633h1v1h-1zM1287 624h1v1h-1zM1287 615h1v1h-1zM1287 606h1v1h-1zM1287 597h1v1h-1zM1287 588h1v1h-1zM1287 579h1v1h-1zM1287 569h1v1h-1zM1287 560h1v1h-1zM1287 551h1v1h-1zM1287 542h1v1h-1zM1345 987h1v1h-1zM1345 978h1v1h-1zM1345 969h1v1h-1zM1345 959h1v1h-1zM1345 950h1v1h-1zM1345 941h1v1h-1zM1345 932h1v1h-1zM1345 923h1v1h-1zM1345 914h1v1h-1zM1345 905h1v1h-1zM1345 896h1v1h-1zM1345 887h1v1h-1zM1345 878h1v1h-1zM1345 869h1v1h-1zM1345 860h1v1h-1zM1345 851h1v1h-1zM1345 842h1v1h-1zM1345 833h1v1h-1zM1345 823h1v1h-1zM1345 814h1v1h-1zM1345 805h1v1h-1zM1345 796h1v1h-1zM1345 787h1v1h-1zM1345 778h1v1h-1zM1345 769h1v1h-1zM1345 760h1v1h-1zM1345 751h1v1h-1zM1345 742h1v1h-1zM1345 733h1v1h-1zM1345 724h1v1h-1zM1345 715h1v1h-1zM1345 706h1v1h-1zM1345 696h1v1h-1zM1345 687h1v1h-1zM1345 678h1v1h-1zM1345 669h1v1h-1zM1345 660h1v1h-1zM1345 651h1v1h-1zM1345 642h1v1h-1zM1345 633h1v1h-1zM1345 624h1v1h-1zM1345 615h1v1h-1zM1345 606h1v1h-1zM1345 597h1v1h-1zM1345 588h1v1h-1zM1345 579h1v1h-1zM1345 569h1v1h-1zM1345 560h1v1h-1zM1345 551h1v1h-1zM1345 542h1v1h-1zM1403 987h1v1h-1zM1403 978h1v1h-1zM1403 969h1v1h-1zM1403 959h1v1h-1zM1403 950h1v1h-1zM1403 941h1v1h-1zM1403 932h1v1h-1zM1403 923h1v1h-1zM1403 914h1v1h-1zM1403 905h1v1h-1zM1403 896h1v1h-1zM1403 887h1v1h-1zM1403 878h1v1h-1zM1403 869h1v1h-1zM1403 860h1v1h-1zM1403 851h1v1h-1zM1403 842h1v1h-1zM1403 833h1v1h-1zM1403 823h1v1h-1zM1403 814h1v1h-1zM1403 805h1v1h-1zM1403 796h1v1h-1zM1403 787h1v1h-1zM1403 778h1v1h-1zM1403 769h1v1h-1zM1403 760h1v1h-1zM1403 751h1v1h-1zM1403 742h1v1h-1zM1403 733h1v1h-1zM1403 724h1v1h-1zM1403 715h1v1h-1zM1403 706h1v1h-1zM1403 696h1v1h-1zM1403 687h1v1h-1zM1403 678h1v1h-1zM1403 669h1v1h-1zM1403 660h1v1h-1zM1403 651h1v1h-1zM1403 642h1v1h-1zM1403 633h1v1h-1zM1403 624h1v1h-1zM1403 615h1v1h-1zM1403 606h1v1h-1zM1403 597h1v1h-1zM1403 588h1v1h-1zM1403 579h1v1h-1zM1403 569h1v1h-1zM1403 560h1v1h-1zM1403 551h1v1h-1zM1403 542h1v1h-1zM1461 987h1v1h-1zM1461 978h1v1h-1zM1461 969h1v1h-1zM1461 959h1v1h-1zM1461 950h1v1h-1zM1461 941h1v1h-1zM1461 932h1v1h-1zM1461 923h1v1h-1zM1461 914h1v1h-1zM1461 905h1v1h-1zM1461 896h1v1h-1zM1461 887h1v1h-1zM1461 878h1v1h-1zM1461 869h1v1h-1zM1461 860h1v1h-1zM1461 851h1v1h-1zM1461 842h1v1h-1zM1461 833h1v1h-1zM1461 823h1v1h-1zM1461 814h1v1h-1zM1461 805h1v1h-1zM1461 796h1v1h-1zM1461 787h1v1h-1zM1461 778h1v1h-1zM1461 769h1v1h-1zM1461 760h1v1h-1zM1461 751h1v1h-1zM1461 742h1v1h-1zM1461 733h1v1h-1zM1461 724h1v1h-1zM1461 715h1v1h-1zM1461 706h1v1h-1zM1461 696h1v1h-1zM1461 687h1v1h-1zM1461 678h1v1h-1zM1461 669h1v1h-1zM1461 660h1v1h-1zM1461 651h1v1h-1zM1461 642h1v1h-1zM1461 633h1v1h-1zM1461 624h1v1h-1zM1461 615h1v1h-1zM1461 606h1v1h-1zM1461 597h1v1h-1zM1461 588h1v1h-1zM1461 579h1v1h-1zM1461 569h1v1h-1zM1461 560h1v1h-1zM1461 551h1v1h-1zM1461 542h1v1h-1zM1519 987h1v1h-1zM1519 978h1v1h-1zM1519 969h1v1h-1zM1519 959h1v1h-1zM1519 950h1v1h-1zM1519 941h1v1h-1zM1519 932h1v1h-1zM1519 923h1v1h-1zM1519 914h1v1h-1zM1519 905h1v1h-1zM1519 896h1v1h-1zM1519 887h1v1h-1zM1519 878h1v1h-1zM1519 869h1v1h-1zM1519 860h1v1h-1zM1519 851h1v1h-1zM1519 842h1v1h-1zM1519 833h1v1h-1zM1519 823h1v1h-1zM1519 814h1v1h-1zM1519 805h1v1h-1zM1519 796h1v1h-1zM1519 787h1v1h-1zM1519 778h1v1h-1zM1519 769h1v1h-1zM1519 760h1v1h-1zM1519 751h1v1h-1zM1519 742h1v1h-1zM1519 733h1v1h-1zM1519 724h1v1h-1zM1519 715h1v1h-1zM1519 706h1v1h-1zM1519 696h1v1h-1zM1519 687h1v1h-1zM1519 678h1v1h-1zM1519 669h1v1h-1zM1519 660h1v1h-1zM1519 651h1v1h-1zM1519 642h1v1h-1zM1519 633h1v1h-1zM1519 624h1v1h-1zM1519 615h1v1h-1zM1519 606h1v1h-1zM1519 597h1v1h-1zM1519 588h1v1h-1zM1519 579h1v1h-1zM1519 569h1v1h-1zM1519 560h1v1h-1zM1519 551h1v1h-1zM1519 542h1v1h-1zM1577 987h1v1h-1zM1577 978h1v1h-1zM1577 969h1v1h-1zM1577 959h1v1h-1zM1577 950h1v1h-1zM1577 941h1v1h-1zM1577 932h1v1h-1zM1577 923h1v1h-1zM1577 914h1v1h-1zM1577 905h1v1h-1zM1577 896h1v1h-1zM1577 887h1v1h-1zM1577 878h1v1h-1zM1577 869h1v1h-1zM1577 860h1v1h-1zM1577 851h1v1h-1zM1577 842h1v1h-1zM1577 833h1v1h-1zM1577 823h1v1h-1zM1577 814h1v1h-1zM1577 805h1v1h-1zM1577 796h1v1h-1zM1577 787h1v1h-1zM1577 778h1v1h-1zM1577 769h1v1h-1zM1577 760h1v1h-1zM1577 751h1v1h-1zM1577 742h1v1h-1zM1577 733h1v1h-1zM1577 724h1v1h-1zM1577 715h1v1h-1zM1577 706h1v1h-1zM1577 696h1v1h-1zM1577 687h1v1h-1zM1577 678h1v1h-1zM1577 669h1v1h-1zM1577 660h1v1h-1zM1577 651h1v1h-1zM1577 642h1v1h-1zM1577 633h1v1h-1zM1577 624h1v1h-1zM1577 615h1v1h-1zM1577 606h1v1h-1zM1577 597h1v1h-1zM1577 588h1v1h-1zM1577 579h1v1h-1zM1577 569h1v1h-1zM1577 560h1v1h-1zM1577 551h1v1h-1zM1577 542h1v1h-1zM1635 987h1v1h-1zM1635 978h1v1h-1zM1635 969h1v1h-1zM1635 959h1v1h-1zM1635 950h1v1h-1zM1635 941h1v1h-1zM1635 932h1v1h-1zM1635 923h1v1h-1zM1635 914h1v1h-1zM1635 905h1v1h-1zM1635 896h1v1h-1zM1635 887h1v1h-1zM1635 878h1v1h-1zM1635 869h1v1h-1zM1635 860h1v1h-1zM1635 851h1v1h-1zM1635 842h1v1h-1zM1635 833h1v1h-1zM1635 823h1v1h-1zM1635 814h1v1h-1zM1635 805h1v1h-1zM1635 796h1v1h-1zM1635 787h1v1h-1zM1635 778h1v1h-1zM1635 769h1v1h-1zM1635 760h1v1h-1zM1635 751h1v1h-1zM1635 742h1v1h-1zM1635 733h1v1h-1zM1635 724h1v1h-1zM1635 715h1v1h-1zM1635 706h1v1h-1zM1635 696h1v1h-1zM1635 687h1v1h-1zM1635 678h1v1h-1zM1635 669h1v1h-1zM1635 660h1v1h-1zM1635 651h1v1h-1zM1635 642h1v1h-1zM1635 633h1v1h-1zM1635 624h1v1h-1zM1635 615h1v1h-1zM1635 606h1v1h-1zM1635 597h1v1h-1zM1635 588h1v1h-1zM1635 579h1v1h-1zM1635 569h1v1h-1zM1635 560h1v1h-1zM1635 551h1v1h-1zM1635 542h1v1h-1zM1693 987h1v1h-1zM1693 978h1v1h-1zM1693 969h1v1h-1zM1693 959h1v1h-1zM1693 950h1v1h-1zM1693 941h1v1h-1zM1693 932h1v1h-1zM1693 923h1v1h-1zM1693 914h1v1h-1zM1693 905h1v1h-1zM1693 896h1v1h-1zM1693 887h1v1h-1zM1693 878h1v1h-1zM1693 869h1v1h-1zM1693 860h1v1h-1zM1693 851h1v1h-1zM1693 842h1v1h-1zM1693 833h1v1h-1zM1693 823h1v1h-1zM1693 814h1v1h-1zM1693 805h1v1h-1zM1693 796h1v1h-1zM1693 787h1v1h-1zM1693 778h1v1h-1zM1693 769h1v1h-1zM1693 760h1v1h-1zM1693 751h1v1h-1zM1693 742h1v1h-1zM1693 733h1v1h-1zM1693 724h1v1h-1zM1693 715h1v1h-1zM1693 706h1v1h-1zM1693 696h1v1h-1zM1693 687h1v1h-1zM1693 678h1v1h-1zM1693 669h1v1h-1zM1693 660h1v1h-1zM1693 651h1v1h-1zM1693 642h1v1h-1zM1693 633h1v1h-1zM1693 624h1v1h-1zM1693 615h1v1h-1zM1693 606h1v1h-1zM1693 597h1v1h-1zM1693 588h1v1h-1zM1693 579h1v1h-1zM1693 569h1v1h-1zM1693 560h1v1h-1zM1693 551h1v1h-1zM1693 542h1v1h-1z"/><path d="M1210 924.2 H1716" stroke="#b4b4b4" stroke-width="1" stroke-dasharray="5 3" fill="none"/><path d="M1461.5 540 V976" stroke="#b4b4b4" stroke-width="1" stroke-dasharray="5 3" fill="none"/><path shape-rendering="auto" d="M1172.0 956.5 L1173.5 954.8 L1175.0 956.0 L1176.5 956.7 L1178.0 956.9 L1179.5 956.3 L1181.0 956.7 L1182.5 956.9 L1183.0 958.5 L1184.5 957.6 L1186.0 955.9 L1187.5 956.0 L1189.0 955.0 L1190.5 955.6 L1192.0 954.8 L1193.5 955.9 L1195.0 954.8 L1196.5 954.0 L1198.0 953.4 L1199.5 954.7 L1201.0 953.6 L1202.5 954.1 L1204.0 954.1 L1205.5 952.7 L1207.0 953.5 L1208.5 953.6 L1210.0 952.1 L1211.5 953.2 L1213.1 953.7 L1214.6 954.3 L1216.1 954.2 L1217.6 953.8 L1219.2 954.5 L1220.7 954.5 L1222.2 955.1 L1223.8 953.7 L1225.3 954.6 L1226.8 955.6 L1228.3 954.8 L1229.9 956.0 L1231.4 955.7 L1232.9 955.2 L1234.4 955.9 L1236.0 957.1 L1237.5 956.6 L1238.0 959.5 L1239.5 957.2 L1241.0 956.4 L1242.5 956.2 L1244.0 956.5 L1245.5 955.3 L1247.0 955.5 L1248.5 955.8 L1250.0 955.5 L1251.5 955.0 L1253.0 954.8 L1254.5 953.3 L1256.0 954.4 L1257.5 954.0 L1259.0 953.8 L1260.5 953.0 L1262.0 953.9 L1263.5 953.0 L1265.0 953.0 L1266.5 952.3 L1268.1 952.6 L1269.6 953.4 L1271.1 954.5 L1272.6 954.6 L1274.2 954.3 L1275.7 954.4 L1277.2 953.0 L1278.8 954.4 L1280.3 955.6 L1281.8 955.0 L1283.3 956.1 L1284.9 956.2 L1286.4 956.5 L1287.9 955.8 L1289.4 956.1 L1291.0 956.0 L1292.5 956.9 L1293.0 958.2 L1294.5 958.0 L1296.0 956.2 L1297.5 955.7 L1299.0 956.6 L1300.5 956.2 L1302.0 954.9 L1303.5 955.5 L1305.0 955.1 L1306.5 955.4 L1308.0 954.2 L1309.5 954.8 L1311.0 954.6 L1312.5 954.0 L1314.0 954.2 L1315.5 953.5 L1317.0 953.5 L1318.5 953.5 L1320.0 952.6 L1321.5 952.8 L1323.1 953.0 L1324.6 954.1 L1326.1 954.5 L1327.6 954.0 L1329.2 954.7 L1330.7 953.5 L1332.2 955.3 L1333.8 955.0 L1335.3 954.5 L1336.8 955.4 L1338.3 955.5 L1339.9 955.9 L1341.4 955.7 L1342.9 955.3 L1344.4 955.3 L1346.0 956.5 L1347.5 957.0 L1348.0 958.8 L1349.5 957.2 L1351.0 955.5 L1352.5 956.2 L1354.0 956.4 L1355.5 955.6 L1357.0 955.4 L1358.5 955.4 L1360.0 954.2 L1361.5 955.3 L1363.0 954.9 L1364.5 954.9 L1366.0 953.3 L1367.5 953.7 L1369.0 953.3 L1370.5 954.1 L1372.0 953.7 L1373.5 953.5 L1375.0 952.2 L1376.5 953.8 L1378.0 953.3 L1379.5 953.5 L1381.0 954.0 L1382.5 953.0 L1384.0 953.8 L1385.5 955.0 L1387.0 955.2 L1388.5 953.7 L1390.0 955.0 L1391.5 954.9 L1393.0 956.0 L1394.5 954.3 L1396.0 955.8 L1397.5 956.4 L1399.0 955.3 L1400.5 956.3 L1402.0 956.1 L1403.5 956.7 L1404.0 959.4 L1405.5 957.9 L1407.0 956.5 L1408.5 955.7 L1410.1 956.1 L1411.6 956.0 L1413.1 954.5 L1414.7 954.0 L1416.2 955.1 L1417.7 954.8 L1419.3 953.3 L1420.8 953.5 L1422.3 953.6 L1423.9 954.5 L1425.4 954.3 L1426.9 954.1 L1428.5 953.4 L1430.0 953.3 L1431.6 952.6 L1433.1 953.2 L1434.7 954.1 L1436.2 953.3 L1437.8 954.2 L1439.3 954.5 L1440.9 954.5 L1442.4 954.6 L1444.0 954.7 L1445.5 955.5 L1447.1 955.0 L1448.6 955.7 L1450.2 955.2 L1451.7 956.2 L1453.3 956.1 L1454.8 956.3 L1456.4 955.0 L1457.9 956.6 L1459.5 955.8 L1460.0 958.2 L1461.5 958.2 L1463.0 956.8 L1464.5 956.6 L1466.1 956.5 L1467.6 955.6 L1469.1 955.2 L1470.7 955.7 L1472.2 954.1 L1473.7 955.2 L1475.3 954.9 L1476.8 955.0 L1478.3 954.5 L1479.9 954.2 L1481.4 952.1 L1482.9 953.1 L1484.5 953.7 L1486.0 953.4 L1487.5 953.1 L1489.1 954.1 L1490.6 954.0 L1492.1 953.8 L1493.6 954.0 L1495.2 954.0 L1496.7 954.8 L1498.2 954.9 L1499.8 955.3 L1501.3 955.3 L1502.8 954.6 L1504.3 955.7 L1505.9 956.1 L1507.4 956.3 L1508.9 956.4 L1510.4 956.2 L1512.0 955.9 L1513.5 956.4 L1514.0 958.3 L1515.5 957.1 L1517.0 956.3 L1518.5 956.1 L1520.0 955.9 L1521.5 955.6 L1523.0 955.9 L1524.5 955.1 L1526.0 955.4 L1527.5 954.6 L1529.0 955.3 L1530.5 954.0 L1532.0 954.8 L1533.5 954.4 L1535.0 953.7 L1536.5 953.9 L1538.0 952.6 L1539.5 952.5 L1541.0 952.3 L1542.5 952.5 L1544.0 953.9 L1545.5 953.5 L1547.0 954.0 L1548.5 954.5 L1550.0 954.2 L1551.5 953.7 L1553.0 953.9 L1554.5 954.2 L1556.0 954.7 L1557.5 954.4 L1559.0 955.4 L1560.5 955.8 L1562.0 956.1 L1563.5 956.3 L1565.0 955.6 L1566.5 955.5 L1568.0 956.5 L1569.5 956.9 L1571.0 955.7 L1572.5 956.3 L1573.0 959.4 L1574.5 958.1 L1576.0 956.8 L1577.5 956.4 L1579.0 955.8 L1580.5 955.3 L1582.0 955.0 L1583.5 954.1 L1585.0 954.3 L1586.5 954.8 L1588.0 953.9 L1589.5 954.8 L1591.0 953.5 L1592.5 954.6 L1594.0 953.4 L1595.5 953.4 L1597.0 953.8 L1598.5 953.8 L1600.0 953.2 L1601.5 952.9 L1603.1 953.8 L1604.6 953.7 L1606.1 954.2 L1607.6 954.1 L1609.2 953.8 L1610.7 954.1 L1612.2 954.7 L1613.8 955.0 L1615.3 955.1 L1616.8 955.5 L1618.3 955.8 L1619.9 956.2 L1621.4 954.2 L1622.9 956.8 L1624.4 955.7 L1626.0 956.4 L1627.5 956.7 L1628.0 958.3 L1629.5 958.2 L1631.0 955.7 L1632.5 955.8 L1634.0 956.5 L1635.5 955.2 L1637.0 954.7 L1638.5 955.7 L1640.0 955.4 L1641.5 955.5 L1643.0 953.3 L1644.5 954.2 L1646.0 954.8 L1647.5 954.6 L1649.0 954.0 L1650.5 954.3 L1652.0 953.5 L1653.5 953.2 L1655.0 953.3 L1656.5 953.8 L1658.1 952.7 L1659.6 953.6 L1661.1 954.3 L1662.6 954.5 L1664.2 954.0 L1665.7 954.4 L1667.2 954.4 L1668.8 955.5 L1670.3 955.1 L1671.8 954.9 L1673.3 956.0 L1674.9 956.0 L1676.4 956.2 L1677.9 956.3 L1679.4 956.4 L1681.0 957.1 L1682.5 956.9 L1683.0 958.5 L1684.5 958.2 L1686.0 956.2 L1687.5 956.2 L1689.0 955.7 L1690.5 954.9 L1692.0 955.2 L1693.5 955.6 L1695.0 955.4 L1696.5 953.8 L1698.0 954.2 L1699.5 954.3 L1701.0 954.0 L1702.5 954.5 L1704.0 954.4 L1705.5 953.7 L1707.0 953.8 L1708.5 952.6 L1710.0 952.0 L1711.5 953.5 L1713.1 954.1 L1714.6 953.7 L1716.1 954.5 L1717.6 954.1 L1719.2 954.4 L1720.7 953.4 L1722.2 954.8 L1723.8 955.1 L1725.3 955.2 L1726.8 955.4 L1728.3 954.9 L1729.9 955.7 L1731.4 956.2 L1732.9 956.6 L1734.4 956.6 L1736.0 956.5 L1737.5 956.7 L1738.0 958.6 L1739.5 958.2 L1741.0 956.9 L1742.7 956.0 L1744.3 955.1 L1746.0 954.7 L1747.7 954.7 L1749.3 952.3 L1751.0 953.7 L1751.0 961.0 L1749.3 961.8 L1747.7 963.0 L1746.0 963.0 L1744.3 964.4 L1742.7 964.6 L1741.0 964.9 L1739.5 965.7 L1738.0 966.2 L1737.5 963.0 L1736.0 965.0 L1734.4 963.8 L1732.9 962.4 L1731.4 962.5 L1729.9 962.6 L1728.3 962.9 L1726.8 962.3 L1725.3 962.3 L1723.8 961.9 L1722.2 963.2 L1720.7 961.7 L1719.2 961.9 L1717.6 962.2 L1716.1 962.1 L1714.6 961.3 L1713.1 961.4 L1711.5 961.3 L1710.0 962.0 L1708.5 961.5 L1707.0 962.3 L1705.5 962.8 L1704.0 962.1 L1702.5 962.6 L1701.0 962.7 L1699.5 963.2 L1698.0 964.5 L1696.5 965.6 L1695.0 963.3 L1693.5 964.9 L1692.0 964.9 L1690.5 965.6 L1689.0 965.1 L1687.5 966.2 L1686.0 965.0 L1684.5 966.1 L1683.0 965.7 L1682.5 963.8 L1681.0 964.3 L1679.4 962.7 L1677.9 964.1 L1676.4 963.3 L1674.9 962.5 L1673.3 962.6 L1671.8 962.8 L1670.3 962.4 L1668.8 964.2 L1667.2 963.5 L1665.7 962.0 L1664.2 962.0 L1662.6 962.1 L1661.1 962.5 L1659.6 961.7 L1658.1 962.6 L1656.5 961.1 L1655.0 961.3 L1653.5 961.6 L1652.0 962.2 L1650.5 962.0 L1649.0 963.3 L1647.5 963.2 L1646.0 962.6 L1644.5 963.5 L1643.0 964.1 L1641.5 964.1 L1640.0 964.5 L1638.5 964.0 L1637.0 964.4 L1635.5 964.4 L1634.0 964.6 L1632.5 965.5 L1631.0 965.5 L1629.5 966.1 L1628.0 966.2 L1627.5 962.7 L1626.0 963.1 L1624.4 962.7 L1622.9 962.6 L1621.4 962.4 L1619.9 962.7 L1618.3 962.2 L1616.8 962.1 L1615.3 962.7 L1613.8 963.3 L1612.2 962.2 L1610.7 961.8 L1609.2 962.6 L1607.6 961.7 L1606.1 962.6 L1604.6 961.5 L1603.1 961.5 L1601.5 962.0 L1600.0 961.1 L1598.5 961.8 L1597.0 961.5 L1595.5 962.3 L1594.0 962.8 L1592.5 962.8 L1591.0 962.5 L1589.5 963.0 L1588.0 963.3 L1586.5 963.4 L1585.0 963.4 L1583.5 963.7 L1582.0 964.3 L1580.5 964.8 L1579.0 965.4 L1577.5 966.1 L1576.0 964.8 L1574.5 965.3 L1573.0 966.4 L1572.5 962.7 L1571.0 963.1 L1569.5 964.3 L1568.0 963.6 L1566.5 963.6 L1565.0 963.3 L1563.5 962.9 L1562.0 962.4 L1560.5 962.5 L1559.0 963.3 L1557.5 961.9 L1556.0 961.9 L1554.5 962.7 L1553.0 962.8 L1551.5 962.3 L1550.0 962.1 L1548.5 962.2 L1547.0 962.2 L1545.5 962.3 L1544.0 962.4 L1542.5 961.8 L1541.0 961.1 L1539.5 961.9 L1538.0 963.0 L1536.5 961.9 L1535.0 962.6 L1533.5 962.7 L1532.0 963.0 L1530.5 964.5 L1529.0 964.5 L1527.5 963.1 L1526.0 964.5 L1524.5 964.1 L1523.0 965.5 L1521.5 964.7 L1520.0 964.6 L1518.5 964.9 L1517.0 964.9 L1515.5 965.3 L1514.0 966.0 L1513.5 963.2 L1512.0 963.9 L1510.4 964.1 L1508.9 962.5 L1507.4 963.0 L1505.9 963.2 L1504.3 963.9 L1502.8 962.2 L1501.3 963.5 L1499.8 964.1 L1498.2 962.5 L1496.7 963.2 L1495.2 962.6 L1493.6 961.5 L1492.1 961.6 L1490.6 961.6 L1489.1 961.6 L1487.5 961.1 L1486.0 961.2 L1484.5 961.5 L1482.9 962.6 L1481.4 962.5 L1479.9 963.1 L1478.3 962.8 L1476.8 963.0 L1475.3 964.3 L1473.7 963.0 L1472.2 963.7 L1470.7 963.5 L1469.1 964.0 L1467.6 965.8 L1466.1 965.6 L1464.5 964.5 L1463.0 965.0 L1461.5 966.4 L1460.0 966.0 L1459.5 962.9 L1457.9 963.6 L1456.4 963.1 L1454.8 962.9 L1453.3 963.1 L1451.7 962.3 L1450.2 962.7 L1448.6 962.1 L1447.1 962.1 L1445.5 962.1 L1444.0 962.6 L1442.4 962.4 L1440.9 962.8 L1439.3 961.6 L1437.8 962.4 L1436.2 961.4 L1434.7 961.6 L1433.1 961.5 L1431.6 961.5 L1430.0 961.2 L1428.5 961.3 L1426.9 962.3 L1425.4 962.1 L1423.9 962.5 L1422.3 962.4 L1420.8 963.2 L1419.3 963.3 L1417.7 964.4 L1416.2 963.5 L1414.7 963.4 L1413.1 963.6 L1411.6 964.0 L1410.1 965.2 L1408.5 964.9 L1407.0 965.1 L1405.5 965.9 L1404.0 966.8 L1403.5 962.9 L1402.0 963.0 L1400.5 962.8 L1399.0 963.8 L1397.5 962.9 L1396.0 962.6 L1394.5 962.3 L1393.0 962.9 L1391.5 962.0 L1390.0 963.2 L1388.5 962.3 L1387.0 961.8 L1385.5 961.7 L1384.0 961.9 L1382.5 961.5 L1381.0 961.8 L1379.5 961.8 L1378.0 962.6 L1376.5 961.8 L1375.0 962.6 L1373.5 962.6 L1372.0 962.3 L1370.5 963.1 L1369.0 962.2 L1367.5 963.3 L1366.0 964.0 L1364.5 963.9 L1363.0 963.9 L1361.5 964.0 L1360.0 964.1 L1358.5 963.7 L1357.0 964.3 L1355.5 964.4 L1354.0 965.1 L1352.5 964.8 L1351.0 964.9 L1349.5 965.3 L1348.0 965.8 L1347.5 963.8 L1346.0 963.6 L1344.4 962.9 L1342.9 964.2 L1341.4 962.6 L1339.9 963.2 L1338.3 962.1 L1336.8 963.3 L1335.3 961.9 L1333.8 962.0 L1332.2 961.9 L1330.7 962.2 L1329.2 961.6 L1327.6 962.5 L1326.1 962.7 L1324.6 961.4 L1323.1 961.2 L1321.5 961.1 L1320.0 961.1 L1318.5 962.4 L1317.0 963.1 L1315.5 962.2 L1314.0 962.1 L1312.5 963.5 L1311.0 962.9 L1309.5 963.6 L1308.0 963.5 L1306.5 963.8 L1305.0 964.6 L1303.5 965.1 L1302.0 963.9 L1300.5 965.4 L1299.0 965.6 L1297.5 964.3 L1296.0 964.8 L1294.5 965.6 L1293.0 966.6 L1292.5 963.0 L1291.0 963.2 L1289.4 963.0 L1287.9 963.5 L1286.4 962.3 L1284.9 963.8 L1283.3 962.1 L1281.8 962.8 L1280.3 962.2 L1278.8 962.4 L1277.2 961.8 L1275.7 962.6 L1274.2 962.7 L1272.6 961.9 L1271.1 961.4 L1269.6 961.6 L1268.1 961.4 L1266.5 961.9 L1265.0 961.1 L1263.5 961.9 L1262.0 962.4 L1260.5 962.3 L1259.0 962.4 L1257.5 963.6 L1256.0 962.3 L1254.5 962.8 L1253.0 963.8 L1251.5 964.2 L1250.0 964.5 L1248.5 964.0 L1247.0 964.1 L1245.5 964.2 L1244.0 965.5 L1242.5 965.8 L1241.0 964.8 L1239.5 965.4 L1238.0 965.8 L1237.5 962.8 L1236.0 963.3 L1234.4 962.9 L1232.9 963.6 L1231.4 963.4 L1229.9 962.4 L1228.3 962.7 L1226.8 962.5 L1225.3 963.3 L1223.8 963.3 L1222.2 962.5 L1220.7 962.6 L1219.2 961.9 L1217.6 961.8 L1216.1 962.5 L1214.6 961.8 L1213.1 962.2 L1211.5 961.6 L1210.0 962.1 L1208.5 962.1 L1207.0 962.1 L1205.5 962.5 L1204.0 962.9 L1202.5 962.6 L1201.0 964.6 L1199.5 962.6 L1198.0 963.4 L1196.5 963.2 L1195.0 964.4 L1193.5 964.0 L1192.0 964.4 L1190.5 963.9 L1189.0 965.2 L1187.5 965.4 L1186.0 965.7 L1184.5 966.8 L1183.0 966.9 L1182.5 964.1 L1181.0 963.0 L1179.5 962.8 L1178.0 963.0 L1176.5 963.1 L1175.0 963.2 L1173.5 963.4 L1172.0 963.6 Z" fill="#ffee20"/><path shape-rendering="auto" d="M1177.5 911 H1198 L1210 923 L1198 935 H1177.5 Q1176 935 1176 933.5 V912.5 Q1176 911 1177.5 911 Z" fill="#fff23c" stroke="#8a8420" stroke-width="1"/></svg>
<div class="t" style="left:524.00px;top:103.65px;font-size:13px;line-height:13px;color:#a8a8a8;letter-spacing:0.000px;transform:scaleX(0.9264);transform-origin:0 0;background:linear-gradient(#000,#000) no-repeat 0 1px/100% 9.6px;padding:0 4.5px 0 1px;margin-left:-1px;">1E-1 BER</div>
<div class="t" style="left:524.00px;top:213.65px;font-size:13px;line-height:13px;color:#a8a8a8;letter-spacing:0.000px;transform:scaleX(0.9264);transform-origin:0 0;background:linear-gradient(#000,#000) no-repeat 0 1px/100% 9.6px;padding:0 4.5px 0 1px;margin-left:-1px;">1E-3 BER</div>
<div class="t" style="left:524.00px;top:324.15px;font-size:13px;line-height:13px;color:#a8a8a8;letter-spacing:0.000px;transform:scaleX(0.9264);transform-origin:0 0;background:linear-gradient(#000,#000) no-repeat 0 1px/100% 9.6px;padding:0 4.5px 0 1px;margin-left:-1px;">1E-5 BER</div>
<div class="t" style="left:524.00px;top:434.15px;font-size:13px;line-height:13px;color:#a8a8a8;letter-spacing:0.000px;transform:scaleX(0.9264);transform-origin:0 0;background:linear-gradient(#000,#000) no-repeat 0 1px/100% 9.6px;padding:0 4.5px 0 1px;margin-left:-1px;">1E-7 BER</div>
<div class="t" style="left:524.00px;top:544.75px;font-size:13px;line-height:13px;color:#a8a8a8;letter-spacing:0.000px;transform:scaleX(0.9264);transform-origin:0 0;background:linear-gradient(#000,#000) no-repeat 0 1px/100% 9.6px;padding:0 4.5px 0 1px;margin-left:-1px;">1E-9 BER</div>
<div class="t" style="left:515.70px;top:655.15px;font-size:13px;line-height:13px;color:#a8a8a8;letter-spacing:0.000px;transform:scaleX(0.9637);transform-origin:0 0;background:linear-gradient(#000,#000) no-repeat 0 1px/100% 9.6px;padding:0 4.5px 0 1px;margin-left:-1px;">1E-11 BER</div>
<div class="t" style="left:515.70px;top:765.15px;font-size:13px;line-height:13px;color:#a8a8a8;letter-spacing:0.000px;transform:scaleX(0.9508);transform-origin:0 0;background:linear-gradient(#000,#000) no-repeat 0 1px/100% 9.6px;padding:0 4.5px 0 1px;margin-left:-1px;">1E-13 BER</div>
<div class="t" style="left:515.70px;top:875.15px;font-size:13px;line-height:13px;color:#a8a8a8;letter-spacing:0.000px;transform:scaleX(0.9508);transform-origin:0 0;background:linear-gradient(#000,#000) no-repeat 0 1px/100% 9.6px;padding:0 4.5px 0 1px;margin-left:-1px;">1E-15 BER</div>
<div class="t" style="left:41.70px;top:978.95px;font-size:13px;line-height:13px;color:#b4b4b4;letter-spacing:-0.117px;background:#000;padding:1px 2px 0 1px;margin:-1px -2px 0 -1px;">-0.4 UI</div>
<div class="t" style="left:157.00px;top:978.95px;font-size:13px;line-height:13px;color:#b4b4b4;letter-spacing:0.000px;background:#000;padding:1px 2px 0 1px;margin:-1px -2px 0 -1px;">-0.2 UI</div>
<div class="t" style="left:280.30px;top:978.95px;font-size:13px;line-height:13px;color:#b4b4b4;letter-spacing:0.000px;transform:scaleX(0.9634);transform-origin:0 0;background:#000;padding:1px 2px 0 1px;margin:-1px -2px 0 -1px;">0 UI</div>
<div class="t" style="left:391.30px;top:978.95px;font-size:13px;line-height:13px;color:#b4b4b4;letter-spacing:-0.045px;background:#000;padding:1px 2px 0 1px;margin:-1px -2px 0 -1px;">0.2 UI</div>
<div class="t" style="left:507.30px;top:978.95px;font-size:13px;line-height:13px;color:#b4b4b4;letter-spacing:-0.125px;background:#000;padding:1px 2px 0 1px;margin:-1px -2px 0 -1px;">0.4 UI</div>
<svg width="1920" height="1080" viewBox="0 0 1920 1080" shape-rendering="crispEdges"><polyline points="3.3,105 15,160 26.7,216.7 33.3,266.7 45,358.3 46.7,370 53.3,460 58.3,576.7 61.7,693.3 62.3,718 63.3,736.7 65.7,853.3 67.7,953.3 68.7,991" fill="none" stroke="#12f012" stroke-width="1.3"/><polyline points="581.7,108.3 563.3,166.7 546.7,226.7 536.7,266.7 525,358.3 524,363 516.7,410 511.7,460 506.7,560 503.3,626.7 501,713 500,736.7 497.7,833.3 496,926.7 494.3,991" fill="none" stroke="#12f012" stroke-width="1.3"/></svg>
<div class="t" style="left:1114.30px;top:143.25px;font-size:13px;line-height:13px;color:#b4b4b4;letter-spacing:0.379px;background:#000;">10 khits</div>
<div class="t" style="left:1122.30px;top:322.85px;font-size:13px;line-height:13px;color:#b4b4b4;letter-spacing:0.296px;background:#000;">5 khits</div>
<div class="t" style="left:588.75px;top:494.65px;font-size:13px;line-height:13px;color:#b4b4b4;letter-spacing:-0.021px;text-shadow:0 0 2px #000,0 0 1px #000;">-500 ns</div>
<div class="t" style="left:648.30px;top:494.65px;font-size:13px;line-height:13px;color:#b4b4b4;letter-spacing:0.104px;text-shadow:0 0 2px #000,0 0 1px #000;">-400 ns</div>
<div class="t" style="left:708.30px;top:494.65px;font-size:13px;line-height:13px;color:#b4b4b4;letter-spacing:0.104px;text-shadow:0 0 2px #000,0 0 1px #000;">-300 ns</div>
<div class="t" style="left:768.30px;top:494.65px;font-size:13px;line-height:13px;color:#b4b4b4;letter-spacing:0.104px;text-shadow:0 0 2px #000,0 0 1px #000;">-200 ns</div>
<div class="t" style="left:828.30px;top:494.65px;font-size:13px;line-height:13px;color:#b4b4b4;letter-spacing:0.104px;text-shadow:0 0 2px #000,0 0 1px #000;">-100 ns</div>
<div class="t" style="left:902.70px;top:494.65px;font-size:13px;line-height:13px;color:#b4b4b4;letter-spacing:0.000px;transform:scaleX(0.9554);transform-origin:0 0;text-shadow:0 0 2px #000,0 0 1px #000;">0 s</div>
<div class="t" style="left:951.70px;top:494.65px;font-size:13px;line-height:13px;color:#b4b4b4;letter-spacing:0.060px;text-shadow:0 0 2px #000,0 0 1px #000;">100 ns</div>
<div class="t" style="left:1011.70px;top:494.65px;font-size:13px;line-height:13px;color:#b4b4b4;letter-spacing:0.060px;text-shadow:0 0 2px #000,0 0 1px #000;">200 ns</div>
<div class="t" style="left:1071.70px;top:494.65px;font-size:13px;line-height:13px;color:#b4b4b4;letter-spacing:0.060px;text-shadow:0 0 2px #000,0 0 1px #000;">300 ns</div>
<div class="t" style="left:1129.30px;top:622.25px;font-size:13px;line-height:13px;color:#b4b4b4;letter-spacing:0.163px;background:#000;">10 ns</div>
<div class="t" style="left:1137.30px;top:713.45px;font-size:13px;line-height:13px;color:#b4b4b4;letter-spacing:-0.075px;background:#000;">1 ns</div>
<div class="t" style="left:1121.70px;top:804.65px;font-size:13px;line-height:13px;color:#b4b4b4;letter-spacing:0.200px;background:#000;">100 ps</div>
<div class="t" style="left:1129.70px;top:896.15px;font-size:13px;line-height:13px;color:#c8c8c8;letter-spacing:0.062px;text-shadow:1px 1px 0 #222,0 0 2px #000;">10 ps</div>
<div class="t" style="left:682.70px;top:978.95px;font-size:13px;line-height:13px;color:#c8c8c8;letter-spacing:0.160px;text-shadow:1px 1px 0 #222,0 0 2px #000;">50 kHz</div>
<div class="t" style="left:795.00px;top:978.95px;font-size:13px;line-height:13px;color:#c8c8c8;letter-spacing:0.092px;text-shadow:1px 1px 0 #222,0 0 2px #000;">100 kHz</div>
<div class="t" style="left:911.00px;top:978.95px;font-size:13px;line-height:13px;color:#c8c8c8;letter-spacing:0.158px;text-shadow:1px 1px 0 #222,0 0 2px #000;">150 kHz</div>
<div class="t" style="left:1026.70px;top:978.95px;font-size:13px;line-height:13px;color:#c8c8c8;letter-spacing:0.142px;text-shadow:1px 1px 0 #222,0 0 2px #000;">200 kHz</div>
<div class="t" style="left:1182.60px;top:426.95px;font-size:13px;line-height:13px;color:#f0f0f0;letter-spacing:0.000px;transform:scaleX(0.8615);transform-origin:0 0;text-shadow:0 0 1px #000;">Eye:</div>
<div class="t" style="left:1216.00px;top:426.95px;font-size:13px;line-height:13px;color:#f0f0f0;letter-spacing:1.250px;text-shadow:0 0 1px #000;">All</div>
<div class="t" style="left:1182.60px;top:446.65px;font-size:13px;line-height:13px;color:#f0f0f0;letter-spacing:0.067px;text-shadow:0 0 1px #000;">Offset:</div>
<div class="t" style="left:1231.00px;top:446.65px;font-size:13px;line-height:13px;color:#f0f0f0;letter-spacing:0.000px;text-shadow:0 0 1px #000;">0</div>
<div class="t" style="left:1182.60px;top:466.95px;font-size:13px;line-height:13px;color:#f0f0f0;letter-spacing:0.000px;transform:scaleX(0.8389);transform-origin:0 0;text-shadow:0 0 1px #000;">UIs:</div>
<div class="t" style="left:1213.00px;top:466.95px;font-size:13px;line-height:13px;color:#f0f0f0;letter-spacing:0.125px;text-shadow:0 0 1px #000;">442</div>
<div class="t" style="left:1224.70px;top:495.05px;font-size:13px;line-height:13px;color:#b4b4b4;letter-spacing:0.794px;">-1 µs</div>
<div class="t" style="left:1716.62px;top:158.45px;font-size:13px;line-height:13px;color:#b4b4b4;letter-spacing:0.000px;">1.5 V</div>
<div class="t" style="left:1186.50px;top:918.36px;font-size:9.5px;line-height:9.5px;color:#111;letter-spacing:0.000px;">C</div>
<div class="t" style="left:1194.50px;top:918.36px;font-size:9.5px;line-height:9.5px;color:#111;letter-spacing:0.000px;">1</div>
<div class="t" style="left:1700.95px;top:826.65px;font-size:13px;line-height:13px;color:#f4e830;letter-spacing:0.000px;text-shadow:0 0 2px #000,1px 1px 0 #000;">480 mV</div>
<div class="t" style="left:1700.95px;top:872.65px;font-size:13px;line-height:13px;color:#f4e830;letter-spacing:0.000px;text-shadow:0 0 2px #000,1px 1px 0 #000;">240 mV</div>
<div class="t" style="left:1726.20px;top:917.25px;font-size:13px;line-height:13px;color:#f4e830;letter-spacing:0.000px;text-shadow:0 0 2px #000,1px 1px 0 #000;">0 V</div>
<div class="t" style="left:1209.80px;top:975.35px;font-size:13px;line-height:13px;color:#c4c4c4;letter-spacing:0.010px;background:#000;">-40 ms</div>
<div class="t" style="left:1267.80px;top:975.35px;font-size:13px;line-height:13px;color:#c4c4c4;letter-spacing:0.090px;background:#000;">-30 ms</div>
<div class="t" style="left:1325.60px;top:975.35px;font-size:13px;line-height:13px;color:#c4c4c4;letter-spacing:0.070px;background:#000;">-20 ms</div>
<div class="t" style="left:1383.90px;top:975.35px;font-size:13px;line-height:13px;color:#c4c4c4;letter-spacing:-0.070px;background:#000;">-10 ms</div>
<div class="t" style="left:1452.80px;top:975.35px;font-size:13px;line-height:13px;color:#c4c4c4;letter-spacing:-0.087px;background:#000;">0 s</div>
<div class="t" style="left:1500.00px;top:975.35px;font-size:13px;line-height:13px;color:#c4c4c4;letter-spacing:0.406px;background:#000;">10 ms</div>
<div class="t" style="left:1558.00px;top:975.35px;font-size:13px;line-height:13px;color:#c4c4c4;letter-spacing:0.406px;background:#000;">20 ms</div>
<div class="t" style="left:1616.00px;top:975.35px;font-size:13px;line-height:13px;color:#c4c4c4;letter-spacing:0.406px;background:#000;">30 ms</div>
<div class="t" style="left:1674.00px;top:975.35px;font-size:13px;line-height:13px;color:#c4c4c4;letter-spacing:0.406px;background:#000;">40 ms</div>
<div class="abs" style="left:1235px;top:139px;width:515px;height:670.5px;background:rgba(145,145,145,0.87);border-radius:0 0 5px 5px"></div>
<div class="abs" style="left:1235px;top:95px;width:515px;height:44px;background:#58595b;border-radius:4px 4px 0 0"></div>
<div class="t" style="left:1246.30px;top:108.24px;font-size:16.3px;line-height:16.3px;color:#e8e8e8;letter-spacing:0.000px;transform:scaleX(0.9222);transform-origin:0 0;">ADD MEASUREMENTS</div>
<svg style="left:1702px;top:102px" width="30" height="30" viewBox="0 0 30 30"><circle cx="15" cy="15" r="12.1" fill="none" stroke="#c8c8c8" stroke-width="2.2"/></svg>
<div class="t" style="left:1710.25px;top:106.25px;font-size:22px;line-height:22px;color:#cbcbcb;letter-spacing:0.000px;font-weight:bold;">?</div>
<div class="t" style="left:1250.80px;top:156.24px;font-size:16.5px;line-height:16.5px;color:#e4e4e4;letter-spacing:-0.043px;">Standard</div>
<div class="abs" style="left:1332px;top:153.5px;width:93px;height:28px;background:#c2c2c2;border-radius:5px 5px 0 0;box-shadow:inset 0 1px 0 #e0e0e0"></div>
<div class="t" style="left:1360.00px;top:156.24px;font-size:16.5px;line-height:16.5px;color:#141414;-webkit-text-stroke:0.3px #141414;letter-spacing:0.010px;">Jitter</div>
<div class="abs" style="left:1238px;top:180px;width:507.8px;height:627.3px;background:#c0c0c0;border-radius:4px"></div>
<svg width="0" height="0"><defs><filter id="tb" x="-20%" y="-20%" width="140%" height="140%"><feGaussianBlur stdDeviation="0.8"/></filter></defs></svg>
<div class="abs" style="left:1247px;top:189px;width:491px;height:199.5px;background:#888888;border-radius:9px"></div>
<div class="abs" style="left:1253px;top:195px;width:70px;height:53.5px;border:2px solid #c2c2c2;"><svg width="74" height="57" viewBox="0 0 74 57" style="left:-2px;top:-2px" shape-rendering="auto"><path d="M12 11 V46 M18 11 V46 M46 11 V46 M49 11 V46 M57 11 V46 M60 11 V46" stroke="#d8d8d8" stroke-width="0.7" stroke-dasharray="1 1.5"/><path d="M8 44 H11 V13 H49 V44 H58 V13 H68" fill="none" stroke="#c8b62a" stroke-width="1.1"/><path d="M8 51.5 H68" stroke="#a8a8a8" stroke-width="1.6"/><path d="M16 49.5v4M31 49.5v4M46 49.5v4M60 49.5v4" stroke="#c8c8c8" stroke-width="0.8"/></svg></div>
<div class="abs" style="left:1335px;top:195px;width:70px;height:53.5px;border:2px solid #c2c2c2;"><svg width="74" height="57" viewBox="0 0 74 57" style="left:-2px;top:-2px" shape-rendering="auto"><path d="M11 10 V52 H68 V10" fill="none" stroke="#a0a0a0" stroke-width="0.5"/><path d="M11 12 C23.54 13 29.81 34 31.52 52 M68 12 C55.46 13 49.19 34 47.48 52" fill="none" stroke="#e6d21e" stroke-width="1.1"/><path d="M34 5h5M41 5h3M46 4.5h8" stroke="#111" stroke-width="1.4"/><path d="M12 43 H29 M12 43 l2.5 -1.5 v3z M29 43 l-2.5 -1.5 v3z" stroke="#111" stroke-width="0.6" fill="#111"/><path d="M50 43 H67 M50 43 l2.5 -1.5 v3z M67 43 l-2.5 -1.5 v3z" stroke="#111" stroke-width="0.6" fill="#111"/><path d="M3 43h6" stroke="#111" stroke-width="1.3"/><path d="M19 39.5h2M57 39.5h2" stroke="#111" stroke-width="1.2"/><path d="M31 43.5H48" stroke="#b8b8b8" stroke-width="0.6" stroke-dasharray="1 1.5"/></svg></div>
<div class="abs" style="left:1417px;top:195px;width:70px;height:53.5px;border:2px solid #dedcb6;box-shadow:0 1px 1px #d8d070;"><svg width="74" height="57" viewBox="0 0 74 57" style="left:-2px;top:-2px" shape-rendering="auto"><g stroke="#e6d21e" stroke-width="4.2" opacity="0.55" fill="none" filter="url(#tb)"><path d="M6 5 H69 M6 27.5 H69"/><path d="M9.5 5 L28.5 27.5 M9.5 27.5 L28.5 5"/><path d="M46.5 5 L65.5 27.5 M46.5 27.5 L65.5 5"/></g><g stroke="#e6d21e" stroke-width="1.3" opacity="0.9" fill="none"><path d="M6 5 H69 M6 27.5 H69"/><path d="M9.5 5 L28.5 27.5 M9.5 27.5 L28.5 5"/><path d="M46.5 5 L65.5 27.5 M46.5 27.5 L65.5 5"/></g><path d="M6 16.5H68" stroke="#c8c8c8" stroke-width="0.5" stroke-dasharray="1 1.5"/><path d="M27 16.5 H46 M27 16.5 l2.5 -1.5 v3z M46 16.5 l-2.5 -1.5 v3z" stroke="#111" stroke-width="0.6" fill="#111"/><path d="M18 36 V54 H55 V36" fill="none" stroke="#a8a8a8" stroke-width="0.5"/><path d="M18 36 C26.14 37 30.21 45.9 31.32 54 M55 36 C46.86 37 42.79 45.9 41.68 54" fill="none" stroke="#e6d21e" stroke-width="1.1"/><path d="M27 46.5 H46 M27 46.5 l2.5 -1.5 v3z M46 46.5 l-2.5 -1.5 v3z" stroke="#111" stroke-width="0.6" fill="#111"/></svg></div>
<div class="abs" style="left:1253px;top:261px;width:70px;height:53.5px;border:2px solid #c2c2c2;"><svg width="74" height="57" viewBox="0 0 74 57" style="left:-2px;top:-2px" shape-rendering="auto"><g stroke="#e6d21e" stroke-width="6.5" opacity="0.5" fill="none" filter="url(#tb)"><path d="M7.5 6 H67 M7.5 52 H67"/><path d="M10 6 L29 52 M10 52 L29 6"/><path d="M45.5 6 L64.5 52 M45.5 52 L64.5 6"/></g><g stroke="#e6d21e" stroke-width="2.2" opacity="0.85" fill="none"><path d="M7.5 6 H67 M7.5 52 H67"/><path d="M10 6 L29 52 M10 52 L29 6"/><path d="M45.5 6 L64.5 52 M45.5 52 L64.5 6"/></g><path d="M37.5 12V42" stroke="#111" stroke-width="0.6"/><path d="M37.5 10l-1.6 3h3.2zM37.5 44l-1.6 -3h3.2z" fill="#111"/></svg></div>
<div class="abs" style="left:1335px;top:261px;width:70px;height:53.5px;border:2px solid #c2c2c2;"><svg width="74" height="57" viewBox="0 0 74 57" style="left:-2px;top:-2px" shape-rendering="auto"><path d="M8 10 V52 H66 V10" fill="none" stroke="#a0a0a0" stroke-width="0.5"/><path d="M8 12 C20.76 13 27.14 34 28.88 52 M66 12 C53.24 13 46.86 34 45.12 52" fill="none" stroke="#e6d21e" stroke-width="1.1"/><path d="M22 5 L27 34" stroke="#e8e8e8" stroke-width="0.8"/><path d="M26 3h4M26 8h4M33 5.5h3" stroke="#111" stroke-width="1.3"/></svg></div>
<div class="abs" style="left:1417px;top:261px;width:70px;height:53.5px;border:2px solid #c2c2c2;"><svg width="74" height="57" viewBox="0 0 74 57" style="left:-2px;top:-2px" shape-rendering="auto"><path d="M8 12 V52 H66 V12" fill="none" stroke="#666" stroke-width="0.5"/><path d="M8 13 C20.76 14 27.14 34.45 28.88 52 M66 13 C53.24 14 46.86 34.45 45.12 52" fill="none" stroke="#e6d21e" stroke-width="1.1"/><path d="M9 10 H22 M9 10 l2.5 -1.5 v3z M22 10 l-2.5 -1.5 v3z" stroke="#111" stroke-width="0.6" fill="#111"/><path d="M53 10 H65 M53 10 l2.5 -1.5 v3z M65 10 l-2.5 -1.5 v3z" stroke="#111" stroke-width="0.6" fill="#111"/><path d="M26 6h9M37 6h3M42 5.5h6" stroke="#111" stroke-width="1.3"/><path d="M15 5.5h2.4M58 5.5h2.4" stroke="#111" stroke-width="1.3"/><path d="M23 13H52 M23.5 12V30 M50.5 12V30" fill="none" stroke="#d8d8d8" stroke-width="0.6" stroke-dasharray="1 1.5"/></svg></div>
<div class="abs" style="left:1253px;top:326px;width:70px;height:53.5px;border:2px solid #c2c2c2;"><svg width="74" height="57" viewBox="0 0 74 57" style="left:-2px;top:-2px" shape-rendering="auto"><g stroke="#e6d21e" stroke-width="4.5" opacity="0.5" fill="none" filter="url(#tb)"><path d="M7.5 5 H68 M7.5 26 H68"/><path d="M8.8 5 L29.8 26 M8.8 26 L29.8 5"/><path d="M45.5 5 L66.5 26 M45.5 26 L66.5 5"/></g><g stroke="#e6d21e" stroke-width="1" opacity="0.9" fill="none"><path d="M7.5 5 H68 M7.5 26 H68"/><path d="M8.8 5 L29.8 26 M8.8 26 L29.8 5"/><path d="M45.5 5 L66.5 26 M45.5 26 L66.5 5"/></g><path d="M8 15.5H68" stroke="#c8c8c8" stroke-width="0.5" stroke-dasharray="1 1.5"/><path d="M8 52 H33" stroke="#e6d21e" stroke-width="1"/><path d="M16 52 V31 C17 44 24 44 25 31 V52 Z" fill="#e6d21e"/><path d="M9 31H15M26 31H32" stroke="#111" stroke-width="0.6"/><path d="M15.5 31l-2.5 -1.4v2.8zM25.5 31l2.5 -1.4v2.8z" fill="#111"/></svg></div>
<div class="abs" style="left:1335px;top:326px;width:70px;height:53.5px;border:2px solid #c2c2c2;"><svg width="74" height="57" viewBox="0 0 74 57" style="left:-2px;top:-2px" shape-rendering="auto"><g stroke="#e6d21e" stroke-width="0.8" opacity="0.9" fill="none"><path d="M7 4 H67 M7 26 H67"/><path d="M8.8 4 L20.2 26 M8.8 26 L20.2 4"/><path d="M23.8 4 L35.2 26 M23.8 26 L35.2 4"/><path d="M38.8 4 L50.2 26 M38.8 26 L50.2 4"/><path d="M53.8 4 L65.2 26 M53.8 26 L65.2 4"/></g><g transform="translate(7.5 0)"><g stroke="#e6d21e" stroke-width="0.6" opacity="0.6" fill="none"><path d="M0 4 H52 M0 26 H52"/><path d="M1.56 4 L11.44 26 M1.56 26 L11.44 4"/><path d="M14.56 4 L24.44 26 M14.56 26 L24.44 4"/><path d="M27.56 4 L37.44 26 M27.56 26 L37.44 4"/><path d="M40.56 4 L50.44 26 M40.56 26 L50.44 4"/></g></g><path d="M7 4.5H67M7 26H67" stroke="#e6d21e" stroke-width="1.4"/><path d="M7 15H67" stroke="#c8c8c8" stroke-width="0.5" stroke-dasharray="1 1.5"/><path d="M7 52 H67" stroke="#e6d21e" stroke-width="1.5"/><path d="M19.5 52V35M27.5 52V35" stroke="#e6d21e" stroke-width="1.1"/><path d="M15 52V44M31 52V44" stroke="#e6d21e" stroke-width="1.3" opacity="0.6"/><path d="M16 33l2 -1.5M31 33l-2 -1.5" stroke="#111" stroke-width="1.2"/><path d="M19 30.5h8" stroke="#111" stroke-width="1.6" stroke-dasharray="3.4 1.2"/></svg></div>
<div class="abs" style="left:1417px;top:326px;width:70px;height:53.5px;border:2px solid #c2c2c2;"><svg width="74" height="57" viewBox="0 0 74 57" style="left:-2px;top:-2px" shape-rendering="auto"><g stroke="#e6d21e" stroke-width="0.9" opacity="0.95" fill="none"><path d="M8 4 H68 M8 26 H68"/><path d="M12.1 4 L23.1 26 M12.1 26 L23.1 4"/><path d="M42 4 L53 26 M42 26 L53 4"/></g><path d="M8 4.5H68M8 26H68" stroke="#e6d21e" stroke-width="1.4"/><path d="M8 15H68" stroke="#c8c8c8" stroke-width="0.5" stroke-dasharray="1 1.5"/><path d="M8 52 H68" stroke="#e6d21e" stroke-width="1.5"/><path d="M16.5 52V35M20 52V35" stroke="#e6d21e" stroke-width="1"/><path d="M12 33h3M21 33h3" stroke="#111" stroke-width="0.6"/><path d="M26 33.5h9" stroke="#111" stroke-width="1.6" stroke-dasharray="3.6 1.2"/></svg></div>
<div class="t" style="left:1500.00px;top:190.97px;font-size:15px;line-height:15px;color:#141414;-webkit-text-stroke:0.3px #141414;letter-spacing:0.271px;">Jitter Summary</div>
<div class="t" style="left:1500.00px;top:218.27px;font-size:15px;line-height:15px;color:#141414;-webkit-text-stroke:0.3px #141414;letter-spacing:0.284px;">Jitter Summary is a group</div>
<div class="t" style="left:1500.00px;top:236.17px;font-size:15px;line-height:15px;color:#141414;-webkit-text-stroke:0.3px #141414;letter-spacing:0.609px;">consisting of the following</div>
<div class="t" style="left:1500.00px;top:254.07px;font-size:15px;line-height:15px;color:#141414;-webkit-text-stroke:0.3px #141414;letter-spacing:0.000px;transform:scaleX(0.9477);transform-origin:0 0;">measurements: TIE, TJ@BER, Eye</div>
<div class="t" style="left:1500.00px;top:271.97px;font-size:15px;line-height:15px;color:#141414;-webkit-text-stroke:0.3px #141414;letter-spacing:0.000px;transform:scaleX(0.9601);transform-origin:0 0;">Width@BER, RJ-δδ, DJ-δδ, PJ,</div>
<div class="t" style="left:1500.00px;top:289.87px;font-size:15px;line-height:15px;color:#141414;-webkit-text-stroke:0.3px #141414;letter-spacing:0.000px;transform:scaleX(0.9429);transform-origin:0 0;">DDJ, DCD</div>
<div class="t" style="left:1247.60px;top:392.57px;font-size:15px;line-height:15px;color:#141414;-webkit-text-stroke:0.3px #141414;letter-spacing:0.000px;transform:scaleX(0.9558);transform-origin:0 0;">Source</div>
<div class="abs" style="left:1249.5px;top:412px;width:115px;height:38px;box-sizing:border-box;background:#bcbcbc;border:1px solid #5a96d2;box-shadow:0 0 0 1px #a4bcd8;border-radius:2px"></div>
<div class="t" style="left:1255.40px;top:422.37px;font-size:15px;line-height:15px;color:#141414;-webkit-text-stroke:0.3px #141414;letter-spacing:0.000px;transform:scaleX(0.9043);transform-origin:0 0;">Ch 1</div>
<svg style="left:1344px;top:428px" width="12" height="10" viewBox="0 0 12 10"><path d="M0.8 1 H10.2 L5.5 8 Z" fill="#7e7e7e"/></svg>
<div class="abs" style="left:1661px;top:413.5px;width:74px;height:36.5px;box-sizing:border-box;border:1px solid #5e5e5e;border-radius:6px;background:linear-gradient(#cacbcb,#b2b4b3)"></div>
<div class="t" style="left:1683.50px;top:423.68px;font-size:16px;line-height:16px;color:#141414;-webkit-text-stroke:0.3px #141414;letter-spacing:0.250px;">Add</div>
<div class="abs" style="left:1238px;top:463px;width:507.8px;height:42px;background:linear-gradient(#d9d9d9 70%,#cdcdcd);border-bottom:1.5px solid #646464;box-sizing:border-box"></div>
<div class="t" style="left:1247.20px;top:476.75px;font-size:13px;line-height:13px;color:#141414;-webkit-text-stroke:0.3px #141414;letter-spacing:-0.178px;">JITTER MEASUREMENTS</div>
<div class="abs" style="left:1238px;top:505px;width:507.8px;height:172.5px;background:#c0c0c0"></div>
<div class="abs" style="left:1737px;top:505px;width:4px;height:172.5px;background:#ececec"></div>
<div class="abs" style="left:1741px;top:505px;width:4.3px;height:172.5px;background:#d4d4d4"></div>
<div class="abs" style="left:1741px;top:505px;width:4.3px;height:114px;background:#858585"></div>
<div class="abs" style="left:1247.4px;top:506.3px;width:164.4px;height:42.3px;box-sizing:border-box;border:1px solid #7c7c7c;border-radius:5px;background:#c4c4c4"></div>
<div class="abs" style="left:1250.2px;top:509px;width:36.6px;height:36.8px;box-sizing:border-box;border:1px solid #7a7a7a;border-radius:6px;background:linear-gradient(#cdcdcd,#b4b6b4)"><svg width="37" height="37" viewBox="0 0 37 37" style="left:-1px;top:-1px" shape-rendering="auto"><path d="M7.5 28.5 V11.5 H11 L12.5 9 H19.5 L21 11.5 H28.5 V28.5 Z" fill="#e4e4ec" stroke="#2b2b7c" stroke-width="1.3"/><path d="M12 22.5 H14 L16 13.5 H19.5 L22.5 25 H24 L25.5 22.5" fill="none" stroke="#2b2b7c" stroke-width="1.1"/></svg></div>
<div class="t" style="left:1294.10px;top:520.47px;font-size:15px;line-height:15px;color:#141414;-webkit-text-stroke:0.3px #141414;letter-spacing:0.271px;">Jitter Summary</div>
<div class="abs" style="left:1415.3px;top:509px;width:36.6px;height:36.8px;box-sizing:border-box;border:1px solid #7a7a7a;border-radius:6px;background:linear-gradient(#cdcdcd,#b4b6b4)"><svg width="37" height="37" viewBox="0 0 37 37" style="left:-1px;top:-1px" shape-rendering="auto"><path d="M6.5 15.5 H30.5 M6.5 29.5 H30.5" fill="none" stroke="#2b2b7c" stroke-width="0.9" opacity="0.75"/><path d="M11.5 15.5 C14 15.5 14.6 16.4 15.6 18 L21.4 27 C22.4 28.6 23 29.5 25.5 29.5 M11.5 29.5 C14 29.5 14.6 28.6 15.6 27 L21.4 18 C22.4 16.4 23 15.5 25.5 15.5" fill="none" stroke="#2b2b7c" stroke-width="2.1" shape-rendering="auto"/><text x="20.2227" y="11.3" font-size="7.2" font-weight="bold" fill="#2b2b7c" font-family="Liberation Sans" textLength="11.2773" lengthAdjust="spacingAndGlyphs">TIE</text></svg></div>
<div class="t" style="left:1459.20px;top:520.47px;font-size:15px;line-height:15px;color:#141414;-webkit-text-stroke:0.3px #141414;letter-spacing:0.000px;transform:scaleX(0.8556);transform-origin:0 0;">TIE</div>
<div class="abs" style="left:1580.3px;top:509px;width:36.6px;height:36.8px;box-sizing:border-box;border:1px solid #7a7a7a;border-radius:6px;background:linear-gradient(#cdcdcd,#b4b6b4)"><svg width="37" height="37" viewBox="0 0 37 37" style="left:-1px;top:-1px" shape-rendering="auto"><path d="M7.5 8 V28.5 H30" fill="none" stroke="#7070c8" stroke-width="1"/><path d="M8.5 9.5 L10 12 L10.5 10.5 L12 16 L13 13.5 L14.5 19 L15.5 17.5 L17 22 L18 20.5 L19.5 24 L20.5 22.5 L22 25.5 L23 24.3 L24.5 26.3 L25.5 25.3 L27 27 L28 26.2 L29.5 27.5" fill="none" stroke="#2b2b7c" stroke-width="1.1"/></svg></div>
<div class="t" style="left:1624.20px;top:520.47px;font-size:15px;line-height:15px;color:#141414;-webkit-text-stroke:0.3px #141414;letter-spacing:0.000px;transform:scaleX(0.9647);transform-origin:0 0;">Phase Noise</div>
<div class="abs" style="left:1250.2px;top:552px;width:36.6px;height:36.8px;box-sizing:border-box;border:1px solid #7a7a7a;border-radius:6px;background:linear-gradient(#cdcdcd,#b4b6b4)"><svg width="37" height="37" viewBox="0 0 37 37" style="left:-1px;top:-1px" shape-rendering="auto"><path d="M7 17 H11 C14.5 17 15.5 20 15.5 29 M30 17 H26 C22.5 17 21.5 20 21.5 29" fill="none" stroke="#2b2b7c" stroke-width="1.6"/><path d="M8 23H14M23 23H29" stroke="#2a5a9a" stroke-width="0.8"/><path d="M8 23l2 -1.5v3zM14 23l-2 -1.5v3zM23 23l2 -1.5v3zM29 23l-2 -1.5v3z" fill="#2a5a9a"/><text x="22.5" y="11.3" font-size="7.2" font-weight="bold" fill="#2b2b7c" font-family="Liberation Sans">TJ</text></svg></div>
<div class="t" style="left:1294.10px;top:563.47px;font-size:15px;line-height:15px;color:#141414;-webkit-text-stroke:0.3px #141414;letter-spacing:0.000px;transform:scaleX(0.8287);transform-origin:0 0;">TJ@BER</div>
<div class="abs" style="left:1415.3px;top:552px;width:36.6px;height:36.8px;box-sizing:border-box;border:1px solid #7a7a7a;border-radius:6px;background:linear-gradient(#cdcdcd,#b4b6b4)"><svg width="37" height="37" viewBox="0 0 37 37" style="left:-1px;top:-1px" shape-rendering="auto"><path d="M6.5 15.5 H30.5 M6.5 29.5 H30.5" fill="none" stroke="#2b2b7c" stroke-width="0.9" opacity="0.75"/><path d="M11.5 15.5 C14 15.5 14.6 16.4 15.6 18 L21.4 27 C22.4 28.6 23 29.5 25.5 29.5 M11.5 29.5 C14 29.5 14.6 28.6 15.6 27 L21.4 18 C22.4 16.4 23 15.5 25.5 15.5" fill="none" stroke="#2b2b7c" stroke-width="2.1" shape-rendering="auto"/><text x="13" y="11.3" font-size="7.2" font-weight="bold" fill="#2b2b7c" font-family="Liberation Sans" textLength="18.5" lengthAdjust="spacingAndGlyphs">RJ-dd</text></svg></div>
<div class="t" style="left:1459.20px;top:563.47px;font-size:15px;line-height:15px;color:#141414;-webkit-text-stroke:0.3px #141414;letter-spacing:0.000px;transform:scaleX(0.9500);transform-origin:0 0;">RJ-δδ</div>
<div class="abs" style="left:1580.3px;top:552px;width:36.6px;height:36.8px;box-sizing:border-box;border:1px solid #7a7a7a;border-radius:6px;background:linear-gradient(#cdcdcd,#b4b6b4)"><svg width="37" height="37" viewBox="0 0 37 37" style="left:-1px;top:-1px" shape-rendering="auto"><path d="M6.5 15.5 H30.5 M6.5 29.5 H30.5" fill="none" stroke="#2b2b7c" stroke-width="0.9" opacity="0.75"/><path d="M11.5 15.5 C14 15.5 14.6 16.4 15.6 18 L21.4 27 C22.4 28.6 23 29.5 25.5 29.5 M11.5 29.5 C14 29.5 14.6 28.6 15.6 27 L21.4 18 C22.4 16.4 23 15.5 25.5 15.5" fill="none" stroke="#2b2b7c" stroke-width="2.1" shape-rendering="auto"/><text x="13" y="11.3" font-size="7.2" font-weight="bold" fill="#2b2b7c" font-family="Liberation Sans" textLength="18.5" lengthAdjust="spacingAndGlyphs">DJ-dd</text></svg></div>
<div class="t" style="left:1624.20px;top:563.47px;font-size:15px;line-height:15px;color:#141414;-webkit-text-stroke:0.3px #141414;letter-spacing:-0.250px;">DJ-δδ</div>
<div class="abs" style="left:1250.2px;top:595px;width:36.6px;height:36.8px;box-sizing:border-box;border:1px solid #7a7a7a;border-radius:6px;background:linear-gradient(#cdcdcd,#b4b6b4)"><svg width="37" height="37" viewBox="0 0 37 37" style="left:-1px;top:-1px" shape-rendering="auto"><path d="M6.5 15.5 H30.5 M6.5 29.5 H30.5" fill="none" stroke="#2b2b7c" stroke-width="0.9" opacity="0.75"/><path d="M11.5 15.5 C14 15.5 14.6 16.4 15.6 18 L21.4 27 C22.4 28.6 23 29.5 25.5 29.5 M11.5 29.5 C14 29.5 14.6 28.6 15.6 27 L21.4 18 C22.4 16.4 23 15.5 25.5 15.5" fill="none" stroke="#2b2b7c" stroke-width="2.1" shape-rendering="auto"/><text x="22.6328" y="11.3" font-size="7.2" font-weight="bold" fill="#2b2b7c" font-family="Liberation Sans" textLength="8.86719" lengthAdjust="spacingAndGlyphs">PJ</text></svg></div>
<div class="t" style="left:1294.10px;top:606.47px;font-size:15px;line-height:15px;color:#141414;-webkit-text-stroke:0.3px #141414;letter-spacing:0.000px;transform:scaleX(0.7657);transform-origin:0 0;">PJ</div>
<div class="abs" style="left:1415.3px;top:595px;width:36.6px;height:36.8px;box-sizing:border-box;border:1px solid #7a7a7a;border-radius:6px;background:linear-gradient(#cdcdcd,#b4b6b4)"><svg width="37" height="37" viewBox="0 0 37 37" style="left:-1px;top:-1px" shape-rendering="auto"><path d="M6.5 15.5 H30.5 M6.5 29.5 H30.5" fill="none" stroke="#2b2b7c" stroke-width="0.9" opacity="0.75"/><path d="M11.5 15.5 C14 15.5 14.6 16.4 15.6 18 L21.4 27 C22.4 28.6 23 29.5 25.5 29.5 M11.5 29.5 C14 29.5 14.6 28.6 15.6 27 L21.4 18 C22.4 16.4 23 15.5 25.5 15.5" fill="none" stroke="#2b2b7c" stroke-width="2.1" shape-rendering="auto"/><text x="22.2324" y="11.3" font-size="7.2" font-weight="bold" fill="#2b2b7c" font-family="Liberation Sans" textLength="9.26758" lengthAdjust="spacingAndGlyphs">RJ</text></svg></div>
<div class="t" style="left:1459.20px;top:606.47px;font-size:15px;line-height:15px;color:#141414;-webkit-text-stroke:0.3px #141414;letter-spacing:0.000px;transform:scaleX(0.7782);transform-origin:0 0;">RJ</div>
<div class="abs" style="left:1580.3px;top:595px;width:36.6px;height:36.8px;box-sizing:border-box;border:1px solid #7a7a7a;border-radius:6px;background:linear-gradient(#cdcdcd,#b4b6b4)"><svg width="37" height="37" viewBox="0 0 37 37" style="left:-1px;top:-1px" shape-rendering="auto"><path d="M6.5 15.5 H30.5 M6.5 29.5 H30.5" fill="none" stroke="#2b2b7c" stroke-width="0.9" opacity="0.75"/><path d="M11.5 15.5 C14 15.5 14.6 16.4 15.6 18 L21.4 27 C22.4 28.6 23 29.5 25.5 29.5 M11.5 29.5 C14 29.5 14.6 28.6 15.6 27 L21.4 18 C22.4 16.4 23 15.5 25.5 15.5" fill="none" stroke="#2b2b7c" stroke-width="2.1" shape-rendering="auto"/><text x="22.2324" y="11.3" font-size="7.2" font-weight="bold" fill="#2b2b7c" font-family="Liberation Sans" textLength="9.26758" lengthAdjust="spacingAndGlyphs">DJ</text></svg></div>
<div class="t" style="left:1624.20px;top:606.47px;font-size:15px;line-height:15px;color:#141414;-webkit-text-stroke:0.3px #141414;letter-spacing:0.000px;transform:scaleX(0.8599);transform-origin:0 0;">DJ</div>
<div class="abs" style="left:1250.2px;top:638px;width:36.6px;height:36.8px;box-sizing:border-box;border:1px solid #7a7a7a;border-radius:6px;background:linear-gradient(#cdcdcd,#b4b6b4)"><svg width="37" height="37" viewBox="0 0 37 37" style="left:-1px;top:-1px" shape-rendering="auto"><path d="M6.5 15.5 H30.5 M6.5 29.5 H30.5" fill="none" stroke="#2b2b7c" stroke-width="0.9" opacity="0.75"/><path d="M11.5 15.5 C14 15.5 14.6 16.4 15.6 18 L21.4 27 C22.4 28.6 23 29.5 25.5 29.5 M11.5 29.5 C14 29.5 14.6 28.6 15.6 27 L21.4 18 C22.4 16.4 23 15.5 25.5 15.5" fill="none" stroke="#2b2b7c" stroke-width="2.1" shape-rendering="auto"/><text x="16.9961" y="11.3" font-size="7.2" font-weight="bold" fill="#2b2b7c" font-family="Liberation Sans" textLength="14.5039" lengthAdjust="spacingAndGlyphs">DDJ</text></svg></div>
<div class="t" style="left:1294.10px;top:649.47px;font-size:15px;line-height:15px;color:#141414;-webkit-text-stroke:0.3px #141414;letter-spacing:0.000px;transform:scaleX(0.9270);transform-origin:0 0;">DDJ</div>
<div class="abs" style="left:1415.3px;top:638px;width:36.6px;height:36.8px;box-sizing:border-box;border:1px solid #7a7a7a;border-radius:6px;background:linear-gradient(#cdcdcd,#b4b6b4)"><svg width="37" height="37" viewBox="0 0 37 37" style="left:-1px;top:-1px" shape-rendering="auto"><path d="M6.5 15.5 H30.5 M6.5 29.5 H30.5" fill="none" stroke="#2b2b7c" stroke-width="0.9" opacity="0.75"/><path d="M11.5 15.5 C14 15.5 14.6 16.4 15.6 18 L21.4 27 C22.4 28.6 23 29.5 25.5 29.5 M11.5 29.5 C14 29.5 14.6 28.6 15.6 27 L21.4 18 C22.4 16.4 23 15.5 25.5 15.5" fill="none" stroke="#2b2b7c" stroke-width="2.1" shape-rendering="auto"/><text x="15.791" y="11.3" font-size="7.2" font-weight="bold" fill="#2b2b7c" font-family="Liberation Sans" textLength="15.709" lengthAdjust="spacingAndGlyphs">DCD</text></svg></div>
<div class="t" style="left:1459.20px;top:649.47px;font-size:15px;line-height:15px;color:#141414;-webkit-text-stroke:0.3px #141414;letter-spacing:0.000px;transform:scaleX(0.9077);transform-origin:0 0;">DCD</div>
<div class="abs" style="left:1580.3px;top:638px;width:36.6px;height:36.8px;box-sizing:border-box;border:1px solid #7a7a7a;border-radius:6px;background:linear-gradient(#cdcdcd,#b4b6b4)"><svg width="37" height="37" viewBox="0 0 37 37" style="left:-1px;top:-1px" shape-rendering="auto"><path d="M8 26.5 H11.5 L13.5 14.5 H19.5 L23 29 L24.5 26.5 H26" fill="none" stroke="#2b2b7c" stroke-width="1.3"/><text x="18" y="11.3" font-size="7.2" font-weight="bold" fill="#2b2b7c" font-family="Liberation Sans">SRJ</text></svg></div>
<div class="t" style="left:1624.20px;top:649.47px;font-size:15px;line-height:15px;color:#141414;-webkit-text-stroke:0.3px #141414;letter-spacing:0.000px;transform:scaleX(0.7753);transform-origin:0 0;">SRJ</div>
<div class="abs" style="left:1238px;top:677.5px;width:507.8px;height:43px;background:linear-gradient(#d9d9d9 70%,#cdcdcd);border-bottom:1.5px solid #646464;box-sizing:border-box"></div>
<div class="t" style="left:1247.20px;top:691.75px;font-size:13px;line-height:13px;color:#141414;-webkit-text-stroke:0.3px #141414;letter-spacing:-0.058px;">EYE MEASUREMENTS</div>
<svg style="left:1716px;top:689px" width="18" height="20" viewBox="0 0 18 20"><path d="M5 2.5 L12.5 10 L5 17.5" fill="none" stroke="#333" stroke-width="2.8"/></svg>
<div class="abs" style="left:1238px;top:720.5px;width:507.8px;height:43px;background:linear-gradient(#d9d9d9 70%,#cdcdcd);border-bottom:1.5px solid #646464;box-sizing:border-box"></div>
<div class="t" style="left:1247.20px;top:734.75px;font-size:13px;line-height:13px;color:#141414;-webkit-text-stroke:0.3px #141414;letter-spacing:0.158px;">AMPLITUDE MEASUREMENTS</div>
<svg style="left:1716px;top:732px" width="18" height="20" viewBox="0 0 18 20"><path d="M5 2.5 L12.5 10 L5 17.5" fill="none" stroke="#333" stroke-width="2.8"/></svg>
<div class="abs" style="left:1238px;top:763.5px;width:507.8px;height:43.8px;background:linear-gradient(#d9d9d9 70%,#cdcdcd);border-bottom:1.5px solid #646464;box-sizing:border-box"></div>
<div class="t" style="left:1247.20px;top:778.15px;font-size:13px;line-height:13px;color:#141414;-webkit-text-stroke:0.3px #141414;letter-spacing:0.185px;">TIMING MEASUREMENTS</div>
<svg style="left:1716px;top:775.4px" width="18" height="20" viewBox="0 0 18 20"><path d="M5 2.5 L12.5 10 L5 17.5" fill="none" stroke="#333" stroke-width="2.8"/></svg>
<div class="abs" style="left:1760.3px;top:500.3px;width:3.4px;height:3.4px;background:#e0e0e0;border-radius:2px"></div>
<div class="abs" style="left:1760.3px;top:508.8px;width:3.4px;height:3.4px;background:#e0e0e0;border-radius:2px"></div>
<div class="abs" style="left:1760.3px;top:517.3px;width:3.4px;height:3.4px;background:#e0e0e0;border-radius:2px"></div>
<div class="abs" style="left:1769px;top:26px;width:150px;height:968.5px;box-sizing:border-box;border:1px solid #6b6560;border-right-color:#4a4744;background:#2e2e2e"></div>
<div class="t" style="left:1806.30px;top:28.47px;font-size:15px;line-height:15px;color:#f2f2f2;letter-spacing:0.064px;font-weight:bold;">Add New...</div>
<div class="abs" style="left:1776px;top:53.3px;width:63px;height:36.6px;box-sizing:border-box;border:1px solid #6b6560;border-radius:6px;background:linear-gradient(#404142,#2e2e2e 35%,#2a2a2a 85%,#222)"></div>
<div class="t" style="left:1782.80px;top:63.13px;font-size:15.5px;line-height:15.5px;color:#ececec;letter-spacing:0.000px;transform:scaleX(0.9290);transform-origin:0 0;">Cursors</div>
<div class="abs" style="left:1847px;top:53.3px;width:63px;height:36.6px;box-sizing:border-box;border:1px solid #6b6560;border-radius:6px;background:linear-gradient(#404142,#2e2e2e 35%,#2a2a2a 85%,#222)"></div>
<div class="t" style="left:1862.00px;top:63.13px;font-size:15.5px;line-height:15.5px;color:#ececec;letter-spacing:-0.083px;">Note</div>
<div class="abs" style="left:1776px;top:98.4px;width:63px;height:36.6px;box-sizing:border-box;border:1px solid #6b6560;border-radius:6px;background:linear-gradient(#404142,#2e2e2e 35%,#2a2a2a 85%,#222)"></div>
<div class="t" style="left:1777.60px;top:108.23px;font-size:15.5px;line-height:15.5px;color:#ececec;letter-spacing:-0.192px;">Measure</div>
<div class="abs" style="left:1847px;top:98.4px;width:63px;height:36.6px;box-sizing:border-box;border:1px solid #6b6560;border-radius:6px;background:linear-gradient(#404142,#2e2e2e 35%,#2a2a2a 85%,#222)"></div>
<div class="t" style="left:1855.50px;top:108.23px;font-size:15.5px;line-height:15.5px;color:#ececec;letter-spacing:0.000px;transform:scaleX(0.9160);transform-origin:0 0;">Search</div>
<div class="abs" style="left:1776px;top:143.3px;width:63px;height:36.6px;box-sizing:border-box;border:1px solid #6b6560;border-radius:6px;background:linear-gradient(#404142,#2e2e2e 35%,#2a2a2a 85%,#222)"></div>
<div class="abs" style="left:1847px;top:143.3px;width:63px;height:36.6px;box-sizing:border-box;border:1px solid #6b6560;border-radius:6px;background:linear-gradient(#404142,#2e2e2e 35%,#2a2a2a 85%,#222)"></div>
<div class="t" style="left:1864.50px;top:153.13px;font-size:15.5px;line-height:15.5px;color:#ececec;letter-spacing:0.083px;">Plot</div>
<div class="t" style="left:1783.50px;top:144.87px;font-size:15px;line-height:15px;color:#ececec;letter-spacing:0.000px;transform:scaleX(0.9400);transform-origin:0 0;">Results</div>
<div class="t" style="left:1788.50px;top:160.67px;font-size:15px;line-height:15px;color:#ececec;letter-spacing:0.156px;">Table</div>
<div class="abs" style="left:1773px;top:188px;width:145px;height:1px;background:#6b6560"></div>
<div class="abs" style="left:1773px;top:199px;width:145px;height:193px;background:#c8c8c8;border-radius:5px"></div>
<div class="abs" style="left:1773px;top:199px;width:145px;height:19.5px;background:#000;border-radius:5px 5px 0 0"></div>
<div class="t" style="left:1778.80px;top:201.37px;font-size:15px;line-height:15px;color:#fff23c;letter-spacing:0.000px;transform:scaleX(0.9584);transform-origin:0 0;">Meas 1</div>
<div class="abs" style="left:1891px;top:204px;width:20px;height:10.3px;background:#fff23c;border-radius:2.5px"></div>
<div class="t" style="left:1899.50px;top:204.56px;font-size:9.5px;line-height:9.5px;color:#111;letter-spacing:0.000px;">1</div>
<div class="t" style="left:1780.00px;top:223.72px;font-size:14.5px;line-height:14.5px;color:#141414;-webkit-text-stroke:0.3px #141414;letter-spacing:0.538px;">Jitter Summary</div>
<div class="t" style="left:1780.00px;top:242.82px;font-size:14.5px;line-height:14.5px;color:#141414;-webkit-text-stroke:0.3px #141414;letter-spacing:0.008px;">TIE(σ): 35.07 ns</div>
<div class="t" style="left:1780.00px;top:261.52px;font-size:14.5px;line-height:14.5px;color:#141414;-webkit-text-stroke:0.3px #141414;letter-spacing:0.000px;transform:scaleX(0.9630);transform-origin:0 0;">TJ@: 485.5 ns</div>
<div class="t" style="left:1780.00px;top:280.52px;font-size:14.5px;line-height:14.5px;color:#141414;-webkit-text-stroke:0.3px #141414;letter-spacing:-0.167px;">EW@: 1.514 µs</div>
<div class="t" style="left:1780.00px;top:299.92px;font-size:14.5px;line-height:14.5px;color:#141414;-webkit-text-stroke:0.3px #141414;letter-spacing:0.045px;">RJ-δδ: 10.02 ns</div>
<div class="t" style="left:1780.00px;top:318.82px;font-size:14.5px;line-height:14.5px;color:#141414;-webkit-text-stroke:0.3px #141414;letter-spacing:0.188px;">DJ-δδ: 345.2 ns</div>
<div class="t" style="left:1780.00px;top:337.62px;font-size:14.5px;line-height:14.5px;color:#141414;-webkit-text-stroke:0.3px #141414;letter-spacing:-0.148px;">PJ: 171.9 ns</div>
<div class="t" style="left:1780.00px;top:356.62px;font-size:14.5px;line-height:14.5px;color:#141414;-webkit-text-stroke:0.3px #141414;letter-spacing:0.010px;">DDJ: 218.2 ns</div>
<div class="t" style="left:1780.00px;top:375.62px;font-size:14.5px;line-height:14.5px;color:#141414;-webkit-text-stroke:0.3px #141414;letter-spacing:0.031px;">DCD: 9.835 ns</div>
<div class="abs" style="left:1773px;top:943px;width:145px;height:1px;background:#6b6560"></div>
<div class="abs" style="left:1776.2px;top:952.3px;width:62.6px;height:36.5px;box-sizing:border-box;border:1px solid #6b6560;border-radius:6px;background:linear-gradient(#404142,#2e2e2e 35%,#2a2a2a 85%,#222)"></div>
<svg style="left:1790px;top:954px" width="36" height="34" viewBox="1790 954 36 34"><path d="M1795.5 958.7 H1811 M1795.5 958.7 V974" fill="none" stroke="#bdbdbd" stroke-width="2" stroke-dasharray="2 2.6"/><path d="M1810.3 958.7 V965" fill="none" stroke="#bdbdbd" stroke-width="2" stroke-dasharray="2 2.6"/><path d="M1795.5 973 H1802" fill="none" stroke="#bdbdbd" stroke-width="2" stroke-dasharray="2 2.6"/><circle cx="1809.2" cy="972.2" r="5.2" fill="#8a8a8a" stroke="#d6d6d6" stroke-width="1.5"/><path d="M1813.3 976.3 L1818.6 981.6" stroke="#d6d6d6" stroke-width="3" stroke-linecap="round"/></svg>
<svg style="left:1866px;top:950px" width="34" height="40" viewBox="1866 950 34 40"><g fill="none" stroke="#d4d4d4" stroke-width="1.4"><ellipse cx="1882.5" cy="959.5" rx="13" ry="4.6"/><path d="M1870 962 L1872.5 983.5 C1875 987.5 1890 987.5 1892.5 983.5 L1895 962"/><path d="M1869.7 960.5 V963.5 C1873 967.5 1892 967.5 1895.3 963.5 V960.5"/><path d="M1877 968 L1878 983 M1882.5 968.5 V984 M1888 968 L1887 983" stroke-width="1.1"/><path d="M1879.5 956.6 C1880.5 955.3 1884.5 955.3 1885.5 956.6" stroke-width="1.2"/></g></svg>
<div class="abs" style="left:3px;top:998px;width:90px;height:80px;background:#c8c8c8;border-radius:5px"></div>
<div class="abs" style="left:3px;top:998px;width:90px;height:21px;background:linear-gradient(#fff23c 0,#fff23c 19px,#a6a6a6 19px,#c8c8c8 21px);border-radius:5px 5px 0 0"></div>
<div class="t" style="left:8.70px;top:999.47px;font-size:15px;line-height:15px;color:#141414;-webkit-text-stroke:0.3px #141414;letter-spacing:0.000px;transform:scaleX(0.8949);transform-origin:0 0;">Ch 1</div>
<div class="t" style="left:10.50px;top:1022.37px;font-size:14.8px;line-height:14.8px;color:#141414;-webkit-text-stroke:0.3px #141414;letter-spacing:0.306px;">240 mV/div</div>
<div class="t" style="left:10.50px;top:1041.57px;font-size:14.8px;line-height:14.8px;color:#141414;-webkit-text-stroke:0.3px #141414;letter-spacing:0.000px;">50 Ω</div>
<div class="t" style="left:10.50px;top:1060.07px;font-size:14.8px;line-height:14.8px;color:#141414;-webkit-text-stroke:0.3px #141414;letter-spacing:0.325px;">50 MHz</div>
<div class="t" style="left:76.50px;top:1059.35px;font-size:8.5px;line-height:8.5px;color:#141414;-webkit-text-stroke:0.3px #141414;letter-spacing:0.000px;">B</div>
<div class="t" style="left:82.30px;top:1063.08px;font-size:7px;line-height:7px;color:#141414;-webkit-text-stroke:0.3px #141414;letter-spacing:0.000px;">W</div>
<div class="abs" style="left:663.2px;top:998.2px;width:39.6px;height:79.6px;box-sizing:border-box;border:1px solid #6b6560;border-radius:6px;background:linear-gradient(#3e3f40,#2d2d2d 30%,#2a2a2a 80%,#333)"></div>
<div class="abs" style="left:667.2px;top:1006px;width:31.5px;height:2px;background:#1ec8dc"></div>
<div class="t" style="left:677.19px;top:1025.34px;font-size:21px;line-height:21px;color:#ececec;letter-spacing:0.000px;">2</div>
<div class="abs" style="left:708.23px;top:998.2px;width:39.6px;height:79.6px;box-sizing:border-box;border:1px solid #6b6560;border-radius:6px;background:linear-gradient(#3e3f40,#2d2d2d 30%,#2a2a2a 80%,#333)"></div>
<div class="abs" style="left:712.23px;top:1006px;width:31.5px;height:2px;background:#f0405a"></div>
<div class="t" style="left:722.22px;top:1025.34px;font-size:21px;line-height:21px;color:#ececec;letter-spacing:0.000px;">3</div>
<div class="abs" style="left:753.26px;top:998.2px;width:39.6px;height:79.6px;box-sizing:border-box;border:1px solid #6b6560;border-radius:6px;background:linear-gradient(#3e3f40,#2d2d2d 30%,#2a2a2a 80%,#333)"></div>
<div class="abs" style="left:757.26px;top:1006px;width:31.5px;height:2px;background:#8cdc28"></div>
<div class="t" style="left:767.25px;top:1025.34px;font-size:21px;line-height:21px;color:#ececec;letter-spacing:0.000px;">4</div>
<div class="abs" style="left:798.29px;top:998.2px;width:39.6px;height:79.6px;box-sizing:border-box;border:1px solid #6b6560;border-radius:6px;background:linear-gradient(#3e3f40,#2d2d2d 30%,#2a2a2a 80%,#333)"></div>
<div class="abs" style="left:802.29px;top:1006px;width:31.5px;height:2px;background:#ff9a1e"></div>
<div class="t" style="left:812.28px;top:1025.34px;font-size:21px;line-height:21px;color:#ececec;letter-spacing:0.000px;">5</div>
<div class="abs" style="left:843.32px;top:998.2px;width:39.6px;height:79.6px;box-sizing:border-box;border:1px solid #6b6560;border-radius:6px;background:linear-gradient(#3e3f40,#2d2d2d 30%,#2a2a2a 80%,#333)"></div>
<div class="abs" style="left:847.32px;top:1006px;width:31.5px;height:2px;background:#2626dc"></div>
<div class="t" style="left:857.31px;top:1025.34px;font-size:21px;line-height:21px;color:#ececec;letter-spacing:0.000px;">6</div>
<div class="abs" style="left:888.35px;top:998.2px;width:39.6px;height:79.6px;box-sizing:border-box;border:1px solid #6b6560;border-radius:6px;background:linear-gradient(#3e3f40,#2d2d2d 30%,#2a2a2a 80%,#333)"></div>
<div class="abs" style="left:892.35px;top:1006px;width:31.5px;height:2px;background:#f050b4"></div>
<div class="t" style="left:902.34px;top:1025.34px;font-size:21px;line-height:21px;color:#ececec;letter-spacing:0.000px;">7</div>
<div class="abs" style="left:933.38px;top:998.2px;width:39.6px;height:79.6px;box-sizing:border-box;border:1px solid #6b6560;border-radius:6px;background:linear-gradient(#3e3f40,#2d2d2d 30%,#2a2a2a 80%,#333)"></div>
<div class="abs" style="left:937.38px;top:1006px;width:31.5px;height:2px;background:#00dc96"></div>
<div class="t" style="left:947.37px;top:1025.34px;font-size:21px;line-height:21px;color:#ececec;letter-spacing:0.000px;">8</div>
<div class="abs" style="left:983.5px;top:998px;width:1px;height:80px;background:#555250"></div>
<div class="abs" style="left:1134px;top:998px;width:1px;height:80px;background:#555250"></div>
<div class="abs" style="left:1244.7px;top:998px;width:1px;height:80px;background:#555250"></div>
<div class="abs" style="left:994.2px;top:998.2px;width:39.6px;height:79.6px;box-sizing:border-box;border:1px solid #6b6560;border-radius:6px;background:linear-gradient(#3e3f40,#2d2d2d 30%,#2a2a2a 80%,#333)"></div>
<div class="abs" style="left:998.2px;top:1006px;width:31.5px;height:2px;background:#ff9a1e"></div>
<div class="t" style="left:999.70px;top:1015.67px;font-size:15px;line-height:15px;color:#ececec;letter-spacing:0.925px;">Add</div>
<div class="t" style="left:998.25px;top:1031.67px;font-size:15px;line-height:15px;color:#ececec;letter-spacing:0.750px;">New</div>
<div class="t" style="left:996.00px;top:1047.67px;font-size:15px;line-height:15px;color:#ececec;letter-spacing:0.875px;">Math</div>
<div class="abs" style="left:1039.2px;top:998.2px;width:39.6px;height:79.6px;box-sizing:border-box;border:1px solid #6b6560;border-radius:6px;background:linear-gradient(#3e3f40,#2d2d2d 30%,#2a2a2a 80%,#333)"></div>
<div class="abs" style="left:1043.2px;top:1006px;width:31.5px;height:2px;background:#c8c8dc"></div>
<div class="t" style="left:1044.70px;top:1015.67px;font-size:15px;line-height:15px;color:#ececec;letter-spacing:0.925px;">Add</div>
<div class="t" style="left:1043.25px;top:1031.67px;font-size:15px;line-height:15px;color:#ececec;letter-spacing:0.750px;">New</div>
<div class="t" style="left:1047.50px;top:1047.67px;font-size:15px;line-height:15px;color:#ececec;letter-spacing:-0.188px;">Ref</div>
<div class="abs" style="left:1084.3px;top:998.2px;width:39.6px;height:79.6px;box-sizing:border-box;border:1px solid #6b6560;border-radius:6px;background:linear-gradient(#3e3f40,#2d2d2d 30%,#2a2a2a 80%,#333)"></div>
<div class="abs" style="left:1088.3px;top:1006px;width:31.5px;height:2px;background:#c864f0"></div>
<div class="t" style="left:1089.80px;top:1015.67px;font-size:15px;line-height:15px;color:#ececec;letter-spacing:0.925px;">Add</div>
<div class="t" style="left:1088.35px;top:1031.67px;font-size:15px;line-height:15px;color:#ececec;letter-spacing:0.750px;">New</div>
<div class="t" style="left:1092.10px;top:1047.67px;font-size:15px;line-height:15px;color:#ececec;letter-spacing:0.000px;transform:scaleX(0.9275);transform-origin:0 0;">Bus</div>
<div class="abs" style="left:1145px;top:998.2px;width:39.6px;height:79.6px;box-sizing:border-box;border:1px solid #6b6560;border-radius:6px;background:linear-gradient(#3e3f40,#2d2d2d 30%,#2a2a2a 80%,#333)"></div>
<div class="abs" style="left:1149px;top:1006px;width:31.5px;height:2px;background:#4c4c4c"></div>
<div class="t" style="left:1147.80px;top:1031.67px;font-size:15px;line-height:15px;color:#ececec;letter-spacing:0.312px;">DVM</div>
<div class="abs" style="left:1195px;top:998.2px;width:39.6px;height:79.6px;box-sizing:border-box;border:1px solid #6b6560;border-radius:6px;background:linear-gradient(#3e3f40,#2d2d2d 30%,#2a2a2a 80%,#333)"></div>
<div class="abs" style="left:1199px;top:1006px;width:31.5px;height:2px;background:#4c4c4c"></div>
<div class="t" style="left:1200.80px;top:1031.67px;font-size:15px;line-height:15px;color:#ececec;letter-spacing:0.000px;transform:scaleX(0.9069);transform-origin:0 0;">AFG</div>
<div class="abs" style="left:1256px;top:998px;width:225px;height:80px;background:#c8c8c8;border-radius:5px"></div>
<div class="abs" style="left:1256px;top:998px;width:225px;height:21px;background:linear-gradient(#58595b 0,#58595b 19px,#a6a6a6 19px,#c8c8c8 21px);border-radius:5px 5px 0 0"></div>
<div class="t" style="left:1261.70px;top:999.47px;font-size:15px;line-height:15px;color:#ececec;letter-spacing:0.556px;">Horizontal</div>
<div class="t" style="left:1264.00px;top:1022.37px;font-size:14.8px;line-height:14.8px;color:#141414;-webkit-text-stroke:0.3px #141414;letter-spacing:0.109px;">10 ms/div</div>
<div class="t" style="left:1370.00px;top:1022.37px;font-size:14.8px;line-height:14.8px;color:#141414;-webkit-text-stroke:0.3px #141414;letter-spacing:0.000px;transform:scaleX(0.9716);transform-origin:0 0;">100 ms</div>
<div class="t" style="left:1263.50px;top:1041.27px;font-size:14.8px;line-height:14.8px;color:#141414;-webkit-text-stroke:0.3px #141414;letter-spacing:0.000px;transform:scaleX(0.9352);transform-origin:0 0;">SR: 125 MS/s</div>
<div class="t" style="left:1369.00px;top:1041.27px;font-size:14.8px;line-height:14.8px;color:#141414;-webkit-text-stroke:0.3px #141414;letter-spacing:0.358px;">8 ns/pt</div>
<div class="t" style="left:1263.50px;top:1060.27px;font-size:14.8px;line-height:14.8px;color:#141414;-webkit-text-stroke:0.3px #141414;letter-spacing:0.052px;">RL: 12.5 Mpts</div>
<div class="t" style="left:1388.50px;top:1060.27px;font-size:14.8px;line-height:14.8px;color:#141414;-webkit-text-stroke:0.3px #141414;letter-spacing:0.000px;">50%</div>
<svg style="left:1368px;top:1059px" width="12" height="16" viewBox="0 0 12 16"><path d="M1.2 1.5 H9.8 V9 L5.5 14 L1.2 9 Z" fill="#ff8c1a"/><rect x="2.6" y="2.6" width="5.8" height="6" fill="#111"/><path d="M3.6 4 H7.4 M5.5 4 V8" stroke="#fff" stroke-width="1.2"/></svg>
<div class="abs" style="left:1491px;top:998px;width:160px;height:80px;background:#c8c8c8;border-radius:5px"></div>
<div class="abs" style="left:1491px;top:998px;width:160px;height:21px;background:linear-gradient(#58595b 0,#58595b 19px,#a6a6a6 19px,#c8c8c8 21px);border-radius:5px 5px 0 0"></div>
<div class="t" style="left:1496.70px;top:999.47px;font-size:15px;line-height:15px;color:#ececec;letter-spacing:0.383px;">Trigger</div>
<div class="abs" style="left:1498.3px;top:1022.4px;width:29.7px;height:16px;box-sizing:border-box;background:#fff23c;border:1px solid #222;border-radius:5.5px"></div>
<div class="t" style="left:1510.00px;top:1023.32px;font-size:14.5px;line-height:14.5px;color:#141414;-webkit-text-stroke:0.3px #141414;letter-spacing:0.000px;">1</div>
<svg style="left:1536px;top:1020px" width="20" height="20" viewBox="0 0 20 20"><path d="M1.5 15.5 H6 L13.5 5 H18" fill="none" stroke="#3a3a8c" stroke-width="1.1"/></svg>
<div class="t" style="left:1565.30px;top:1022.37px;font-size:14.8px;line-height:14.8px;color:#141414;-webkit-text-stroke:0.3px #141414;letter-spacing:0.000px;transform:scaleX(0.9623);transform-origin:0 0;">1.6 V</div>
<div class="abs" style="left:1661px;top:998px;width:150px;height:80px;background:#c8c8c8;border-radius:5px"></div>
<div class="abs" style="left:1661px;top:998px;width:150px;height:21px;background:linear-gradient(#58595b 0,#58595b 19px,#a6a6a6 19px,#c8c8c8 21px);border-radius:5px 5px 0 0"></div>
<div class="t" style="left:1666.70px;top:999.47px;font-size:15px;line-height:15px;color:#ececec;letter-spacing:0.430px;">Acquisition</div>
<div class="t" style="left:1668.00px;top:1022.37px;font-size:14.8px;line-height:14.8px;color:#141414;-webkit-text-stroke:0.3px #141414;letter-spacing:0.875px;">Auto,</div>
<div class="t" style="left:1727.70px;top:1022.37px;font-size:14.8px;line-height:14.8px;color:#141414;-webkit-text-stroke:0.3px #141414;letter-spacing:0.467px;">Analyze</div>
<div class="t" style="left:1668.00px;top:1041.27px;font-size:14.8px;line-height:14.8px;color:#141414;-webkit-text-stroke:0.3px #141414;letter-spacing:0.164px;">High Res: 16 bits</div>
<div class="t" style="left:1668.00px;top:1060.27px;font-size:14.8px;line-height:14.8px;color:#141414;-webkit-text-stroke:0.3px #141414;letter-spacing:0.083px;">21 Acqs</div>
<div class="abs" style="left:1821.3px;top:998.7px;width:89px;height:34.6px;box-sizing:border-box;background:#14d214;border:1px solid #2c6a2c;border-radius:6px"></div>
<div class="t" style="left:1837.50px;top:1007.91px;font-size:13.5px;line-height:13.5px;color:#ffffff;letter-spacing:0.000px;font-weight:bold;transform:scaleX(0.9268);transform-origin:0 0;">Triggered</div>
</body></html>
